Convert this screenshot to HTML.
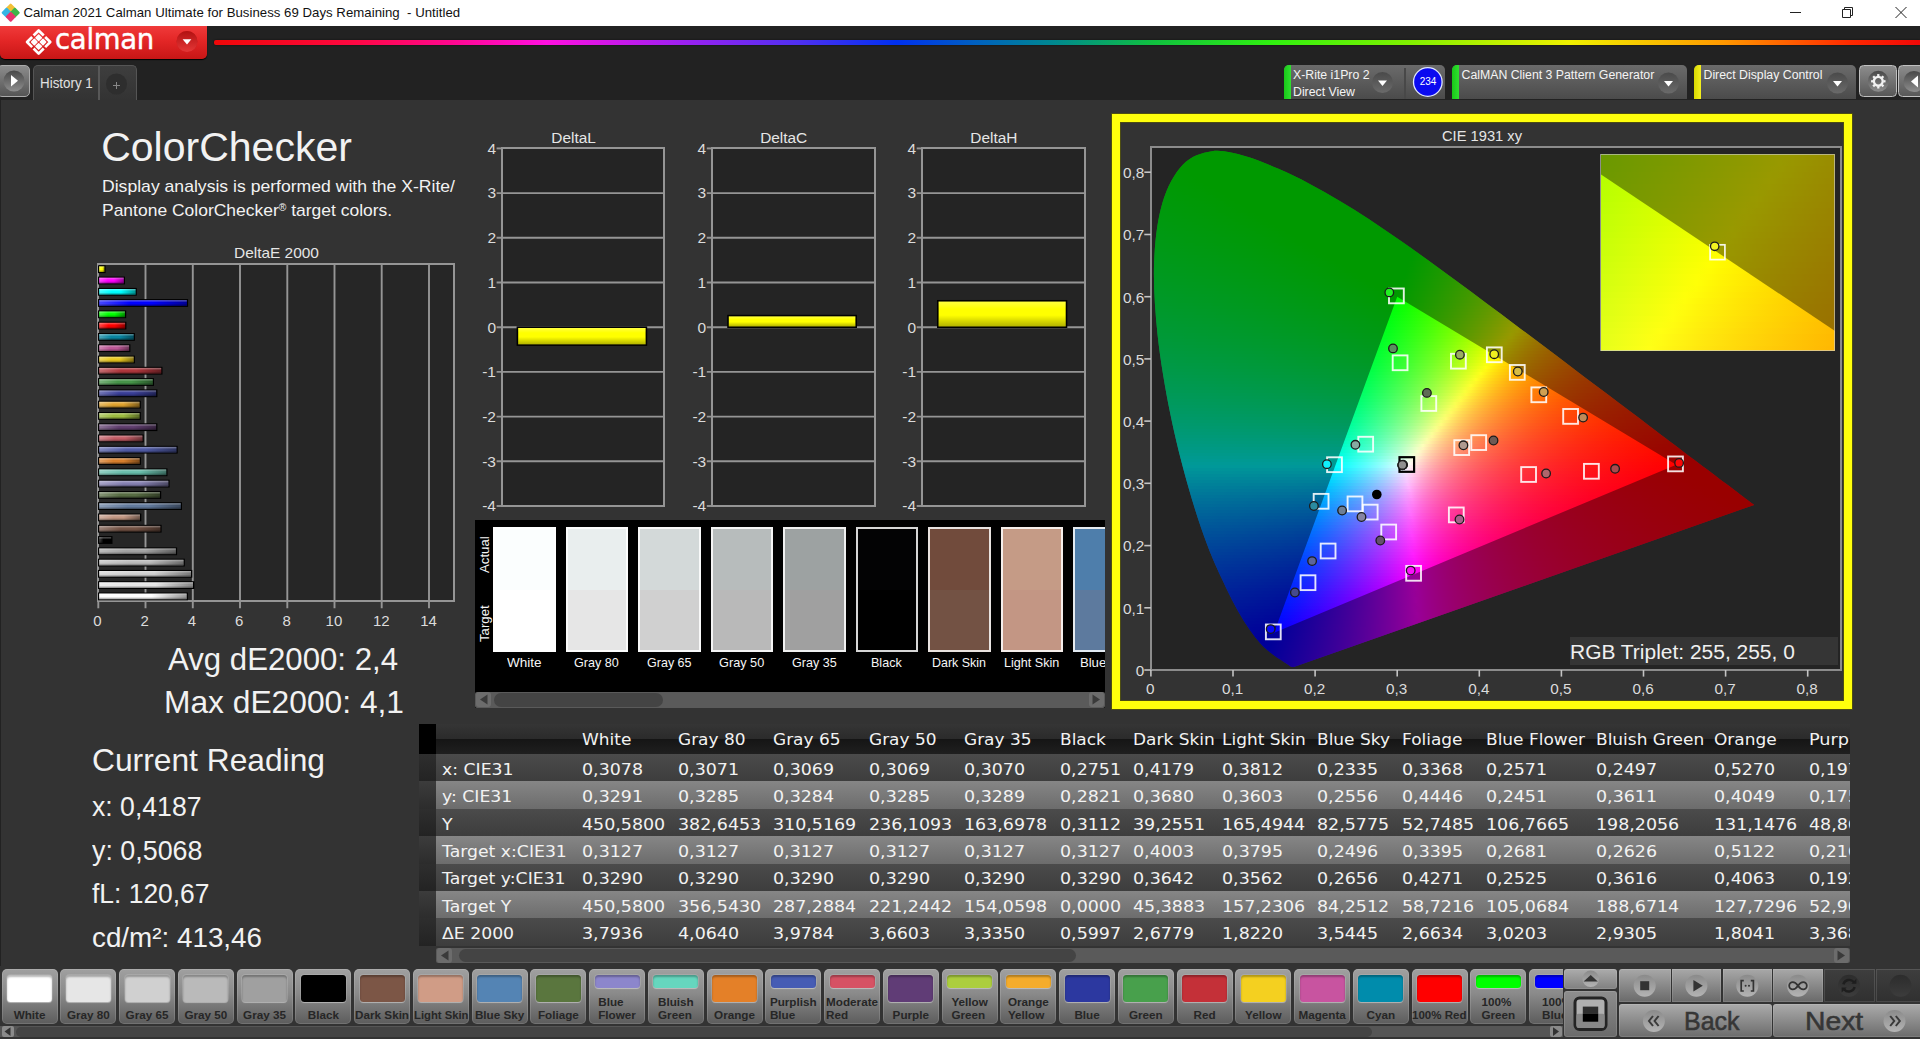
<!DOCTYPE html><html lang="en"><head><meta charset="utf-8"><title>Calman 2021 - ColorChecker</title><style>
*{box-sizing:border-box;margin:0;padding:0}
html,body{width:1920px;height:1039px;overflow:hidden;background:#222}
body{position:relative;font-family:"Liberation Sans","DejaVu Sans",sans-serif;color:#f2f2f2}
.a{position:absolute}
.t{position:absolute;white-space:nowrap;line-height:1}
.c{text-align:center}
.r{text-align:right}
svg{position:absolute;left:0;top:0;overflow:visible}
#cie i,#ins i{position:absolute;display:block;height:3px}#ins i{height:6px}/*EXTRA_CSS*/</style></head><body><div class="a" style="left:0;top:0;width:1920px;height:25.5px;background:#fff"></div><svg width="24" height="26" viewBox="0 0 24 26"><g transform="translate(10.7,12.7) scale(.9)">
<rect x="-4.2" y="-4.2" width="8.4" height="8.4" rx="1.2" transform="translate(0,-4.6) rotate(45)" fill="#f2c037"/>
<rect x="-4.2" y="-4.2" width="8.4" height="8.4" rx="1.2" transform="translate(-4.6,0) rotate(45)" fill="#35b5e5"/>
<rect x="-4.2" y="-4.2" width="8.4" height="8.4" rx="1.2" transform="translate(4.6,0) rotate(45)" fill="#3fb549"/>
<rect x="-4.2" y="-4.2" width="8.4" height="8.4" rx="1.2" transform="translate(0,4.6) rotate(45)" fill="#e8336d"/>
</g></svg><div class="t" id="ttl" style="left:23.4px;top:6px;font-size:13.2px;color:#111;letter-spacing:0.03px">Calman 2021 Calman Ultimate for Business 69 Days Remaining&nbsp; - Untitled</div><svg width="1920" height="26" viewBox="0 0 1920 26"><g stroke="#222" stroke-width="1" fill="none">
<path d="M1790 12.5h11"/>
<path d="M1842.5 9.5h8v8h-8zM1844.5 9.5v-2h8v8h-2"/>
<path d="M1895.5 7l11 11M1906.5 7l-11 11"/></g></svg><div class="a" style="left:0;top:25.5px;width:1920px;height:74.5px;background:#222"></div><div class="a" style="left:214px;top:39.6px;width:1706px;height:5.6px;border-radius:2px 0 0 2px;background:linear-gradient(90deg,#f00808 0%,#ff0840 8%,#ff0890 14%,#ff10e0 19.5%,#a020f0 27.2%,#5030f0 34.2%,#0030f0 40%,#0060c0 44.6%,#008890 49.2%,#10c040 55%,#30f010 62%,#80f000 70%,#f0f000 79.5%,#ff9800 88.5%,#ff2800 96%,#f00808 100%);box-shadow:0 0 2px rgba(0,0,0,.6)"></div><div class="a" style="left:0.3px;top:25.5px;width:206.5px;height:33.4px;border-radius:0 0 5px 5px;background:linear-gradient(#f03a3a 0%,#e32626 45%,#c81616 100%);box-shadow:0 1px 1px #000"></div><svg width="210" height="60" viewBox="0 0 210 60">
<g transform="translate(38.65,42.05) rotate(45)" fill="#fff">
 <g fill="none" stroke="#fff" stroke-width="2.7" stroke-linejoin="round" stroke-linecap="butt">
 <path d="M-8.2 -1V-8.2H-1"/><path d="M1 -8.2H8.2V-1"/><path d="M8.2 1V8.2H1"/><path d="M-1 8.2H-8.2V1"/></g>
 <rect x="-5.75" y="-5.75" width="5.35" height="5.35" rx=".8"/><rect x=".4" y="-5.75" width="5.35" height="5.35" rx=".8"/>
 <rect x="-5.75" y=".4" width="5.35" height="5.35" rx=".8"/><rect x=".4" y=".4" width="5.35" height="5.35" rx=".8"/>
</g>
<circle cx="187" cy="41.5" r="10.5" fill="#c51a1a"/><circle cx="187" cy="41.5" r="10.5" fill="url(#rg1)"/>
<path d="M182.6 39.2h8.8l-4.4 5.2z" fill="#fff"/>
<defs><linearGradient id="rg1" x1="0" y1="0" x2="0" y2="1"><stop offset="0" stop-color="#b01010" stop-opacity=".9"/><stop offset="1" stop-color="#e83a3a" stop-opacity=".9"/></linearGradient></defs>
</svg><div class="t" id="logo" style="left:55.3px;top:25.2px;font-size:28.7px;letter-spacing:-0.3px;color:#fff;-webkit-text-stroke:.45px #fff;font-family:'DejaVu Sans','Liberation Sans',sans-serif;transform-origin:0 0;transform:scaleX(.958)">calman</div><div class="a" style="left:-3px;top:65px;width:33px;height:32px;border-radius:5px;border:1.5px solid #aaa;background:linear-gradient(#8c8c8c,#555)"></div><svg width="40" height="100" viewBox="0 0 40 100"><circle cx="14" cy="81" r="10.5" fill="url(#dcg)"/><path d="M11 75v11.5l7-5.75z" fill="#fff"/></svg><div class="a" style="left:33px;top:65px;width:104px;height:35px;border-radius:5px 5px 0 0;border:1.5px solid #555;border-bottom:0;background:linear-gradient(#3e3e3e,#333)"></div><div class="a" style="left:98px;top:66px;width:2px;height:34px;background:#585858"></div><div class="t" style="left:39.8px;top:76.3px;font-size:14px;color:#e2e2e2;transform-origin:0 0;transform:scaleX(.955)">History 1</div><svg width="140" height="100" viewBox="0 0 140 100"><circle cx="116.5" cy="84" r="10.5" fill="#2e2e2e"/><path d="M113 85.5h7M116.5 82v7" stroke="#888" stroke-width="1"/></svg><div class="a" style="left:1283.5px;top:65px;width:161.5px;height:34px;border-radius:5px 5px 0 0;background:linear-gradient(#6b6b6b,#4b4b4b);overflow:hidden"><div class="a" style="left:0;top:0;width:7px;height:34px;background:linear-gradient(90deg,#18c818,#30e030)"></div></div><div class="a" style="left:1452px;top:65px;width:235px;height:34px;border-radius:5px 5px 0 0;background:linear-gradient(#6b6b6b,#4b4b4b);overflow:hidden"><div class="a" style="left:0;top:0;width:7px;height:34px;background:linear-gradient(90deg,#18c818,#30e030)"></div></div><div class="a" style="left:1694px;top:65px;width:162px;height:34px;border-radius:5px 5px 0 0;background:linear-gradient(#6b6b6b,#4b4b4b);overflow:hidden"><div class="a" style="left:0;top:0;width:7px;height:34px;background:linear-gradient(90deg,#d8d800,#f4f020)"></div></div><div class="a" style="left:1404px;top:68px;width:1.5px;height:31px;background:#484848"></div><div class="t" style="left:1293px;top:67px;font-size:12.3px;color:#f4f4f4;line-height:16.6px">X-Rite i1Pro 2<br>Direct View</div><div class="t" style="left:1461.5px;top:67px;font-size:12.3px;color:#f4f4f4;line-height:16.6px">CalMAN Client 3 Pattern Generator</div><div class="t" style="left:1703.5px;top:67px;font-size:12.3px;color:#f4f4f4;line-height:16.6px">Direct Display Control</div><svg width="1920" height="110" viewBox="0 0 1920 110"><defs><linearGradient id="ddg" x1="0" y1="0" x2="0" y2="1"><stop offset="0" stop-color="#4a4a4a"/><stop offset="1" stop-color="#6a6a6a"/></linearGradient></defs><circle cx="1382.5" cy="82.5" r="10.5" fill="url(#ddg)"/><path d="M1378.0 80.5h9l-4.5 5.4z" fill="#fff"/><circle cx="1668.5" cy="83" r="10.5" fill="url(#ddg)"/><path d="M1664.0 81h9l-4.5 5.4z" fill="#fff"/><circle cx="1837.5" cy="83" r="10.5" fill="url(#ddg)"/><path d="M1833.0 81h9l-4.5 5.4z" fill="#fff"/><circle cx="1427.8" cy="82" r="14.3" fill="#0a0af0" stroke="#dfe6ff" stroke-width="1.3"/></svg><div class="t c" style="left:1412px;width:32px;top:77px;font-size:10px;color:#fff">234</div><div class="a" style="left:1859px;top:64.8px;width:38.4px;height:32.2px;border-radius:4.5px;border:1.8px solid #c0c0c0;background:linear-gradient(#8c8c8c,#585858)"></div><div class="a" style="left:1898.4px;top:64.8px;width:30px;height:32.2px;border-radius:4.5px;border:1.8px solid #c0c0c0;background:linear-gradient(#8c8c8c,#585858)"></div><svg width="1920" height="110" viewBox="0 0 1920 110"><g transform="translate(1878.3,81.3)"><circle r="10.5" fill="url(#dcg)"/><g fill="none" stroke="#f2f2f2" transform="scale(.94)"><circle r="4.7" stroke-width="2.5"/><g stroke-width="2.4"><path d="M5.40 0.00L7.70 0.00"/><path d="M3.82 3.82L5.44 5.44"/><path d="M0.00 5.40L0.00 7.70"/><path d="M-3.82 3.82L-5.44 5.44"/><path d="M-5.40 0.00L-7.70 0.00"/><path d="M-3.82 -3.82L-5.44 -5.44"/><path d="M-0.00 -5.40L-0.00 -7.70"/><path d="M3.82 -3.82L5.44 -5.44"/></g></g></g><defs><linearGradient id="dcg" x1="0" y1="0" x2="0" y2="1"><stop offset="0" stop-color="#484848"/><stop offset="1" stop-color="#8e8e8e"/></linearGradient></defs><circle cx="1914" cy="81.5" r="10.5" fill="url(#dcg)"/><path d="M1918 75.5v12l-7-6z" fill="#fff"/></svg><div class="a" style="left:1px;top:100px;width:1919px;height:866px;background:#333"></div><div class="t" style="left:101.2px;top:127.4px;font-size:41px;">ColorChecker</div><div class="t" style="left:102.3px;top:178.4px;font-size:17px;transform-origin:0 0;transform:scaleX(1.0350);">Display analysis is performed with the X-Rite/</div><div class="t" style="left:102.3px;top:201.6px;font-size:17px;transform-origin:0 0;transform:scaleX(1.0278);">Pantone ColorChecker<span style="font-size:10px;position:relative;top:-5px">®</span> target colors.</div><div class="t" style="left:233.5px;top:246.1px;font-size:14.6px;transform-origin:0 0;transform:scaleX(1.0577);color:#e6e6e6;">DeltaE 2000</div><div class="a" style="left:97.3px;top:263.2px;width:358.0px;height:339.1px;background:#262626;border:2px solid #959595"></div><svg width="1920" height="1039" viewBox="0 0 1920 1039"><g stroke="#959595" stroke-width="1.9"><path d="M145.5 264.2V608.3"/><path d="M192.8 264.2V608.3"/><path d="M240.0 264.2V608.3"/><path d="M287.3 264.2V608.3"/><path d="M334.5 264.2V608.3"/><path d="M381.7 264.2V608.3"/><path d="M429.0 264.2V608.3"/><path d="M98.3 601.3v7"/></g><defs><linearGradient id="bs" x1="0" y1="0" x2="0" y2="1"><stop offset="0" stop-color="#fff" stop-opacity=".38"/><stop offset=".4" stop-color="#fff" stop-opacity="0"/><stop offset=".6" stop-color="#000" stop-opacity="0"/><stop offset="1" stop-color="#000" stop-opacity=".4"/></linearGradient><linearGradient id="bh" x1="0" y1="0" x2="1" y2="0"><stop offset="0" stop-color="#fff" stop-opacity=".28"/><stop offset=".35" stop-color="#fff" stop-opacity="0"/><stop offset=".6" stop-color="#000" stop-opacity="0"/><stop offset="1" stop-color="#000" stop-opacity=".42"/></linearGradient></defs><rect x="98.0" y="265.3" width="7.6" height="7.8" fill="#000"/><rect x="99.2" y="266.4" width="5.1" height="5.6" fill="#ffff00"/><rect x="99.2" y="266.4" width="5.1" height="5.6" fill="url(#bh)"/><rect x="99.2" y="266.4" width="5.1" height="5.6" fill="url(#bs)"/><rect x="98.0" y="276.6" width="27.0" height="7.8" fill="#000"/><rect x="99.2" y="277.7" width="24.5" height="5.6" fill="#ff00ff"/><rect x="99.2" y="277.7" width="24.5" height="5.6" fill="url(#bh)"/><rect x="99.2" y="277.7" width="24.5" height="5.6" fill="url(#bs)"/><rect x="98.0" y="287.9" width="38.8" height="7.8" fill="#000"/><rect x="99.2" y="289.0" width="36.3" height="5.6" fill="#00ffff"/><rect x="99.2" y="289.0" width="36.3" height="5.6" fill="url(#bh)"/><rect x="99.2" y="289.0" width="36.3" height="5.6" fill="url(#bs)"/><rect x="98.0" y="299.1" width="90.1" height="7.8" fill="#000"/><rect x="99.2" y="300.2" width="87.6" height="5.6" fill="#0000ff"/><rect x="99.2" y="300.2" width="87.6" height="5.6" fill="url(#bh)"/><rect x="99.2" y="300.2" width="87.6" height="5.6" fill="url(#bs)"/><rect x="98.0" y="310.4" width="28.2" height="7.8" fill="#000"/><rect x="99.2" y="311.5" width="25.7" height="5.6" fill="#00ff00"/><rect x="99.2" y="311.5" width="25.7" height="5.6" fill="url(#bh)"/><rect x="99.2" y="311.5" width="25.7" height="5.6" fill="url(#bs)"/><rect x="98.0" y="321.7" width="28.4" height="7.8" fill="#000"/><rect x="99.2" y="322.8" width="25.9" height="5.6" fill="#ff0000"/><rect x="99.2" y="322.8" width="25.9" height="5.6" fill="url(#bh)"/><rect x="99.2" y="322.8" width="25.9" height="5.6" fill="url(#bs)"/><rect x="98.0" y="333.0" width="36.9" height="7.8" fill="#000"/><rect x="99.2" y="334.1" width="34.4" height="5.6" fill="#0885a1"/><rect x="99.2" y="334.1" width="34.4" height="5.6" fill="url(#bh)"/><rect x="99.2" y="334.1" width="34.4" height="5.6" fill="url(#bs)"/><rect x="98.0" y="344.3" width="32.4" height="7.8" fill="#000"/><rect x="99.2" y="345.4" width="29.9" height="5.6" fill="#bb5695"/><rect x="99.2" y="345.4" width="29.9" height="5.6" fill="url(#bh)"/><rect x="99.2" y="345.4" width="29.9" height="5.6" fill="url(#bs)"/><rect x="98.0" y="355.6" width="36.9" height="7.8" fill="#000"/><rect x="99.2" y="356.7" width="34.4" height="5.6" fill="#e7c71f"/><rect x="99.2" y="356.7" width="34.4" height="5.6" fill="url(#bh)"/><rect x="99.2" y="356.7" width="34.4" height="5.6" fill="url(#bs)"/><rect x="98.0" y="366.8" width="64.5" height="7.8" fill="#000"/><rect x="99.2" y="367.9" width="62.0" height="5.6" fill="#af363c"/><rect x="99.2" y="367.9" width="62.0" height="5.6" fill="url(#bh)"/><rect x="99.2" y="367.9" width="62.0" height="5.6" fill="url(#bs)"/><rect x="98.0" y="378.1" width="56.0" height="7.8" fill="#000"/><rect x="99.2" y="379.2" width="53.5" height="5.6" fill="#469449"/><rect x="99.2" y="379.2" width="53.5" height="5.6" fill="url(#bh)"/><rect x="99.2" y="379.2" width="53.5" height="5.6" fill="url(#bs)"/><rect x="98.0" y="389.4" width="59.4" height="7.8" fill="#000"/><rect x="99.2" y="390.5" width="56.9" height="5.6" fill="#383d96"/><rect x="99.2" y="390.5" width="56.9" height="5.6" fill="url(#bh)"/><rect x="99.2" y="390.5" width="56.9" height="5.6" fill="url(#bs)"/><rect x="98.0" y="400.7" width="42.8" height="7.8" fill="#000"/><rect x="99.2" y="401.8" width="40.3" height="5.6" fill="#e0a32e"/><rect x="99.2" y="401.8" width="40.3" height="5.6" fill="url(#bh)"/><rect x="99.2" y="401.8" width="40.3" height="5.6" fill="url(#bs)"/><rect x="98.0" y="412.0" width="42.8" height="7.8" fill="#000"/><rect x="99.2" y="413.1" width="40.3" height="5.6" fill="#9dbc40"/><rect x="99.2" y="413.1" width="40.3" height="5.6" fill="url(#bh)"/><rect x="99.2" y="413.1" width="40.3" height="5.6" fill="url(#bs)"/><rect x="98.0" y="423.3" width="59.4" height="7.8" fill="#000"/><rect x="99.2" y="424.4" width="56.9" height="5.6" fill="#5e3c6c"/><rect x="99.2" y="424.4" width="56.9" height="5.6" fill="url(#bh)"/><rect x="99.2" y="424.4" width="56.9" height="5.6" fill="url(#bs)"/><rect x="98.0" y="434.5" width="45.7" height="7.8" fill="#000"/><rect x="99.2" y="435.6" width="43.2" height="5.6" fill="#c15a63"/><rect x="99.2" y="435.6" width="43.2" height="5.6" fill="url(#bh)"/><rect x="99.2" y="435.6" width="43.2" height="5.6" fill="url(#bs)"/><rect x="98.0" y="445.8" width="79.7" height="7.8" fill="#000"/><rect x="99.2" y="446.9" width="77.2" height="5.6" fill="#505ba6"/><rect x="99.2" y="446.9" width="77.2" height="5.6" fill="url(#bh)"/><rect x="99.2" y="446.9" width="77.2" height="5.6" fill="url(#bs)"/><rect x="98.0" y="457.1" width="42.9" height="7.8" fill="#000"/><rect x="99.2" y="458.2" width="40.4" height="5.6" fill="#d67e2c"/><rect x="99.2" y="458.2" width="40.4" height="5.6" fill="url(#bh)"/><rect x="99.2" y="458.2" width="40.4" height="5.6" fill="url(#bs)"/><rect x="98.0" y="468.4" width="69.5" height="7.8" fill="#000"/><rect x="99.2" y="469.5" width="67.0" height="5.6" fill="#67bdaa"/><rect x="99.2" y="469.5" width="67.0" height="5.6" fill="url(#bh)"/><rect x="99.2" y="469.5" width="67.0" height="5.6" fill="url(#bs)"/><rect x="98.0" y="479.7" width="71.6" height="7.8" fill="#000"/><rect x="99.2" y="480.8" width="69.1" height="5.6" fill="#8580b1"/><rect x="99.2" y="480.8" width="69.1" height="5.6" fill="url(#bh)"/><rect x="99.2" y="480.8" width="69.1" height="5.6" fill="url(#bs)"/><rect x="98.0" y="491.0" width="63.2" height="7.8" fill="#000"/><rect x="99.2" y="492.1" width="60.7" height="5.6" fill="#576c43"/><rect x="99.2" y="492.1" width="60.7" height="5.6" fill="url(#bh)"/><rect x="99.2" y="492.1" width="60.7" height="5.6" fill="url(#bs)"/><rect x="98.0" y="502.2" width="84.0" height="7.8" fill="#000"/><rect x="99.2" y="503.3" width="81.5" height="5.6" fill="#627a9d"/><rect x="99.2" y="503.3" width="81.5" height="5.6" fill="url(#bh)"/><rect x="99.2" y="503.3" width="81.5" height="5.6" fill="url(#bs)"/><rect x="98.0" y="513.5" width="43.3" height="7.8" fill="#000"/><rect x="99.2" y="514.6" width="40.8" height="5.6" fill="#c29682"/><rect x="99.2" y="514.6" width="40.8" height="5.6" fill="url(#bh)"/><rect x="99.2" y="514.6" width="40.8" height="5.6" fill="url(#bs)"/><rect x="98.0" y="524.8" width="63.6" height="7.8" fill="#000"/><rect x="99.2" y="525.9" width="61.1" height="5.6" fill="#735244"/><rect x="99.2" y="525.9" width="61.1" height="5.6" fill="url(#bh)"/><rect x="99.2" y="525.9" width="61.1" height="5.6" fill="url(#bs)"/><rect x="98.0" y="536.1" width="14.5" height="7.8" fill="#000"/><rect x="99.2" y="537.2" width="12.0" height="5.6" fill="#000000"/><rect x="99.2" y="537.2" width="12.0" height="5.6" fill="url(#bh)"/><rect x="99.2" y="537.2" width="12.0" height="5.6" fill="url(#bs)"/><rect x="98.0" y="547.4" width="79.1" height="7.8" fill="#000"/><rect x="99.2" y="548.5" width="76.6" height="5.6" fill="#a0a0a0"/><rect x="99.2" y="548.5" width="76.6" height="5.6" fill="url(#bh)"/><rect x="99.2" y="548.5" width="76.6" height="5.6" fill="url(#bs)"/><rect x="98.0" y="558.7" width="86.8" height="7.8" fill="#000"/><rect x="99.2" y="559.8" width="84.3" height="5.6" fill="#bababa"/><rect x="99.2" y="559.8" width="84.3" height="5.6" fill="url(#bh)"/><rect x="99.2" y="559.8" width="84.3" height="5.6" fill="url(#bs)"/><rect x="98.0" y="569.9" width="94.3" height="7.8" fill="#000"/><rect x="99.2" y="571.0" width="91.8" height="5.6" fill="#d0d0d0"/><rect x="99.2" y="571.0" width="91.8" height="5.6" fill="url(#bh)"/><rect x="99.2" y="571.0" width="91.8" height="5.6" fill="url(#bs)"/><rect x="98.0" y="581.2" width="96.3" height="7.8" fill="#000"/><rect x="99.2" y="582.3" width="93.8" height="5.6" fill="#e6e6e6"/><rect x="99.2" y="582.3" width="93.8" height="5.6" fill="url(#bh)"/><rect x="99.2" y="582.3" width="93.8" height="5.6" fill="url(#bs)"/><rect x="98.0" y="592.5" width="89.9" height="7.8" fill="#000"/><rect x="99.2" y="593.6" width="87.4" height="5.6" fill="#ffffff"/><rect x="99.2" y="593.6" width="87.4" height="5.6" fill="url(#bh)"/><rect x="99.2" y="593.6" width="87.4" height="5.6" fill="url(#bs)"/></svg><div class="t" style="left:93.2px;top:612.5px;font-size:15.0px;color:#dcdcdc;">0</div><div class="t" style="left:140.5px;top:612.5px;font-size:15.0px;color:#dcdcdc;">2</div><div class="t" style="left:187.8px;top:612.5px;font-size:15.0px;color:#dcdcdc;">4</div><div class="t" style="left:235.1px;top:612.5px;font-size:15.0px;color:#dcdcdc;">6</div><div class="t" style="left:282.4px;top:612.5px;font-size:15.0px;color:#dcdcdc;">8</div><div class="t" style="left:325.6px;top:612.5px;font-size:15.0px;color:#dcdcdc;">10</div><div class="t" style="left:372.9px;top:612.5px;font-size:15.0px;color:#dcdcdc;">12</div><div class="t" style="left:420.2px;top:612.5px;font-size:15.0px;color:#dcdcdc;">14</div><div class="t" style="left:168.0px;top:643.7px;font-size:30.5px;transform-origin:0 0;transform:scaleX(1.0223);">Avg dE2000: 2,4</div><div class="t" style="left:163.5px;top:686.7px;font-size:30.5px;transform-origin:0 0;transform:scaleX(1.0408);">Max dE2000: 4,1</div><div class="t" style="left:91.5px;top:745.2px;font-size:30.5px;transform-origin:0 0;transform:scaleX(1.0411);">Current Reading</div><div class="t" style="left:91.5px;top:792.7px;font-size:27.5px;transform-origin:0 0;transform:scaleX(0.9678);">x: 0,4187</div><div class="t" style="left:91.5px;top:836.7px;font-size:27.5px;transform-origin:0 0;transform:scaleX(0.9766);">y: 0,5068</div><div class="t" style="left:91.5px;top:879.7px;font-size:27.5px;transform-origin:0 0;transform:scaleX(0.9605);">fL: 120,67</div><div class="t" style="left:91.5px;top:923.7px;font-size:27.5px;transform-origin:0 0;transform:scaleX(1.0110);">cd/m²: 413,46</div><svg width="0" height="0"><defs><linearGradient id="ys" x1="0" y1="0" x2="0" y2="1"><stop offset="0" stop-color="#fff" stop-opacity=".25"/><stop offset=".3" stop-color="#fff" stop-opacity="0"/><stop offset=".55" stop-color="#000" stop-opacity="0"/><stop offset="1" stop-color="#000" stop-opacity=".3"/></linearGradient></defs></svg><div class="a" style="left:500.6px;top:147.4px;width:164.9px;height:359.6px;background:#242424;border:2px solid #959595"></div><svg width="1920" height="1039" viewBox="0 0 1920 1039"><g stroke="#959595" stroke-width="1.9"><path d="M496.6 148.4H501.6"/><path d="M496.6 193.1H664.5"/><path d="M496.6 237.8H664.5"/><path d="M496.6 282.5H664.5"/><path d="M496.6 327.2H664.5"/><path d="M496.6 371.9H664.5"/><path d="M496.6 416.6H664.5"/><path d="M496.6 461.3H664.5"/><path d="M496.6 506.0H501.6"/></g><rect x="517.4" y="327.2" width="129.0" height="17.9" fill="#ff0" stroke="#000" stroke-width="1.6"/><rect x="518.2" y="328.0" width="127.4" height="16.3" fill="url(#ys)"/></svg><div class="t" style="left:551.3px;top:129.8px;font-size:15.4px;color:#e6e6e6;">DeltaL</div><div class="t" style="left:487.4px;top:140.7px;font-size:15.5px;color:#dcdcdc;">4</div><div class="t" style="left:487.4px;top:185.4px;font-size:15.5px;color:#dcdcdc;">3</div><div class="t" style="left:487.4px;top:230.1px;font-size:15.5px;color:#dcdcdc;">2</div><div class="t" style="left:487.4px;top:274.8px;font-size:15.5px;color:#dcdcdc;">1</div><div class="t" style="left:487.4px;top:319.5px;font-size:15.5px;color:#dcdcdc;">0</div><div class="t" style="left:482.2px;top:364.2px;font-size:15.5px;color:#dcdcdc;">-1</div><div class="t" style="left:482.2px;top:408.9px;font-size:15.5px;color:#dcdcdc;">-2</div><div class="t" style="left:482.2px;top:453.6px;font-size:15.5px;color:#dcdcdc;">-3</div><div class="t" style="left:482.2px;top:498.3px;font-size:15.5px;color:#dcdcdc;">-4</div><div class="a" style="left:710.8px;top:147.4px;width:164.9px;height:359.6px;background:#242424;border:2px solid #959595"></div><svg width="1920" height="1039" viewBox="0 0 1920 1039"><g stroke="#959595" stroke-width="1.9"><path d="M706.8 148.4H711.8"/><path d="M706.8 193.1H874.7"/><path d="M706.8 237.8H874.7"/><path d="M706.8 282.5H874.7"/><path d="M706.8 327.2H874.7"/><path d="M706.8 371.9H874.7"/><path d="M706.8 416.6H874.7"/><path d="M706.8 461.3H874.7"/><path d="M706.8 506.0H711.8"/></g><rect x="728.0" y="315.6" width="128.2" height="11.6" fill="#ff0" stroke="#000" stroke-width="1.6"/><rect x="728.8" y="316.4" width="126.6" height="10.0" fill="url(#ys)"/></svg><div class="t" style="left:760.2px;top:129.8px;font-size:15.4px;color:#e6e6e6;">DeltaC</div><div class="t" style="left:697.6px;top:140.7px;font-size:15.5px;color:#dcdcdc;">4</div><div class="t" style="left:697.6px;top:185.4px;font-size:15.5px;color:#dcdcdc;">3</div><div class="t" style="left:697.6px;top:230.1px;font-size:15.5px;color:#dcdcdc;">2</div><div class="t" style="left:697.6px;top:274.8px;font-size:15.5px;color:#dcdcdc;">1</div><div class="t" style="left:697.6px;top:319.5px;font-size:15.5px;color:#dcdcdc;">0</div><div class="t" style="left:692.4px;top:364.2px;font-size:15.5px;color:#dcdcdc;">-1</div><div class="t" style="left:692.4px;top:408.9px;font-size:15.5px;color:#dcdcdc;">-2</div><div class="t" style="left:692.4px;top:453.6px;font-size:15.5px;color:#dcdcdc;">-3</div><div class="t" style="left:692.4px;top:498.3px;font-size:15.5px;color:#dcdcdc;">-4</div><div class="a" style="left:920.7px;top:147.4px;width:165.3px;height:359.6px;background:#242424;border:2px solid #959595"></div><svg width="1920" height="1039" viewBox="0 0 1920 1039"><g stroke="#959595" stroke-width="1.9"><path d="M916.7 148.4H921.7"/><path d="M916.7 193.1H1085.0"/><path d="M916.7 237.8H1085.0"/><path d="M916.7 282.5H1085.0"/><path d="M916.7 327.2H1085.0"/><path d="M916.7 371.9H1085.0"/><path d="M916.7 416.6H1085.0"/><path d="M916.7 461.3H1085.0"/><path d="M916.7 506.0H921.7"/></g><rect x="937.8" y="300.8" width="128.7" height="26.4" fill="#ff0" stroke="#000" stroke-width="1.6"/><rect x="938.6" y="301.6" width="127.1" height="24.8" fill="url(#ys)"/></svg><div class="t" style="left:970.3px;top:129.8px;font-size:15.4px;color:#e6e6e6;">DeltaH</div><div class="t" style="left:907.5px;top:140.7px;font-size:15.5px;color:#dcdcdc;">4</div><div class="t" style="left:907.5px;top:185.4px;font-size:15.5px;color:#dcdcdc;">3</div><div class="t" style="left:907.5px;top:230.1px;font-size:15.5px;color:#dcdcdc;">2</div><div class="t" style="left:907.5px;top:274.8px;font-size:15.5px;color:#dcdcdc;">1</div><div class="t" style="left:907.5px;top:319.5px;font-size:15.5px;color:#dcdcdc;">0</div><div class="t" style="left:902.3px;top:364.2px;font-size:15.5px;color:#dcdcdc;">-1</div><div class="t" style="left:902.3px;top:408.9px;font-size:15.5px;color:#dcdcdc;">-2</div><div class="t" style="left:902.3px;top:453.6px;font-size:15.5px;color:#dcdcdc;">-3</div><div class="t" style="left:902.3px;top:498.3px;font-size:15.5px;color:#dcdcdc;">-4</div><div class="a" style="left:475px;top:520px;width:630px;height:188px;background:#000"></div><div class="a" style="left:493.2px;top:527.3px;width:62.7px;height:124.6px;background:linear-gradient(#fbfefe 50%,#ffffff 50%);border:2px solid rgba(255,255,255,.84);"></div><div class="t" style="left:506.7px;top:656.4px;font-size:13.2px;transform-origin:0 0;transform:scaleX(1.0254);color:#f6f6f6;">White</div><div class="a" style="left:565.7px;top:527.3px;width:62.7px;height:124.6px;background:linear-gradient(#e9eeee 50%,#e6e6e6 50%);border:2px solid rgba(255,255,255,.84);"></div><div class="t" style="left:574.1px;top:656.4px;font-size:13.2px;transform-origin:0 0;transform:scaleX(0.9541);color:#f6f6f6;">Gray 80</div><div class="a" style="left:638.2px;top:527.3px;width:62.7px;height:124.6px;background:linear-gradient(#d3d9d9 50%,#d0d0d0 50%);border:2px solid rgba(255,255,255,.84);"></div><div class="t" style="left:646.7px;top:656.4px;font-size:13.2px;transform-origin:0 0;transform:scaleX(0.9498);color:#f6f6f6;">Gray 65</div><div class="a" style="left:710.7px;top:527.3px;width:62.7px;height:124.6px;background:linear-gradient(#b7bcbc 50%,#b9b9b9 50%);border:2px solid rgba(255,255,255,.84);"></div><div class="t" style="left:718.9px;top:656.4px;font-size:13.2px;transform-origin:0 0;transform:scaleX(0.9648);color:#f6f6f6;">Gray 50</div><div class="a" style="left:783.2px;top:527.3px;width:62.7px;height:124.6px;background:linear-gradient(#9da2a2 50%,#a0a0a0 50%);border:2px solid rgba(255,255,255,.84);"></div><div class="t" style="left:791.6px;top:656.4px;font-size:13.2px;transform-origin:0 0;transform:scaleX(0.9520);color:#f6f6f6;">Gray 35</div><div class="a" style="left:855.7px;top:527.3px;width:62.7px;height:124.6px;background:linear-gradient(#030304 50%,#000000 50%);border:2px solid rgba(255,255,255,.84);"></div><div class="t" style="left:871.1px;top:656.4px;font-size:13.2px;transform-origin:0 0;transform:scaleX(0.9511);color:#f6f6f6;">Black</div><div class="a" style="left:928.2px;top:527.3px;width:62.7px;height:124.6px;background:linear-gradient(#714b3c 50%,#735244 50%);border:2px solid rgba(255,255,255,.84);"></div><div class="t" style="left:932.0px;top:656.4px;font-size:13.2px;transform-origin:0 0;transform:scaleX(0.9438);color:#f6f6f6;">Dark Skin</div><div class="a" style="left:1000.7px;top:527.3px;width:62.7px;height:124.6px;background:linear-gradient(#c59b86 50%,#c39684 50%);border:2px solid rgba(255,255,255,.84);"></div><div class="t" style="left:1003.9px;top:656.4px;font-size:13.2px;transform-origin:0 0;transform:scaleX(0.9539);color:#f6f6f6;">Light Skin</div><div class="a" style="left:1073.2px;top:527.3px;width:31.8px;height:124.6px;background:linear-gradient(#4e7eab 50%,#5d7a9e 50%);border:2px solid rgba(255,255,255,.84);border-right:0;"></div><div class="a" style="left:1072.5px;top:655px;width:32.5px;height:20px;overflow:hidden"><div class="t" style="left:7.4px;top:1.4px;font-size:13.2px;color:#f6f6f6">Blue Sky</div></div><div class="t" style="left:478.3px;top:573px;font-size:13.2px;color:#f6f6f6;transform-origin:0 0;transform:rotate(-90deg)">Actual</div><div class="t" style="left:478.3px;top:642.3px;font-size:13.2px;color:#f6f6f6;transform-origin:0 0;transform:rotate(-90deg)">Target</div><div class="a" style="left:475px;top:691.5px;width:630px;height:16px;background:#5a5a5a;border-radius:2px"></div><div class="a" style="left:494px;top:692.5px;width:169px;height:14px;background:#444;border-radius:7px"></div><div class="a" style="left:476px;top:692px;width:15px;height:15px;background:#6c6c6c;border-radius:3px"></div><div class="a" style="left:1088.5px;top:692px;width:15px;height:15px;background:#6c6c6c;border-radius:3px"></div><svg width="1920" height="1039" viewBox="0 0 1920 1039"><path d="M487.5 694.5v10l-7.5-5z" fill="#3a3a3a"/><path d="M1092.5 694.5v10l7.5-5z" fill="#3a3a3a"/></svg><div class="a" style="left:1112px;top:114px;width:740.2px;height:594.6px;border:8.2px solid #ffff0c;box-shadow:inset 0 0 0 .8px #55550a,0 0 0 .8px #55550a"></div><div class="t" style="left:1442.0px;top:129.2px;font-size:14.6px;transform-origin:0 0;transform:scaleX(1.0059);color:#e6e6e6;">CIE 1931 xy</div><div class="a" style="left:1149.9px;top:146.1px;width:692.1px;height:524.9px;background:#242424;border:2px solid #8c8c8c"></div><div class="a" id="cie" style="left:1150px;top:147px;width:690px;height:522px;clip-path:path('M143.8 519.9C143.8 519.9 143.7 519.9 143.6 520.0C143.5 520.0 143.3 520.0 143.2 520.0C143.0 520.0 142.9 520.0 142.6 520.0C142.3 520.0 141.9 519.9 141.6 519.8C141.3 519.7 141.1 519.6 140.7 519.4C140.4 519.2 140.0 519.0 139.6 518.7C139.1 518.4 138.5 518.1 137.9 517.6C137.3 517.2 136.7 516.8 135.9 516.2C135.1 515.7 134.2 515.1 133.2 514.4C132.1 513.7 130.9 512.9 129.5 512.0C128.1 511.1 126.6 510.1 124.9 508.9C123.1 507.6 121.2 506.3 119.1 504.5C117.0 502.7 114.9 501.1 112.1 498.2C109.4 495.3 106.3 491.9 102.8 487.0C99.2 482.2 95.4 476.8 90.9 469.0C86.4 461.2 81.5 452.2 75.9 440.4C70.3 428.6 63.6 415.0 57.3 398.1C51.0 381.3 44.4 361.4 38.2 339.5C32.0 317.5 25.3 291.5 20.2 266.2C15.1 241.0 10.3 213.1 7.6 188.0C5.0 162.9 3.3 137.5 4.1 115.6C4.9 93.6 7.5 72.5 12.3 56.2C17.1 39.9 24.6 26.4 32.8 17.8C41.1 9.1 51.6 5.7 61.9 4.2C72.2 2.7 83.7 6.0 94.7 8.9C105.7 11.8 117.1 16.9 127.9 21.6C138.7 26.2 149.0 31.3 159.3 36.7C169.5 42.0 179.4 47.7 189.4 53.7C199.4 59.6 209.3 65.9 219.1 72.3C229.0 78.8 238.7 85.5 248.5 92.3C258.3 99.0 268.0 106.0 277.8 113.0C287.6 120.1 297.4 127.2 307.2 134.4C317.0 141.6 326.7 148.9 336.4 156.2C346.2 163.4 355.9 170.7 365.5 177.9C375.1 185.1 384.6 192.3 394.0 199.3C403.4 206.4 412.6 213.4 421.7 220.2C430.7 227.1 439.6 233.8 448.2 240.3C456.8 246.7 465.2 253.1 473.1 259.1C481.1 265.1 488.8 270.9 495.9 276.3C503.0 281.7 509.5 286.6 515.7 291.2C521.9 295.9 527.8 300.4 533.1 304.4C538.4 308.4 543.2 311.9 547.5 315.2C551.9 318.5 555.7 321.4 559.3 324.1C562.8 326.7 565.8 329.1 568.6 331.2C571.4 333.3 573.8 335.1 576.1 336.8C578.3 338.5 580.3 339.9 582.1 341.3C583.9 342.7 585.6 344.0 587.1 345.1C588.6 346.3 590.0 347.3 591.2 348.2C592.4 349.1 593.5 349.9 594.5 350.7C595.4 351.4 596.2 352.0 596.9 352.5C597.7 353.1 598.3 353.5 598.8 353.9C599.4 354.4 599.7 354.6 600.2 355.0C600.7 355.4 601.4 355.9 601.9 356.3C602.3 356.6 602.7 356.8 603.0 357.1C603.4 357.4 603.9 357.8 604.1 357.9Z')"><i style="left:46px;top:0px;width:42px;background:linear-gradient(90deg,#00ff00,#00ff00,#00ff00,#00ff00,#00ff00,#00ff00,#00ff00,#00ff00)"></i><i style="left:39px;top:3px;width:72px;background:linear-gradient(90deg,#00ff00,#00ff00,#00ff00,#00ff00,#00ff00,#00ff00,#00ff00,#00ff00,#00ff00,#00ff00,#00ff00,#00ff00,#00ff00)"></i><i style="left:33px;top:6px;width:84px;background:linear-gradient(90deg,#00ff00,#00ff00,#00ff00,#00ff00,#00ff00,#00ff00,#00ff00,#00ff00,#00ff00,#00ff00,#00ff00,#00ff00,#00ff00,#00ff00,#00ff00)"></i><i style="left:26px;top:9px;width:102px;background:linear-gradient(90deg,#00ff00,#00ff00,#00ff00,#00ff00,#00ff00,#00ff00,#00ff00,#00ff00,#00ff00,#00ff00,#00ff00,#00ff00,#00ff00,#00ff00,#00ff00,#00ff00,#00ff00,#00ff00)"></i><i style="left:20px;top:12px;width:114px;background:linear-gradient(90deg,#00ff00,#00ff00,#00ff00,#00ff00,#00ff00,#00ff00,#00ff00,#00ff00,#00ff00,#00ff00,#00ff00,#00ff00,#00ff00,#00ff00,#00ff00,#00ff00,#00ff00,#00ff00,#00ff00,#00ff00)"></i><i style="left:19px;top:15px;width:120px;background:linear-gradient(90deg,#00ff01,#00ff00,#00ff00,#00ff00,#00ff00,#00ff00,#00ff00,#00ff00,#00ff00,#00ff00,#00ff00,#00ff00,#00ff00,#00ff00,#00ff00,#00ff00,#00ff00,#00ff00,#00ff00,#00ff00,#00ff00)"></i><i style="left:17px;top:18px;width:132px;background:linear-gradient(90deg,#00ff03,#00ff02,#00ff00,#00ff00,#00ff00,#00ff00,#00ff00,#00ff00,#00ff00,#00ff00,#00ff00,#00ff00,#00ff00,#00ff00,#00ff00,#00ff00,#00ff00,#00ff00,#00ff00,#00ff00,#00ff00,#00ff00,#00ff00)"></i><i style="left:15px;top:21px;width:138px;background:linear-gradient(90deg,#00ff04,#00ff03,#00ff02,#00ff01,#00ff00,#00ff00,#00ff00,#00ff00,#00ff00,#00ff00,#00ff00,#00ff00,#00ff00,#00ff00,#00ff00,#00ff00,#00ff00,#00ff00,#00ff00,#00ff00,#00ff00,#00ff00,#00ff00,#00ff00)"></i><i style="left:14px;top:24px;width:144px;background:linear-gradient(90deg,#00ff06,#00ff04,#00ff03,#00ff02,#00ff01,#00ff00,#00ff00,#00ff00,#00ff00,#00ff00,#00ff00,#00ff00,#00ff00,#00ff00,#00ff00,#00ff00,#00ff00,#00ff00,#00ff00,#00ff00,#00ff00,#00ff00,#00ff00,#00ff00,#00ff00)"></i><i style="left:12px;top:27px;width:156px;background:linear-gradient(90deg,#00ff07,#00ff06,#00ff05,#00ff03,#00ff02,#00ff01,#00ff00,#00ff00,#00ff00,#00ff00,#00ff00,#00ff00,#00ff00,#00ff00,#00ff00,#00ff00,#00ff00,#00ff00,#00ff00,#00ff00,#00ff00,#00ff00,#00ff00,#00ff00,#00ff00,#00ff00,#00ff00)"></i><i style="left:11px;top:30px;width:162px;background:linear-gradient(90deg,#00ff08,#00ff07,#00ff06,#00ff05,#00ff03,#00ff02,#00ff01,#00ff00,#00ff00,#00ff00,#00ff00,#00ff00,#00ff00,#00ff00,#00ff00,#00ff00,#00ff00,#00ff00,#00ff00,#00ff00,#00ff00,#00ff00,#00ff00,#00ff00,#00ff00,#00ff00,#00ff00,#00ff00)"></i><i style="left:9px;top:33px;width:168px;background:linear-gradient(90deg,#00ff0a,#00ff09,#00ff07,#00ff06,#00ff05,#00ff04,#00ff02,#00ff01,#00ff00,#00ff00,#00ff00,#00ff00,#00ff00,#00ff00,#00ff00,#00ff00,#00ff00,#00ff00,#00ff00,#00ff00,#00ff00,#00ff00,#00ff00,#00ff00,#00ff00,#00ff00,#00ff00,#00ff00,#00ff00)"></i><i style="left:7px;top:36px;width:174px;background:linear-gradient(90deg,#00ff0b,#00ff0a,#00ff09,#00ff08,#00ff06,#00ff05,#00ff04,#00ff03,#00ff01,#00ff00,#00ff00,#00ff00,#00ff00,#00ff00,#00ff00,#00ff00,#00ff00,#00ff00,#00ff00,#00ff00,#00ff00,#00ff00,#00ff00,#00ff00,#00ff00,#00ff00,#00ff00,#00ff00,#00ff00,#00ff00)"></i><i style="left:6px;top:39px;width:186px;background:linear-gradient(90deg,#00ff0d,#00ff0c,#00ff0a,#00ff09,#00ff08,#00ff07,#00ff05,#00ff04,#00ff03,#00ff01,#00ff00,#00ff00,#00ff00,#00ff00,#00ff00,#00ff00,#00ff00,#00ff00,#00ff00,#00ff00,#00ff00,#00ff00,#00ff00,#00ff00,#00ff00,#00ff00,#00ff00,#00ff00,#00ff00,#00ff00,#00ff00,#00ff00)"></i><i style="left:4px;top:42px;width:192px;background:linear-gradient(90deg,#00ff0e,#00ff0d,#00ff0c,#00ff0b,#00ff09,#00ff08,#00ff07,#00ff06,#00ff04,#00ff03,#00ff02,#00ff00,#00ff00,#00ff00,#00ff00,#00ff00,#00ff00,#00ff00,#00ff00,#00ff00,#00ff00,#00ff00,#00ff00,#00ff00,#00ff00,#00ff00,#00ff00,#00ff00,#00ff00,#00ff00,#00ff00,#00ff00,#00ff00)"></i><i style="left:3px;top:45px;width:198px;background:linear-gradient(90deg,#00ff10,#00ff0e,#00ff0d,#00ff0c,#00ff0b,#00ff09,#00ff08,#00ff07,#00ff06,#00ff04,#00ff03,#00ff02,#00ff00,#00ff00,#00ff00,#00ff00,#00ff00,#00ff00,#00ff00,#00ff00,#00ff00,#00ff00,#00ff00,#00ff00,#00ff00,#00ff00,#00ff00,#00ff00,#00ff00,#00ff00,#00ff00,#00ff00,#00ff00,#00ff00)"></i><i style="left:1px;top:48px;width:204px;background:linear-gradient(90deg,#00ff11,#00ff10,#00ff0f,#00ff0e,#00ff0c,#00ff0b,#00ff0a,#00ff08,#00ff07,#00ff06,#00ff05,#00ff03,#00ff02,#00ff00,#00ff00,#00ff00,#00ff00,#00ff00,#00ff00,#00ff00,#00ff00,#00ff00,#00ff00,#00ff00,#00ff00,#00ff00,#00ff00,#00ff00,#00ff00,#00ff00,#00ff00,#00ff00,#00ff00,#00ff00,#00ff00)"></i><i style="left:0px;top:51px;width:210px;background:linear-gradient(90deg,#00ff13,#00ff11,#00ff10,#00ff0f,#00ff0e,#00ff0c,#00ff0b,#00ff0a,#00ff09,#00ff07,#00ff06,#00ff05,#00ff03,#00ff02,#00ff00,#00ff00,#00ff00,#00ff00,#00ff00,#00ff00,#00ff00,#00ff00,#00ff00,#00ff00,#00ff00,#00ff00,#00ff00,#00ff00,#00ff00,#00ff00,#00ff00,#00ff00,#00ff00,#00ff00,#00ff00,#00ff00)"></i><i style="left:-1px;top:54px;width:216px;background:linear-gradient(90deg,#00ff14,#00ff13,#00ff12,#00ff10,#00ff0f,#00ff0e,#00ff0d,#00ff0b,#00ff0a,#00ff09,#00ff07,#00ff06,#00ff05,#00ff03,#00ff02,#00ff00,#00ff00,#00ff00,#00ff00,#00ff00,#00ff00,#00ff00,#00ff00,#00ff00,#00ff00,#00ff00,#00ff00,#00ff00,#00ff00,#00ff00,#00ff00,#00ff00,#00ff00,#00ff00,#00ff00,#00ff00,#00ff00)"></i><i style="left:-1px;top:57px;width:222px;background:linear-gradient(90deg,#00ff15,#00ff14,#00ff13,#00ff12,#00ff10,#00ff0f,#00ff0e,#00ff0c,#00ff0b,#00ff0a,#00ff09,#00ff07,#00ff06,#00ff04,#00ff03,#00ff02,#00ff00,#00ff00,#00ff00,#00ff00,#00ff00,#00ff00,#00ff00,#00ff00,#00ff00,#00ff00,#00ff00,#00ff00,#00ff00,#00ff00,#00ff00,#00ff00,#00ff00,#00ff00,#00ff00,#00ff00,#00ff00,#00ff00)"></i><i style="left:-2px;top:60px;width:228px;background:linear-gradient(90deg,#00ff17,#00ff16,#00ff14,#00ff13,#00ff12,#00ff11,#00ff0f,#00ff0e,#00ff0d,#00ff0b,#00ff0a,#00ff09,#00ff07,#00ff06,#00ff04,#00ff03,#00ff02,#00ff00,#00ff00,#00ff00,#00ff00,#00ff00,#00ff00,#00ff00,#00ff00,#00ff00,#00ff00,#00ff00,#00ff00,#00ff00,#00ff00,#00ff00,#00ff00,#00ff00,#00ff00,#00ff00,#00ff00,#00ff00,#00ff00)"></i><i style="left:-2px;top:63px;width:228px;background:linear-gradient(90deg,#00ff18,#00ff17,#00ff16,#00ff14,#00ff13,#00ff12,#00ff10,#00ff0f,#00ff0e,#00ff0d,#00ff0b,#00ff0a,#00ff08,#00ff07,#00ff06,#00ff04,#00ff03,#00ff01,#00ff00,#00ff00,#00ff00,#00ff00,#00ff00,#00ff00,#00ff00,#00ff00,#00ff00,#00ff00,#00ff00,#00ff00,#00ff00,#00ff00,#00ff00,#00ff00,#00ff00,#00ff00,#00ff00,#00ff00,#00ff00)"></i><i style="left:-2px;top:66px;width:234px;background:linear-gradient(90deg,#00ff19,#00ff18,#00ff17,#00ff16,#00ff14,#00ff13,#00ff12,#00ff10,#00ff0f,#00ff0e,#00ff0c,#00ff0b,#00ff0a,#00ff08,#00ff07,#00ff06,#00ff04,#00ff03,#00ff01,#00ff00,#00ff00,#00ff00,#00ff00,#00ff00,#00ff00,#00ff00,#00ff00,#00ff00,#00ff00,#00ff00,#00ff00,#00ff00,#00ff00,#00ff00,#00ff00,#00ff00,#00ff00,#00ff00,#00ff00,#00ff00)"></i><i style="left:-3px;top:69px;width:240px;background:linear-gradient(90deg,#00ff1b,#00ff1a,#00ff18,#00ff17,#00ff16,#00ff15,#00ff13,#00ff12,#00ff11,#00ff0f,#00ff0e,#00ff0d,#00ff0b,#00ff0a,#00ff08,#00ff07,#00ff06,#00ff04,#00ff03,#00ff01,#00ff00,#00ff00,#00ff00,#00ff00,#00ff00,#00ff00,#00ff00,#00ff00,#00ff00,#00ff00,#00ff00,#00ff00,#00ff00,#00ff00,#00ff00,#00ff00,#00ff00,#00ff00,#00ff00,#00ff00,#00ff00)"></i><i style="left:-3px;top:72px;width:246px;background:linear-gradient(90deg,#00ff1c,#00ff1b,#00ff1a,#00ff18,#00ff17,#00ff16,#00ff15,#00ff13,#00ff12,#00ff11,#00ff0f,#00ff0e,#00ff0d,#00ff0b,#00ff0a,#00ff08,#00ff07,#00ff05,#00ff04,#00ff02,#00ff01,#00ff00,#00ff00,#00ff00,#00ff00,#00ff00,#00ff00,#00ff00,#00ff00,#00ff00,#00ff00,#00ff00,#00ff00,#00ff00,#00ff00,#00ff00,#00ff00,#00ff00,#00ff00,#00ff00,#00ff00,#00ff00)"></i><i style="left:-4px;top:75px;width:252px;background:linear-gradient(90deg,#00ff1e,#00ff1c,#00ff1b,#00ff1a,#00ff19,#00ff17,#00ff16,#00ff15,#00ff13,#00ff12,#00ff11,#00ff0f,#00ff0e,#00ff0d,#00ff0b,#00ff0a,#00ff08,#00ff07,#00ff05,#00ff04,#00ff02,#00ff01,#00ff00,#00ff00,#00ff00,#00ff00,#00ff00,#00ff00,#00ff00,#00ff00,#00ff00,#00ff00,#00ff00,#00ff00,#00ff00,#00ff00,#00ff00,#00ff00,#00ff00,#00ff00,#00ff00,#00ff00,#00ff00)"></i><i style="left:-4px;top:78px;width:258px;background:linear-gradient(90deg,#00ff1f,#00ff1e,#00ff1c,#00ff1b,#00ff1a,#00ff19,#00ff17,#00ff16,#00ff15,#00ff13,#00ff12,#00ff11,#00ff0f,#00ff0e,#00ff0d,#00ff0b,#00ff0a,#00ff08,#00ff07,#00ff05,#00ff04,#00ff02,#00ff01,#00ff00,#00ff00,#00ff00,#00ff00,#00ff00,#00ff00,#00ff00,#00ff00,#00ff00,#00ff00,#00ff00,#00ff00,#00ff00,#00ff00,#00ff00,#00ff00,#00ff00,#00ff00,#00ff00,#00ff00,#00ff00)"></i><i style="left:-4px;top:81px;width:258px;background:linear-gradient(90deg,#00ff20,#00ff1f,#00ff1e,#00ff1d,#00ff1b,#00ff1a,#00ff19,#00ff17,#00ff16,#00ff15,#00ff13,#00ff12,#00ff11,#00ff0f,#00ff0e,#00ff0c,#00ff0b,#00ff0a,#00ff08,#00ff07,#00ff05,#00ff04,#00ff02,#00ff00,#00ff00,#00ff00,#00ff00,#00ff00,#00ff00,#00ff00,#00ff00,#00ff00,#00ff00,#00ff00,#00ff00,#00ff00,#00ff00,#00ff00,#00ff00,#00ff00,#00ff00,#00ff00,#00ff00,#00ff00)"></i><i style="left:-5px;top:84px;width:264px;background:linear-gradient(90deg,#00ff22,#00ff21,#00ff1f,#00ff1e,#00ff1d,#00ff1c,#00ff1a,#00ff19,#00ff18,#00ff16,#00ff15,#00ff14,#00ff12,#00ff11,#00ff0f,#00ff0e,#00ff0d,#00ff0b,#00ff0a,#00ff08,#00ff07,#00ff05,#00ff04,#00ff02,#00ff00,#00ff00,#00ff00,#00ff00,#00ff00,#00ff00,#00ff00,#00ff00,#00ff00,#00ff00,#00ff00,#00ff00,#00ff00,#00ff00,#00ff00,#00ff00,#00ff00,#00ff00,#00ff00,#00ff00,#00ff00)"></i><i style="left:-5px;top:87px;width:270px;background:linear-gradient(90deg,#00ff23,#00ff22,#00ff21,#00ff20,#00ff1e,#00ff1d,#00ff1c,#00ff1a,#00ff19,#00ff18,#00ff16,#00ff15,#00ff14,#00ff12,#00ff11,#00ff0f,#00ff0e,#00ff0d,#00ff0b,#00ff0a,#00ff08,#00ff06,#00ff05,#00ff03,#00ff02,#00ff00,#00ff00,#00ff00,#00ff00,#00ff00,#00ff00,#00ff00,#00ff00,#00ff00,#00ff00,#00ff00,#00ff00,#00ff00,#00ff00,#00ff00,#00ff00,#00ff00,#00ff00,#00ff00,#00ff00,#00ff00)"></i><i style="left:-6px;top:90px;width:276px;background:linear-gradient(90deg,#00ff25,#00ff24,#00ff22,#00ff21,#00ff20,#00ff1f,#00ff1d,#00ff1c,#00ff1b,#00ff19,#00ff18,#00ff17,#00ff15,#00ff14,#00ff13,#00ff11,#00ff10,#00ff0e,#00ff0d,#00ff0b,#00ff0a,#00ff08,#00ff07,#00ff05,#00ff03,#00ff02,#00ff00,#00ff00,#00ff00,#00ff00,#00ff00,#00ff00,#00ff00,#00ff00,#00ff00,#00ff00,#00ff00,#00ff00,#00ff00,#00ff00,#00ff00,#00ff00,#00ff00,#00ff00,#00ff00,#00ff00,#02ff00)"></i><i style="left:-6px;top:93px;width:282px;background:linear-gradient(90deg,#00ff26,#00ff25,#00ff24,#00ff23,#00ff21,#00ff20,#00ff1f,#00ff1d,#00ff1c,#00ff1b,#00ff19,#00ff18,#00ff17,#00ff15,#00ff14,#00ff12,#00ff11,#00ff10,#00ff0e,#00ff0d,#00ff0b,#00ff0a,#00ff08,#00ff06,#00ff05,#00ff03,#00ff02,#00ff00,#00ff00,#00ff00,#00ff00,#00ff00,#00ff00,#00ff00,#00ff00,#00ff00,#00ff00,#00ff00,#00ff00,#00ff00,#00ff00,#00ff00,#00ff00,#00ff00,#00ff00,#00ff00,#03ff00,#0aff00)"></i><i style="left:-7px;top:96px;width:282px;background:linear-gradient(90deg,#00ff28,#00ff27,#00ff25,#00ff24,#00ff23,#00ff22,#00ff20,#00ff1f,#00ff1e,#00ff1c,#00ff1b,#00ff1a,#00ff18,#00ff17,#00ff16,#00ff14,#00ff13,#00ff11,#00ff10,#00ff0e,#00ff0d,#00ff0b,#00ff0a,#00ff08,#00ff06,#00ff05,#00ff03,#00ff02,#00ff00,#00ff00,#00ff00,#00ff00,#00ff00,#00ff00,#00ff00,#00ff00,#00ff00,#00ff00,#00ff00,#00ff00,#00ff00,#00ff00,#00ff00,#00ff00,#00ff00,#00ff00,#03ff00,#0bff00)"></i><i style="left:-7px;top:99px;width:288px;background:linear-gradient(90deg,#00ff29,#00ff28,#00ff27,#00ff26,#00ff24,#00ff23,#00ff22,#00ff21,#00ff1f,#00ff1e,#00ff1d,#00ff1b,#00ff1a,#00ff18,#00ff17,#00ff16,#00ff14,#00ff13,#00ff11,#00ff10,#00ff0e,#00ff0d,#00ff0b,#00ff0a,#00ff08,#00ff06,#00ff05,#00ff03,#00ff01,#00ff00,#00ff00,#00ff00,#00ff00,#00ff00,#00ff00,#00ff00,#00ff00,#00ff00,#00ff00,#00ff00,#00ff00,#00ff00,#00ff00,#00ff00,#00ff00,#00ff00,#05ff00,#0cff00,#13ff00)"></i><i style="left:-7px;top:102px;width:294px;background:linear-gradient(90deg,#00ff2b,#00ff2a,#00ff28,#00ff27,#00ff26,#00ff25,#00ff23,#00ff22,#00ff21,#00ff1f,#00ff1e,#00ff1d,#00ff1b,#00ff1a,#00ff19,#00ff17,#00ff16,#00ff14,#00ff13,#00ff11,#00ff10,#00ff0e,#00ff0d,#00ff0b,#00ff09,#00ff08,#00ff06,#00ff04,#00ff03,#00ff01,#00ff00,#00ff00,#00ff00,#00ff00,#00ff00,#00ff00,#00ff00,#00ff00,#00ff00,#00ff00,#00ff00,#00ff00,#00ff00,#00ff00,#00ff00,#00ff00,#06ff00,#0dff00,#15ff00,#1dff00)"></i><i style="left:-8px;top:105px;width:300px;background:linear-gradient(90deg,#00ff2d,#00ff2b,#00ff2a,#00ff29,#00ff28,#00ff26,#00ff25,#00ff24,#00ff22,#00ff21,#00ff20,#00ff1e,#00ff1d,#00ff1c,#00ff1a,#00ff19,#00ff17,#00ff16,#00ff14,#00ff13,#00ff11,#00ff10,#00ff0e,#00ff0d,#00ff0b,#00ff09,#00ff08,#00ff06,#00ff04,#00ff03,#00ff01,#00ff00,#00ff00,#00ff00,#00ff00,#00ff00,#00ff00,#00ff00,#00ff00,#00ff00,#00ff00,#00ff00,#00ff00,#00ff00,#00ff00,#00ff00,#06ff00,#0eff00,#15ff00,#1dff00,#25ff00)"></i><i style="left:-8px;top:108px;width:300px;background:linear-gradient(90deg,#00ff2e,#00ff2d,#00ff2c,#00ff2a,#00ff29,#00ff28,#00ff27,#00ff25,#00ff24,#00ff23,#00ff21,#00ff20,#00ff1f,#00ff1d,#00ff1c,#00ff1a,#00ff19,#00ff17,#00ff16,#00ff14,#00ff13,#00ff11,#00ff10,#00ff0e,#00ff0d,#00ff0b,#00ff09,#00ff08,#00ff06,#00ff04,#00ff02,#00ff01,#00ff00,#00ff00,#00ff00,#00ff00,#00ff00,#00ff00,#00ff00,#00ff00,#00ff00,#00ff00,#00ff00,#00ff00,#00ff00,#00ff00,#08ff00,#0fff00,#17ff00,#1fff00,#27ff00)"></i><i style="left:-8px;top:111px;width:306px;background:linear-gradient(90deg,#00ff30,#00ff2e,#00ff2d,#00ff2c,#00ff2b,#00ff29,#00ff28,#00ff27,#00ff26,#00ff24,#00ff23,#00ff22,#00ff20,#00ff1f,#00ff1d,#00ff1c,#00ff1a,#00ff19,#00ff18,#00ff16,#00ff14,#00ff13,#00ff11,#00ff10,#00ff0e,#00ff0d,#00ff0b,#00ff09,#00ff07,#00ff06,#00ff04,#00ff02,#00ff00,#00ff00,#00ff00,#00ff00,#00ff00,#00ff00,#00ff00,#00ff00,#00ff00,#00ff00,#00ff00,#00ff00,#00ff00,#01ff00,#09ff00,#11ff00,#19ff00,#20ff00,#29ff00,#31ff00)"></i><i style="left:-8px;top:114px;width:312px;background:linear-gradient(90deg,#00ff31,#00ff30,#00ff2f,#00ff2e,#00ff2c,#00ff2b,#00ff2a,#00ff28,#00ff27,#00ff26,#00ff24,#00ff23,#00ff22,#00ff20,#00ff1f,#00ff1d,#00ff1c,#00ff1b,#00ff19,#00ff18,#00ff16,#00ff14,#00ff13,#00ff11,#00ff10,#00ff0e,#00ff0c,#00ff0b,#00ff09,#00ff07,#00ff06,#00ff04,#00ff02,#00ff00,#00ff00,#00ff00,#00ff00,#00ff00,#00ff00,#00ff00,#00ff00,#00ff00,#00ff00,#00ff00,#00ff00,#03ff00,#0bff00,#12ff00,#1aff00,#22ff00,#2aff00,#33ff00,#3bff00)"></i><i style="left:-8px;top:117px;width:312px;background:linear-gradient(90deg,#00ff33,#00ff32,#00ff30,#00ff2f,#00ff2e,#00ff2d,#00ff2b,#00ff2a,#00ff29,#00ff27,#00ff26,#00ff25,#00ff23,#00ff22,#00ff21,#00ff1f,#00ff1e,#00ff1c,#00ff1b,#00ff19,#00ff18,#00ff16,#00ff15,#00ff13,#00ff11,#00ff10,#00ff0e,#00ff0c,#00ff0b,#00ff09,#00ff07,#00ff05,#00ff04,#00ff02,#00ff00,#00ff00,#00ff00,#00ff00,#00ff00,#00ff00,#00ff00,#00ff00,#00ff00,#00ff00,#00ff00,#04ff00,#0cff00,#14ff00,#1cff00,#24ff00,#2cff00,#35ff00,#3dff00)"></i><i style="left:-8px;top:120px;width:318px;background:linear-gradient(90deg,#00ff34,#00ff33,#00ff32,#00ff31,#00ff30,#00ff2e,#00ff2d,#00ff2c,#00ff2a,#00ff29,#00ff28,#00ff26,#00ff25,#00ff24,#00ff22,#00ff21,#00ff1f,#00ff1e,#00ff1c,#00ff1b,#00ff19,#00ff18,#00ff16,#00ff15,#00ff13,#00ff11,#00ff10,#00ff0e,#00ff0c,#00ff0a,#00ff09,#00ff07,#00ff05,#00ff03,#00ff01,#00ff00,#00ff00,#00ff00,#00ff00,#00ff00,#00ff00,#00ff00,#00ff00,#00ff00,#00ff00,#06ff00,#0eff00,#16ff00,#1eff00,#26ff00,#2eff00,#37ff00,#3fff00,#48ff00)"></i><i style="left:-8px;top:123px;width:324px;background:linear-gradient(90deg,#00ff36,#00ff35,#00ff34,#00ff32,#00ff31,#00ff30,#00ff2f,#00ff2d,#00ff2c,#00ff2b,#00ff29,#00ff28,#00ff27,#00ff25,#00ff24,#00ff22,#00ff21,#00ff1f,#00ff1e,#00ff1c,#00ff1b,#00ff19,#00ff18,#00ff16,#00ff15,#00ff13,#00ff11,#00ff10,#00ff0e,#00ff0c,#00ff0a,#00ff09,#00ff07,#00ff05,#00ff03,#00ff01,#00ff00,#00ff00,#00ff00,#00ff00,#00ff00,#00ff00,#00ff00,#00ff00,#00ff00,#07ff00,#0fff00,#17ff00,#1fff00,#28ff00,#30ff00,#39ff00,#42ff00,#4aff00,#54ff00)"></i><i style="left:-8px;top:126px;width:324px;background:linear-gradient(90deg,#00ff38,#00ff37,#00ff35,#00ff34,#00ff33,#00ff32,#00ff30,#00ff2f,#00ff2e,#00ff2c,#00ff2b,#00ff2a,#00ff28,#00ff27,#00ff25,#00ff24,#00ff23,#00ff21,#00ff20,#00ff1e,#00ff1d,#00ff1b,#00ff19,#00ff18,#00ff16,#00ff15,#00ff13,#00ff11,#00ff0f,#00ff0e,#00ff0c,#00ff0a,#00ff08,#00ff06,#00ff05,#00ff03,#00ff01,#00ff00,#00ff00,#00ff00,#00ff00,#00ff00,#00ff00,#00ff00,#01ff00,#09ff00,#11ff00,#19ff00,#21ff00,#2aff00,#32ff00,#3bff00,#44ff00,#4dff00,#56ff00)"></i><i style="left:-8px;top:129px;width:330px;background:linear-gradient(90deg,#00ff39,#00ff38,#00ff37,#00ff36,#00ff35,#00ff33,#00ff32,#00ff31,#00ff2f,#00ff2e,#00ff2d,#00ff2b,#00ff2a,#00ff29,#00ff27,#00ff26,#00ff24,#00ff23,#00ff21,#00ff20,#00ff1e,#00ff1d,#00ff1b,#00ff1a,#00ff18,#00ff16,#00ff15,#00ff13,#00ff11,#00ff0f,#00ff0e,#00ff0c,#00ff0a,#00ff08,#00ff06,#00ff04,#00ff02,#00ff00,#00ff00,#00ff00,#00ff00,#00ff00,#00ff00,#00ff00,#02ff00,#0aff00,#12ff00,#1bff00,#23ff00,#2cff00,#34ff00,#3dff00,#46ff00,#4fff00,#58ff00,#62ff00)"></i><i style="left:-8px;top:132px;width:336px;background:linear-gradient(90deg,#00ff3b,#00ff3a,#00ff39,#00ff37,#00ff36,#00ff35,#00ff34,#00ff32,#00ff31,#00ff30,#00ff2e,#00ff2d,#00ff2c,#00ff2a,#00ff29,#00ff27,#00ff26,#00ff25,#00ff23,#00ff22,#00ff20,#00ff1e,#00ff1d,#00ff1b,#00ff1a,#00ff18,#00ff16,#00ff15,#00ff13,#00ff11,#00ff0f,#00ff0e,#00ff0c,#00ff0a,#00ff08,#00ff06,#00ff04,#00ff02,#00ff00,#00ff00,#00ff00,#00ff00,#00ff00,#00ff00,#04ff00,#0cff00,#14ff00,#1cff00,#25ff00,#2eff00,#36ff00,#3fff00,#48ff00,#52ff00,#5bff00,#65ff00,#6eff00)"></i><i style="left:-8px;top:135px;width:342px;background:linear-gradient(90deg,#00ff3d,#00ff3c,#00ff3a,#00ff39,#00ff38,#00ff37,#00ff35,#00ff34,#00ff33,#00ff32,#00ff30,#00ff2f,#00ff2d,#00ff2c,#00ff2b,#00ff29,#00ff28,#00ff26,#00ff25,#00ff23,#00ff22,#00ff20,#00ff1f,#00ff1d,#00ff1b,#00ff1a,#00ff18,#00ff16,#00ff15,#00ff13,#00ff11,#00ff0f,#00ff0d,#00ff0c,#00ff0a,#00ff08,#00ff06,#00ff04,#00ff02,#00ff00,#00ff00,#00ff00,#00ff00,#00ff00,#05ff00,#0dff00,#16ff00,#1eff00,#27ff00,#30ff00,#38ff00,#41ff00,#4bff00,#54ff00,#5eff00,#67ff00,#71ff00,#7bff00)"></i><i style="left:-7px;top:138px;width:342px;background:linear-gradient(90deg,#00ff3e,#00ff3d,#00ff3c,#00ff3b,#00ff3a,#00ff38,#00ff37,#00ff36,#00ff34,#00ff33,#00ff32,#00ff30,#00ff2f,#00ff2e,#00ff2c,#00ff2b,#00ff29,#00ff28,#00ff26,#00ff25,#00ff23,#00ff22,#00ff20,#00ff1f,#00ff1d,#00ff1b,#00ff1a,#00ff18,#00ff16,#00ff14,#00ff13,#00ff11,#00ff0f,#00ff0d,#00ff0b,#00ff09,#00ff07,#00ff05,#00ff03,#00ff01,#00ff00,#00ff00,#00ff00,#00ff00,#08ff00,#10ff00,#19ff00,#21ff00,#2aff00,#33ff00,#3cff00,#45ff00,#4fff00,#58ff00,#62ff00,#6cff00,#76ff00,#80ff00)"></i><i style="left:-7px;top:141px;width:348px;background:linear-gradient(90deg,#00ff40,#00ff3f,#00ff3e,#00ff3d,#00ff3b,#00ff3a,#00ff39,#00ff38,#00ff36,#00ff35,#00ff34,#00ff32,#00ff31,#00ff2f,#00ff2e,#00ff2d,#00ff2b,#00ff2a,#00ff28,#00ff27,#00ff25,#00ff24,#00ff22,#00ff20,#00ff1f,#00ff1d,#00ff1b,#00ff1a,#00ff18,#00ff16,#00ff14,#00ff13,#00ff11,#00ff0f,#00ff0d,#00ff0b,#00ff09,#00ff07,#00ff05,#00ff03,#00ff01,#00ff00,#00ff00,#02ff00,#0aff00,#12ff00,#1bff00,#23ff00,#2cff00,#35ff00,#3eff00,#48ff00,#51ff00,#5bff00,#65ff00,#6fff00,#79ff00,#84ff00,#8eff00)"></i><i style="left:-7px;top:144px;width:348px;background:linear-gradient(90deg,#00ff42,#00ff41,#00ff40,#00ff3e,#00ff3d,#00ff3c,#00ff3b,#00ff39,#00ff38,#00ff37,#00ff35,#00ff34,#00ff33,#00ff31,#00ff30,#00ff2e,#00ff2d,#00ff2b,#00ff2a,#00ff28,#00ff27,#00ff25,#00ff24,#00ff22,#00ff21,#00ff1f,#00ff1d,#00ff1b,#00ff1a,#00ff18,#00ff16,#00ff14,#00ff13,#00ff11,#00ff0f,#00ff0d,#00ff0b,#00ff09,#00ff07,#00ff05,#00ff03,#00ff00,#00ff00,#03ff00,#0bff00,#14ff00,#1dff00,#25ff00,#2eff00,#37ff00,#41ff00,#4aff00,#54ff00,#5eff00,#68ff00,#72ff00,#7cff00,#87ff00,#92ff00)"></i><i style="left:-7px;top:147px;width:354px;background:linear-gradient(90deg,#00ff44,#00ff43,#00ff42,#00ff40,#00ff3f,#00ff3e,#00ff3d,#00ff3b,#00ff3a,#00ff39,#00ff37,#00ff36,#00ff35,#00ff33,#00ff32,#00ff30,#00ff2f,#00ff2d,#00ff2c,#00ff2a,#00ff29,#00ff27,#00ff26,#00ff24,#00ff22,#00ff21,#00ff1f,#00ff1d,#00ff1c,#00ff1a,#00ff18,#00ff16,#00ff14,#00ff13,#00ff11,#00ff0f,#00ff0d,#00ff0b,#00ff09,#00ff07,#00ff04,#00ff02,#00ff00,#05ff00,#0dff00,#16ff00,#1eff00,#27ff00,#30ff00,#3aff00,#43ff00,#4dff00,#56ff00,#60ff00,#6aff00,#75ff00,#7fff00,#8aff00,#95ff00,#a0ff00)"></i><i style="left:-7px;top:150px;width:360px;background:linear-gradient(90deg,#00ff46,#00ff45,#00ff43,#00ff42,#00ff41,#00ff40,#00ff3e,#00ff3d,#00ff3c,#00ff3b,#00ff39,#00ff38,#00ff36,#00ff35,#00ff34,#00ff32,#00ff31,#00ff2f,#00ff2e,#00ff2c,#00ff2b,#00ff29,#00ff28,#00ff26,#00ff24,#00ff23,#00ff21,#00ff1f,#00ff1e,#00ff1c,#00ff1a,#00ff18,#00ff16,#00ff14,#00ff12,#00ff11,#00ff0f,#00ff0d,#00ff0b,#00ff08,#00ff06,#00ff04,#00ff02,#06ff00,#0fff00,#17ff00,#20ff00,#29ff00,#33ff00,#3cff00,#45ff00,#4fff00,#59ff00,#63ff00,#6dff00,#78ff00,#83ff00,#8eff00,#99ff00,#a4ff00,#b0ff00)"></i><i style="left:-7px;top:153px;width:360px;background:linear-gradient(90deg,#00ff48,#00ff47,#00ff45,#00ff44,#00ff43,#00ff42,#00ff40,#00ff3f,#00ff3e,#00ff3c,#00ff3b,#00ff3a,#00ff38,#00ff37,#00ff36,#00ff34,#00ff33,#00ff31,#00ff30,#00ff2e,#00ff2d,#00ff2b,#00ff2a,#00ff28,#00ff26,#00ff25,#00ff23,#00ff21,#00ff1f,#00ff1e,#00ff1c,#00ff1a,#00ff18,#00ff16,#00ff14,#00ff12,#00ff10,#00ff0e,#00ff0c,#00ff0a,#00ff08,#00ff06,#00ff04,#08ff02,#11ff00,#19ff00,#22ff00,#2bff00,#35ff00,#3eff00,#48ff00,#52ff00,#5cff00,#66ff00,#70ff00,#7bff00,#86ff00,#91ff00,#9cff00,#a8ff00,#b4ff00)"></i><i style="left:-7px;top:156px;width:366px;background:linear-gradient(90deg,#00ff4a,#00ff48,#00ff47,#00ff46,#00ff45,#00ff44,#00ff42,#00ff41,#00ff40,#00ff3e,#00ff3d,#00ff3c,#00ff3a,#00ff39,#00ff38,#00ff36,#00ff35,#00ff33,#00ff32,#00ff30,#00ff2f,#00ff2d,#00ff2c,#00ff2a,#00ff28,#00ff27,#00ff25,#00ff23,#00ff21,#00ff20,#00ff1e,#00ff1c,#00ff1a,#00ff18,#00ff16,#00ff14,#00ff12,#00ff10,#00ff0e,#00ff0c,#00ff0a,#00ff08,#01ff06,#0aff04,#12ff01,#1bff00,#24ff00,#2eff00,#37ff00,#41ff00,#4aff00,#54ff00,#5fff00,#69ff00,#74ff00,#7eff00,#89ff00,#95ff00,#a0ff00,#acff00,#b8ff00,#c4ff00)"></i><i style="left:-6px;top:159px;width:372px;background:linear-gradient(90deg,#00ff4b,#00ff4a,#00ff49,#00ff48,#00ff47,#00ff45,#00ff44,#00ff43,#00ff42,#00ff40,#00ff3f,#00ff3e,#00ff3c,#00ff3b,#00ff39,#00ff38,#00ff36,#00ff35,#00ff33,#00ff32,#00ff30,#00ff2f,#00ff2d,#00ff2c,#00ff2a,#00ff28,#00ff27,#00ff25,#00ff23,#00ff21,#00ff20,#00ff1e,#00ff1c,#00ff1a,#00ff18,#00ff16,#00ff14,#00ff12,#00ff10,#00ff0e,#00ff0c,#00ff0a,#04ff07,#0dff05,#16ff03,#1fff00,#28ff00,#31ff00,#3bff00,#45ff00,#4fff00,#59ff00,#63ff00,#6eff00,#79ff00,#84ff00,#8fff00,#9aff00,#a6ff00,#b2ff00,#beff00,#cbff00,#d8ff00)"></i><i style="left:-6px;top:162px;width:372px;background:linear-gradient(90deg,#00ff4d,#00ff4c,#00ff4b,#00ff4a,#00ff49,#00ff47,#00ff46,#00ff45,#00ff44,#00ff42,#00ff41,#00ff40,#00ff3e,#00ff3d,#00ff3b,#00ff3a,#00ff39,#00ff37,#00ff36,#00ff34,#00ff32,#00ff31,#00ff2f,#00ff2e,#00ff2c,#00ff2a,#00ff29,#00ff27,#00ff25,#00ff23,#00ff22,#00ff20,#00ff1e,#00ff1c,#00ff1a,#00ff18,#00ff16,#00ff14,#00ff12,#00ff10,#00ff0e,#00ff0c,#06ff09,#0eff07,#17ff05,#21ff02,#2aff00,#34ff00,#3dff00,#47ff00,#51ff00,#5cff00,#66ff00,#71ff00,#7cff00,#87ff00,#93ff00,#9eff00,#aaff00,#b6ff00,#c3ff00,#d0ff00,#ddff00)"></i><i style="left:-6px;top:165px;width:378px;background:linear-gradient(90deg,#00ff4f,#00ff4e,#00ff4d,#00ff4c,#00ff4b,#00ff49,#00ff48,#00ff47,#00ff46,#00ff44,#00ff43,#00ff42,#00ff40,#00ff3f,#00ff3d,#00ff3c,#00ff3b,#00ff39,#00ff38,#00ff36,#00ff35,#00ff33,#00ff31,#00ff30,#00ff2e,#00ff2d,#00ff2b,#00ff29,#00ff27,#00ff26,#00ff24,#00ff22,#00ff20,#00ff1e,#00ff1c,#00ff1a,#00ff18,#00ff16,#00ff14,#00ff12,#00ff10,#00ff0e,#07ff0b,#10ff09,#19ff07,#23ff05,#2cff02,#36ff00,#40ff00,#4aff00,#54ff00,#5fff00,#69ff00,#74ff00,#7fff00,#8bff00,#96ff00,#a2ff00,#aeff00,#bbff00,#c7ff00,#d4ff00,#e2ff00,#efff00)"></i><i style="left:-6px;top:168px;width:384px;background:linear-gradient(90deg,#00ff51,#00ff50,#00ff4f,#00ff4e,#00ff4d,#00ff4b,#00ff4a,#00ff49,#00ff48,#00ff46,#00ff45,#00ff44,#00ff42,#00ff41,#00ff40,#00ff3e,#00ff3d,#00ff3b,#00ff3a,#00ff38,#00ff37,#00ff35,#00ff34,#00ff32,#00ff30,#00ff2f,#00ff2d,#00ff2b,#00ff29,#00ff28,#00ff26,#00ff24,#00ff22,#00ff20,#00ff1e,#00ff1c,#00ff1a,#00ff18,#00ff16,#00ff14,#00ff12,#00ff10,#09ff0e,#12ff0b,#1bff09,#25ff07,#2eff04,#38ff02,#42ff00,#4cff00,#57ff00,#61ff00,#6cff00,#77ff00,#83ff00,#8eff00,#9aff00,#a6ff00,#b3ff00,#bfff00,#ccff00,#d9ff00,#e7ff00,#f5ff00,#fffb00)"></i><i style="left:-6px;top:171px;width:384px;background:linear-gradient(90deg,#00ff54,#00ff52,#00ff51,#00ff50,#00ff4f,#00ff4e,#00ff4c,#00ff4b,#00ff4a,#00ff49,#00ff47,#00ff46,#00ff45,#00ff43,#00ff42,#00ff40,#00ff3f,#00ff3d,#00ff3c,#00ff3a,#00ff39,#00ff37,#00ff36,#00ff34,#00ff33,#00ff31,#00ff2f,#00ff2d,#00ff2c,#00ff2a,#00ff28,#00ff26,#00ff24,#00ff22,#00ff21,#00ff1f,#00ff1d,#00ff1b,#00ff18,#00ff16,#00ff14,#02ff12,#0bff10,#14ff0d,#1dff0b,#27ff09,#31ff06,#3bff04,#45ff01,#4fff00,#5aff00,#65ff00,#70ff00,#7bff00,#86ff00,#92ff00,#9eff00,#aaff00,#b7ff00,#c4ff00,#d1ff00,#deff00,#ecff00,#faff00,#fff600)"></i><i style="left:-6px;top:174px;width:390px;background:linear-gradient(90deg,#00ff56,#00ff55,#00ff53,#00ff52,#00ff51,#00ff50,#00ff4f,#00ff4d,#00ff4c,#00ff4b,#00ff49,#00ff48,#00ff47,#00ff45,#00ff44,#00ff43,#00ff41,#00ff40,#00ff3e,#00ff3d,#00ff3b,#00ff3a,#00ff38,#00ff36,#00ff35,#00ff33,#00ff31,#00ff30,#00ff2e,#00ff2c,#00ff2a,#00ff29,#00ff27,#00ff25,#00ff23,#00ff21,#00ff1f,#00ff1d,#00ff1b,#00ff19,#00ff16,#03ff14,#0dff12,#16ff10,#1fff0d,#29ff0b,#33ff09,#3dff06,#47ff04,#52ff01,#5dff00,#68ff00,#73ff00,#7eff00,#8aff00,#96ff00,#a2ff00,#afff00,#bbff00,#c8ff00,#d6ff00,#e4ff00,#f2ff00,#fffe00,#fff000,#ffe400)"></i><i style="left:-6px;top:177px;width:396px;background:linear-gradient(90deg,#00ff58,#00ff57,#00ff56,#00ff54,#00ff53,#00ff52,#00ff51,#00ff4f,#00ff4e,#00ff4d,#00ff4c,#00ff4a,#00ff49,#00ff48,#00ff46,#00ff45,#00ff43,#00ff42,#00ff40,#00ff3f,#00ff3d,#00ff3c,#00ff3a,#00ff39,#00ff37,#00ff35,#00ff34,#00ff32,#00ff30,#00ff2e,#00ff2d,#00ff2b,#00ff29,#00ff27,#00ff25,#00ff23,#00ff21,#00ff1f,#00ff1d,#00ff1b,#00ff19,#05ff16,#0eff14,#18ff12,#21ff10,#2bff0d,#35ff0b,#40ff08,#4aff06,#55ff03,#60ff00,#6bff00,#76ff00,#82ff00,#8eff00,#9aff00,#a6ff00,#b3ff00,#c0ff00,#cdff00,#dbff00,#e9ff00,#f7ff00,#fff800,#ffeb00,#ffdf00,#ffd300)"></i><i style="left:-5px;top:180px;width:396px;background:linear-gradient(90deg,#00ff5a,#00ff59,#00ff58,#00ff56,#00ff55,#00ff54,#00ff53,#00ff52,#00ff50,#00ff4f,#00ff4e,#00ff4c,#00ff4b,#00ff4a,#00ff48,#00ff47,#00ff45,#00ff44,#00ff42,#00ff41,#00ff3f,#00ff3e,#00ff3c,#00ff3b,#00ff39,#00ff37,#00ff36,#00ff34,#00ff32,#00ff30,#00ff2f,#00ff2d,#00ff2b,#00ff29,#00ff27,#00ff25,#00ff23,#00ff21,#00ff1f,#00ff1d,#00ff1b,#08ff18,#12ff16,#1bff14,#25ff11,#2fff0f,#3aff0d,#44ff0a,#4fff08,#5aff05,#65ff02,#70ff00,#7cff00,#87ff00,#94ff00,#a0ff00,#adff00,#baff00,#c7ff00,#d5ff00,#e3ff00,#f1ff00,#ffff00,#fff000,#ffe400,#ffd800,#ffcd00)"></i><i style="left:-5px;top:183px;width:402px;background:linear-gradient(90deg,#00ff5c,#00ff5b,#00ff5a,#00ff59,#00ff57,#00ff56,#00ff55,#00ff54,#00ff53,#00ff51,#00ff50,#00ff4f,#00ff4d,#00ff4c,#00ff4b,#00ff49,#00ff48,#00ff46,#00ff45,#00ff43,#00ff42,#00ff40,#00ff3f,#00ff3d,#00ff3b,#00ff3a,#00ff38,#00ff36,#00ff35,#00ff33,#00ff31,#00ff2f,#00ff2d,#00ff2b,#00ff29,#00ff27,#00ff25,#00ff23,#00ff21,#00ff1f,#01ff1d,#0aff1b,#14ff19,#1eff16,#28ff14,#32ff11,#3cff0f,#47ff0c,#51ff0a,#5dff07,#68ff05,#73ff02,#7fff00,#8bff00,#98ff00,#a4ff00,#b1ff00,#beff00,#ccff00,#daff00,#e8ff00,#f7ff00,#fff900,#ffeb00,#ffde00,#ffd300,#ffc800,#ffbe00)"></i><i style="left:-5px;top:186px;width:402px;background:linear-gradient(90deg,#00ff5e,#00ff5d,#00ff5c,#00ff5b,#00ff5a,#00ff59,#00ff57,#00ff56,#00ff55,#00ff54,#00ff52,#00ff51,#00ff50,#00ff4e,#00ff4d,#00ff4b,#00ff4a,#00ff49,#00ff47,#00ff46,#00ff44,#00ff43,#00ff41,#00ff3f,#00ff3e,#00ff3c,#00ff3a,#00ff39,#00ff37,#00ff35,#00ff33,#00ff32,#00ff30,#00ff2e,#00ff2c,#00ff2a,#00ff28,#00ff26,#00ff24,#00ff22,#03ff1f,#0cff1d,#16ff1b,#20ff19,#2aff16,#34ff14,#3fff11,#49ff0f,#54ff0c,#60ff0a,#6bff07,#77ff04,#83ff01,#8fff00,#9cff00,#a9ff00,#b6ff00,#c3ff00,#d1ff00,#dfff00,#eeff00,#fcff00,#fff300,#ffe600,#ffd900,#ffce00,#ffc300,#ffba00)"></i><i style="left:-5px;top:189px;width:408px;background:linear-gradient(90deg,#00ff61,#00ff60,#00ff5e,#00ff5d,#00ff5c,#00ff5b,#00ff5a,#00ff58,#00ff57,#00ff56,#00ff55,#00ff53,#00ff52,#00ff51,#00ff4f,#00ff4e,#00ff4c,#00ff4b,#00ff4a,#00ff48,#00ff47,#00ff45,#00ff43,#00ff42,#00ff40,#00ff3f,#00ff3d,#00ff3b,#00ff3a,#00ff38,#00ff36,#00ff34,#00ff32,#00ff30,#00ff2e,#00ff2c,#00ff2a,#00ff28,#00ff26,#00ff24,#04ff22,#0eff20,#18ff1d,#22ff1b,#2cff19,#37ff16,#41ff14,#4cff11,#57ff0f,#63ff0c,#6eff09,#7aff07,#87ff04,#93ff01,#a0ff00,#adff00,#baff00,#c8ff00,#d6ff00,#e5ff00,#f3ff00,#fffc00,#ffed00,#ffe000,#ffd400,#ffc900,#ffbf00,#ffb600,#ffad00)"></i><i style="left:-5px;top:192px;width:414px;background:linear-gradient(90deg,#00ff63,#00ff62,#00ff61,#00ff60,#00ff5f,#00ff5d,#00ff5c,#00ff5b,#00ff5a,#00ff58,#00ff57,#00ff56,#00ff54,#00ff53,#00ff52,#00ff50,#00ff4f,#00ff4e,#00ff4c,#00ff4b,#00ff49,#00ff48,#00ff46,#00ff44,#00ff43,#00ff41,#00ff3f,#00ff3e,#00ff3c,#00ff3a,#00ff38,#00ff37,#00ff35,#00ff33,#00ff31,#00ff2f,#00ff2d,#00ff2b,#00ff29,#00ff27,#06ff24,#10ff22,#1aff20,#24ff1e,#2fff1b,#39ff19,#44ff16,#4fff14,#5aff11,#66ff0f,#72ff0c,#7eff09,#8aff06,#97ff03,#a4ff01,#b2ff00,#bfff00,#cdff00,#dbff00,#eaff00,#f9ff00,#fff600,#ffe800,#ffdb00,#ffcf00,#ffc500,#ffbb00,#ffb100,#ffa900,#ffa100)"></i><i style="left:-4px;top:195px;width:414px;background:linear-gradient(90deg,#00ff65,#00ff64,#00ff63,#00ff62,#00ff61,#00ff60,#00ff5e,#00ff5d,#00ff5c,#00ff5b,#00ff59,#00ff58,#00ff57,#00ff55,#00ff54,#00ff53,#00ff51,#00ff50,#00ff4e,#00ff4d,#00ff4b,#00ff4a,#00ff48,#00ff47,#00ff45,#00ff43,#00ff42,#00ff40,#00ff3e,#00ff3d,#00ff3b,#00ff39,#00ff37,#00ff35,#00ff33,#00ff31,#00ff2f,#00ff2d,#00ff2b,#00ff29,#0aff27,#14ff24,#1eff22,#28ff20,#33ff1e,#3eff1b,#49ff19,#54ff16,#60ff13,#6bff11,#78ff0e,#84ff0b,#91ff08,#9eff06,#abff03,#b9ff00,#c6ff00,#d5ff00,#e3ff00,#f3ff00,#fffc00,#ffed00,#ffe000,#ffd400,#ffc900,#ffbe00,#ffb500,#ffac00,#ffa300,#ff9c00)"></i><i style="left:-4px;top:198px;width:420px;background:linear-gradient(90deg,#00ff68,#00ff67,#00ff66,#00ff64,#00ff63,#00ff62,#00ff61,#00ff60,#00ff5e,#00ff5d,#00ff5c,#00ff5b,#00ff59,#00ff58,#00ff57,#00ff55,#00ff54,#00ff52,#00ff51,#00ff4f,#00ff4e,#00ff4c,#00ff4b,#00ff49,#00ff48,#00ff46,#00ff44,#00ff43,#00ff41,#00ff3f,#00ff3d,#00ff3c,#00ff3a,#00ff38,#00ff36,#00ff34,#00ff32,#00ff30,#00ff2e,#02ff2c,#0cff29,#16ff27,#20ff25,#2bff23,#35ff20,#40ff1e,#4cff1b,#57ff19,#63ff16,#6fff13,#7bff11,#88ff0e,#95ff0b,#a2ff08,#b0ff05,#bdff02,#ccff00,#daff00,#e9ff00,#f9ff00,#fff600,#ffe800,#ffdb00,#ffcf00,#ffc400,#ffba00,#ffb000,#ffa800,#ffa000,#ff9800,#ff9100)"></i><i style="left:-3px;top:201px;width:420px;background:linear-gradient(90deg,#00ff6a,#00ff69,#00ff68,#00ff67,#00ff66,#00ff64,#00ff63,#00ff62,#00ff61,#00ff60,#00ff5e,#00ff5d,#00ff5c,#00ff5a,#00ff59,#00ff58,#00ff56,#00ff55,#00ff53,#00ff52,#00ff50,#00ff4f,#00ff4d,#00ff4c,#00ff4a,#00ff48,#00ff47,#00ff45,#00ff43,#00ff42,#00ff40,#00ff3e,#00ff3c,#00ff3a,#00ff38,#00ff36,#00ff34,#00ff32,#00ff30,#05ff2e,#0fff2c,#1aff2a,#24ff27,#2fff25,#3aff23,#45ff20,#51ff1e,#5cff1b,#68ff18,#75ff16,#81ff13,#8eff10,#9bff0d,#a9ff0a,#b7ff07,#c5ff04,#d3ff01,#e2ff00,#f2ff00,#fffd00,#ffee00,#ffe000,#ffd400,#ffc800,#ffbe00,#ffb400,#ffab00,#ffa200,#ff9b00,#ff9300,#ff8c00)"></i><i style="left:-3px;top:204px;width:426px;background:linear-gradient(90deg,#00ff6d,#00ff6b,#00ff6a,#00ff69,#00ff68,#00ff67,#00ff66,#00ff65,#00ff63,#00ff62,#00ff61,#00ff60,#00ff5e,#00ff5d,#00ff5c,#00ff5a,#00ff59,#00ff57,#00ff56,#00ff55,#00ff53,#00ff52,#00ff50,#00ff4e,#00ff4d,#00ff4b,#00ff4a,#00ff48,#00ff46,#00ff44,#00ff43,#00ff41,#00ff3f,#00ff3d,#00ff3b,#00ff39,#00ff37,#00ff35,#00ff33,#07ff31,#11ff2f,#1cff2c,#26ff2a,#31ff28,#3dff25,#48ff23,#54ff20,#60ff1e,#6cff1b,#78ff19,#85ff16,#92ff13,#a0ff10,#adff0d,#bcff0a,#caff07,#d9ff04,#e8ff01,#f8ff00,#fff600,#ffe800,#ffdb00,#ffce00,#ffc300,#ffb900,#ffb000,#ffa700,#ff9e00,#ff9700,#ff9000,#ff8900,#ff8300)"></i><i style="left:-2px;top:207px;width:432px;background:linear-gradient(90deg,#00ff6f,#00ff6e,#00ff6d,#00ff6c,#00ff6b,#00ff69,#00ff68,#00ff67,#00ff66,#00ff65,#00ff63,#00ff62,#00ff61,#00ff5f,#00ff5e,#00ff5d,#00ff5b,#00ff5a,#00ff59,#00ff57,#00ff56,#00ff54,#00ff53,#00ff51,#00ff4f,#00ff4e,#00ff4c,#00ff4a,#00ff49,#00ff47,#00ff45,#00ff43,#00ff41,#00ff40,#00ff3e,#00ff3c,#00ff3a,#00ff38,#01ff35,#0bff33,#15ff31,#20ff2f,#2bff2d,#36ff2a,#41ff28,#4dff25,#59ff23,#65ff20,#71ff1e,#7eff1b,#8bff18,#99ff15,#a7ff12,#b5ff10,#c3ff0c,#d2ff09,#e1ff06,#f1ff03,#fffd00,#ffee00,#ffe000,#ffd300,#ffc800,#ffbd00,#ffb300,#ffaa00,#ffa100,#ff9900,#ff9200,#ff8b00,#ff8500,#ff7e00,#ff7900)"></i><i style="left:-2px;top:210px;width:432px;background:linear-gradient(90deg,#00ff72,#00ff71,#00ff6f,#00ff6e,#00ff6d,#00ff6c,#00ff6b,#00ff6a,#00ff69,#00ff67,#00ff66,#00ff65,#00ff64,#00ff62,#00ff61,#00ff60,#00ff5e,#00ff5d,#00ff5b,#00ff5a,#00ff58,#00ff57,#00ff55,#00ff54,#00ff52,#00ff51,#00ff4f,#00ff4d,#00ff4c,#00ff4a,#00ff48,#00ff46,#00ff44,#00ff43,#00ff41,#00ff3f,#00ff3d,#00ff3b,#02ff38,#0dff36,#17ff34,#22ff32,#2dff30,#39ff2d,#44ff2b,#50ff28,#5cff26,#68ff23,#75ff21,#82ff1e,#90ff1b,#9dff18,#abff15,#baff12,#c8ff0f,#d8ff0c,#e7ff09,#f7ff06,#fff702,#ffe800,#ffda00,#ffce00,#ffc300,#ffb800,#ffaf00,#ffa600,#ff9d00,#ff9600,#ff8e00,#ff8800,#ff8100,#ff7b00,#ff7600)"></i><i style="left:-1px;top:213px;width:438px;background:linear-gradient(90deg,#00ff74,#00ff73,#00ff72,#00ff71,#00ff70,#00ff6f,#00ff6d,#00ff6c,#00ff6b,#00ff6a,#00ff69,#00ff67,#00ff66,#00ff65,#00ff63,#00ff62,#00ff61,#00ff5f,#00ff5e,#00ff5d,#00ff5b,#00ff5a,#00ff58,#00ff57,#00ff55,#00ff53,#00ff52,#00ff50,#00ff4e,#00ff4d,#00ff4b,#00ff49,#00ff47,#00ff45,#00ff43,#00ff41,#00ff3f,#00ff3d,#06ff3b,#11ff39,#1bff37,#26ff35,#32ff32,#3dff30,#49ff2d,#55ff2b,#62ff29,#6eff26,#7bff23,#89ff21,#96ff1e,#a4ff1b,#b3ff18,#c1ff15,#d0ff12,#e0ff0f,#f0ff0b,#fffe08,#ffee04,#ffe001,#ffd300,#ffc700,#ffbc00,#ffb200,#ffa900,#ffa000,#ff9800,#ff9100,#ff8a00,#ff8300,#ff7d00,#ff7700,#ff7200,#ff6d00)"></i><i style="left:-1px;top:216px;width:438px;background:linear-gradient(90deg,#00ff77,#00ff76,#00ff75,#00ff74,#00ff73,#00ff71,#00ff70,#00ff6f,#00ff6e,#00ff6d,#00ff6b,#00ff6a,#00ff69,#00ff68,#00ff66,#00ff65,#00ff64,#00ff62,#00ff61,#00ff5f,#00ff5e,#00ff5d,#00ff5b,#00ff59,#00ff58,#00ff56,#00ff55,#00ff53,#00ff51,#00ff50,#00ff4e,#00ff4c,#00ff4a,#00ff48,#00ff46,#00ff44,#00ff42,#00ff40,#08ff3e,#13ff3c,#1eff3a,#29ff38,#34ff35,#40ff33,#4cff31,#59ff2e,#65ff2c,#72ff29,#7fff26,#8dff24,#9bff21,#a9ff1e,#b8ff1b,#c7ff18,#d6ff15,#e6ff12,#f6ff0f,#fff70b,#ffe807,#ffda04,#ffcd00,#ffc200,#ffb700,#ffae00,#ffa400,#ff9c00,#ff9400,#ff8d00,#ff8600,#ff8000,#ff7a00,#ff7400,#ff6f00,#ff6a00)"></i><i style="left:0px;top:219px;width:444px;background:linear-gradient(90deg,#00ff79,#00ff78,#00ff77,#00ff76,#00ff75,#00ff74,#00ff73,#00ff72,#00ff71,#00ff6f,#00ff6e,#00ff6d,#00ff6c,#00ff6a,#00ff69,#00ff68,#00ff66,#00ff65,#00ff64,#00ff62,#00ff61,#00ff5f,#00ff5e,#00ff5c,#00ff5b,#00ff59,#00ff58,#00ff56,#00ff54,#00ff52,#00ff51,#00ff4f,#00ff4d,#00ff4b,#00ff49,#00ff47,#00ff45,#01ff43,#0cff41,#17ff3f,#22ff3d,#2eff3b,#39ff38,#45ff36,#51ff33,#5eff31,#6bff2e,#78ff2c,#86ff29,#94ff27,#a2ff24,#b0ff21,#bfff1e,#cfff1b,#dfff18,#efff15,#fffe11,#ffee0d,#ffe009,#ffd206,#ffc602,#ffbb00,#ffb100,#ffa800,#ff9f00,#ff9700,#ff8f00,#ff8800,#ff8200,#ff7b00,#ff7600,#ff7000,#ff6b00,#ff6600,#ff6200)"></i><i style="left:0px;top:222px;width:444px;background:linear-gradient(90deg,#00ff7c,#00ff7b,#00ff7a,#00ff79,#00ff78,#00ff77,#00ff76,#00ff75,#00ff74,#00ff72,#00ff71,#00ff70,#00ff6f,#00ff6d,#00ff6c,#00ff6b,#00ff69,#00ff68,#00ff67,#00ff65,#00ff64,#00ff62,#00ff61,#00ff5f,#00ff5e,#00ff5c,#00ff5b,#00ff59,#00ff57,#00ff56,#00ff54,#00ff52,#00ff50,#00ff4e,#00ff4c,#00ff4b,#00ff49,#03ff46,#0eff44,#19ff42,#25ff40,#30ff3e,#3cff3c,#48ff39,#55ff37,#62ff34,#6fff32,#7cff2f,#8aff2d,#98ff2a,#a7ff27,#b6ff24,#c5ff21,#d5ff1e,#e5ff1b,#f6ff18,#fff714,#ffe810,#ffda0c,#ffcd08,#ffc105,#ffb602,#ffac00,#ffa300,#ff9b00,#ff9300,#ff8c00,#ff8500,#ff7e00,#ff7800,#ff7200,#ff6d00,#ff6800,#ff6300,#ff5f00)"></i><i style="left:1px;top:225px;width:450px;background:linear-gradient(90deg,#00ff7f,#00ff7e,#00ff7d,#00ff7c,#00ff7b,#00ff7a,#00ff79,#00ff77,#00ff76,#00ff75,#00ff74,#00ff73,#00ff72,#00ff70,#00ff6f,#00ff6e,#00ff6c,#00ff6b,#00ff6a,#00ff68,#00ff67,#00ff65,#00ff64,#00ff62,#00ff61,#00ff5f,#00ff5e,#00ff5c,#00ff5a,#00ff59,#00ff57,#00ff55,#00ff53,#00ff51,#00ff50,#00ff4e,#00ff4c,#07ff4a,#12ff47,#1eff45,#29ff43,#35ff41,#41ff3f,#4eff3c,#5aff3a,#67ff37,#75ff35,#83ff32,#91ff30,#9fff2d,#aeff2a,#beff27,#cdff24,#ddff21,#eeff1e,#ffff1b,#ffee16,#ffdf12,#ffd20e,#ffc60a,#ffba07,#ffb004,#ffa601,#ff9e00,#ff9500,#ff8e00,#ff8700,#ff8000,#ff7a00,#ff7400,#ff6f00,#ff6900,#ff6400,#ff6000,#ff5b00,#ff5700)"></i><i style="left:1px;top:228px;width:456px;background:linear-gradient(90deg,#00ff82,#00ff81,#00ff80,#00ff7f,#00ff7e,#00ff7d,#00ff7c,#00ff7b,#00ff79,#00ff78,#00ff77,#00ff76,#00ff75,#00ff73,#00ff72,#00ff71,#00ff70,#00ff6e,#00ff6d,#00ff6b,#00ff6a,#00ff69,#00ff67,#00ff66,#00ff64,#00ff63,#00ff61,#00ff5f,#00ff5e,#00ff5c,#00ff5a,#00ff58,#00ff57,#00ff55,#00ff53,#00ff51,#00ff4f,#09ff4d,#15ff4b,#20ff49,#2cff47,#38ff44,#44ff42,#51ff40,#5eff3d,#6bff3b,#79ff38,#87ff36,#95ff33,#a4ff30,#b3ff2e,#c3ff2b,#d3ff28,#e4ff25,#f5ff22,#fff81e,#ffe819,#ffd914,#ffcc10,#ffc00c,#ffb509,#ffab06,#ffa203,#ff9900,#ff9100,#ff8a00,#ff8300,#ff7d00,#ff7700,#ff7100,#ff6b00,#ff6600,#ff6200,#ff5d00,#ff5900,#ff5500,#ff5100)"></i><i style="left:2px;top:231px;width:456px;background:linear-gradient(90deg,#00ff85,#00ff84,#00ff83,#00ff82,#00ff81,#00ff80,#00ff7f,#00ff7d,#00ff7c,#00ff7b,#00ff7a,#00ff79,#00ff78,#00ff76,#00ff75,#00ff74,#00ff73,#00ff71,#00ff70,#00ff6f,#00ff6d,#00ff6c,#00ff6a,#00ff69,#00ff67,#00ff66,#00ff64,#00ff63,#00ff61,#00ff5f,#00ff5d,#00ff5c,#00ff5a,#00ff58,#00ff56,#00ff54,#02ff52,#0dff50,#19ff4e,#25ff4c,#31ff4a,#3dff48,#4aff45,#57ff43,#64ff41,#72ff3e,#80ff3c,#8eff39,#9dff36,#acff34,#bcff31,#ccff2e,#dcff2b,#edff28,#ffff25,#ffee1f,#ffdf1a,#ffd116,#ffc512,#ffb90e,#ffaf0b,#ffa508,#ff9c05,#ff9402,#ff8c00,#ff8500,#ff7e00,#ff7800,#ff7200,#ff6d00,#ff6800,#ff6300,#ff5e00,#ff5a00,#ff5600,#ff5200,#ff4e00)"></i><i style="left:2px;top:234px;width:462px;background:linear-gradient(90deg,#00ff88,#00ff87,#00ff86,#00ff85,#00ff84,#00ff83,#00ff82,#00ff81,#00ff80,#00ff7e,#00ff7d,#00ff7c,#00ff7b,#00ff7a,#00ff78,#00ff77,#00ff76,#00ff75,#00ff73,#00ff72,#00ff71,#00ff6f,#00ff6e,#00ff6c,#00ff6b,#00ff69,#00ff68,#00ff66,#00ff64,#00ff63,#00ff61,#00ff5f,#00ff5d,#00ff5c,#00ff5a,#00ff58,#04ff56,#10ff54,#1bff52,#27ff50,#33ff4e,#40ff4b,#4dff49,#5aff47,#68ff44,#76ff42,#84ff3f,#93ff3d,#a2ff3a,#b1ff37,#c1ff35,#d2ff32,#e3ff2f,#f4ff2c,#fff828,#ffe822,#ffd91d,#ffcc18,#ffc014,#ffb410,#ffaa0d,#ffa10a,#ff9807,#ff9004,#ff8902,#ff8200,#ff7b00,#ff7500,#ff6f00,#ff6a00,#ff6500,#ff6000,#ff5b00,#ff5700,#ff5300,#ff4f00,#ff4b00,#ff4800)"></i><i style="left:3px;top:237px;width:462px;background:linear-gradient(90deg,#00ff8b,#00ff8a,#00ff89,#00ff88,#00ff87,#00ff86,#00ff85,#00ff84,#00ff83,#00ff82,#00ff80,#00ff7f,#00ff7e,#00ff7d,#00ff7c,#00ff7a,#00ff79,#00ff78,#00ff77,#00ff75,#00ff74,#00ff72,#00ff71,#00ff70,#00ff6e,#00ff6d,#00ff6b,#00ff69,#00ff68,#00ff66,#00ff64,#00ff63,#00ff61,#00ff5f,#00ff5d,#00ff5b,#08ff59,#14ff57,#20ff55,#2cff53,#39ff51,#45ff4f,#53ff4d,#60ff4a,#6eff48,#7cff45,#8bff43,#9aff40,#a9ff3e,#b9ff3b,#caff38,#dbff35,#ecff32,#feff2f,#ffef29,#ffdf24,#ffd11f,#ffc41a,#ffb916,#ffae12,#ffa40f,#ff9b0b,#ff9308,#ff8b06,#ff8403,#ff7d01,#ff7700,#ff7100,#ff6b00,#ff6600,#ff6100,#ff5c00,#ff5800,#ff5400,#ff5000,#ff4c00,#ff4900,#ff4500)"></i><i style="left:3px;top:240px;width:468px;background:linear-gradient(90deg,#00ff8e,#00ff8d,#00ff8c,#00ff8b,#00ff8a,#00ff89,#00ff88,#00ff87,#00ff86,#00ff85,#00ff84,#00ff83,#00ff81,#00ff80,#00ff7f,#00ff7e,#00ff7d,#00ff7b,#00ff7a,#00ff79,#00ff77,#00ff76,#00ff75,#00ff73,#00ff72,#00ff70,#00ff6f,#00ff6d,#00ff6b,#00ff6a,#00ff68,#00ff66,#00ff65,#00ff63,#00ff61,#00ff5f,#0bff5d,#16ff5b,#22ff59,#2fff57,#3cff55,#49ff53,#56ff51,#64ff4e,#72ff4c,#81ff49,#90ff47,#9fff44,#afff42,#bfff3f,#d0ff3c,#e1ff39,#f3ff36,#fff932,#ffe82c,#ffd926,#ffcb21,#ffbf1c,#ffb318,#ffa914,#ff9f11,#ff970e,#ff8f0a,#ff8708,#ff8005,#ff7903,#ff7300,#ff6d00,#ff6800,#ff6300,#ff5e00,#ff5a00,#ff5500,#ff5100,#ff4d00,#ff4a00,#ff4600,#ff4300,#ff4000)"></i><i style="left:3px;top:243px;width:474px;background:linear-gradient(90deg,#00ff91,#00ff90,#00ff8f,#00ff8e,#00ff8d,#00ff8c,#00ff8b,#00ff8a,#00ff89,#00ff88,#00ff87,#00ff86,#00ff85,#00ff84,#00ff83,#00ff81,#00ff80,#00ff7f,#00ff7e,#00ff7c,#00ff7b,#00ff7a,#00ff78,#00ff77,#00ff75,#00ff74,#00ff72,#00ff71,#00ff6f,#00ff6e,#00ff6c,#00ff6a,#00ff69,#00ff67,#00ff65,#01ff63,#0dff61,#19ff5f,#25ff5d,#32ff5b,#3fff59,#4cff57,#5aff55,#68ff52,#76ff50,#85ff4e,#95ff4b,#a4ff49,#b4ff46,#c5ff43,#d6ff40,#e8ff3e,#faff3b,#fff235,#ffe12e,#ffd329,#ffc623,#ffb91f,#ffae1b,#ffa417,#ff9b13,#ff9210,#ff8b0d,#ff830a,#ff7c07,#ff7604,#ff7002,#ff6a00,#ff6500,#ff6000,#ff5b00,#ff5700,#ff5300,#ff4f00,#ff4b00,#ff4700,#ff4400,#ff4100,#ff3d00,#ff3b00)"></i><i style="left:4px;top:246px;width:474px;background:linear-gradient(90deg,#00ff94,#00ff94,#00ff93,#00ff92,#00ff91,#00ff90,#00ff8f,#00ff8e,#00ff8d,#00ff8c,#00ff8b,#00ff89,#00ff88,#00ff87,#00ff86,#00ff85,#00ff84,#00ff82,#00ff81,#00ff80,#00ff7f,#00ff7d,#00ff7c,#00ff7a,#00ff79,#00ff78,#00ff76,#00ff75,#00ff73,#00ff71,#00ff70,#00ff6e,#00ff6c,#00ff6b,#00ff69,#05ff67,#11ff65,#1eff63,#2aff61,#37ff5f,#44ff5d,#52ff5b,#60ff59,#6eff56,#7dff54,#8dff52,#9cff4f,#acff4d,#bdff4a,#ceff47,#e0ff44,#f2ff42,#fff93d,#ffe836,#ffd930,#ffcb2a,#ffbe25,#ffb220,#ffa81c,#ff9e18,#ff9514,#ff8d11,#ff850e,#ff7e0b,#ff7808,#ff7106,#ff6c04,#ff6601,#ff6100,#ff5c00,#ff5800,#ff5300,#ff4f00,#ff4b00,#ff4800,#ff4400,#ff4100,#ff3e00,#ff3b00,#ff3800)"></i><i style="left:4px;top:249px;width:480px;background:linear-gradient(90deg,#00ff98,#00ff97,#00ff96,#00ff95,#00ff94,#00ff93,#00ff92,#00ff91,#00ff90,#00ff8f,#00ff8e,#00ff8d,#00ff8c,#00ff8b,#00ff8a,#00ff89,#00ff87,#00ff86,#00ff85,#00ff84,#00ff82,#00ff81,#00ff80,#00ff7e,#00ff7d,#00ff7c,#00ff7a,#00ff79,#00ff77,#00ff75,#00ff74,#00ff72,#00ff70,#00ff6f,#00ff6d,#07ff6b,#14ff69,#20ff67,#2dff65,#3aff63,#48ff61,#56ff5f,#64ff5d,#73ff5b,#82ff58,#92ff56,#a2ff54,#b2ff51,#c3ff4e,#d5ff4c,#e7ff49,#f9ff46,#fff240,#ffe139,#ffd232,#ffc52d,#ffb827,#ffad23,#ffa31e,#ff9a1a,#ff9117,#ff8913,#ff8110,#ff7b0d,#ff740a,#ff6e08,#ff6805,#ff6303,#ff5e01,#ff5900,#ff5500,#ff5100,#ff4d00,#ff4900,#ff4500,#ff4200,#ff3f00,#ff3c00,#ff3900,#ff3600,#ff3300)"></i><i style="left:5px;top:252px;width:480px;background:linear-gradient(90deg,#00ff9b,#00ff9a,#00ff99,#00ff99,#00ff98,#00ff97,#00ff96,#00ff95,#00ff94,#00ff93,#00ff92,#00ff91,#00ff90,#00ff8e,#00ff8d,#00ff8c,#00ff8b,#00ff8a,#00ff89,#00ff87,#00ff86,#00ff85,#00ff84,#00ff82,#00ff81,#00ff7f,#00ff7e,#00ff7c,#00ff7b,#00ff79,#00ff78,#00ff76,#00ff74,#00ff73,#00ff71,#0cff6f,#18ff6d,#25ff6b,#32ff6a,#40ff68,#4eff65,#5cff63,#6bff61,#7aff5f,#89ff5d,#99ff5a,#aaff58,#bbff55,#ccff53,#deff50,#f1ff4d,#fffa49,#ffe841,#ffd83a,#ffca34,#ffbd2e,#ffb129,#ffa724,#ff9d20,#ff941c,#ff8b18,#ff8415,#ff7c11,#ff760e,#ff700c,#ff6a09,#ff6407,#ff5f04,#ff5a02,#ff5600,#ff5100,#ff4d00,#ff4a00,#ff4600,#ff4200,#ff3f00,#ff3c00,#ff3900,#ff3600,#ff3300,#ff3100)"></i><i style="left:5px;top:255px;width:486px;background:linear-gradient(90deg,#00ff9f,#00ff9e,#00ff9d,#00ff9c,#00ff9b,#00ff9a,#00ff99,#00ff98,#00ff98,#00ff97,#00ff96,#00ff94,#00ff93,#00ff92,#00ff91,#00ff90,#00ff8f,#00ff8e,#00ff8d,#00ff8b,#00ff8a,#00ff89,#00ff88,#00ff86,#00ff85,#00ff84,#00ff82,#00ff81,#00ff7f,#00ff7e,#00ff7c,#00ff7b,#00ff79,#00ff77,#02ff75,#0eff74,#1bff72,#28ff70,#36ff6e,#43ff6c,#51ff6a,#60ff68,#6fff66,#7eff64,#8eff61,#9fff5f,#b0ff5d,#c1ff5a,#d3ff58,#e5ff55,#f9ff52,#fff24b,#ffe144,#ffd23c,#ffc436,#ffb730,#ffac2b,#ffa226,#ff9822,#ff8f1e,#ff871a,#ff8017,#ff7913,#ff7210,#ff6c0d,#ff660b,#ff6108,#ff5c06,#ff5704,#ff5302,#ff4f00,#ff4b00,#ff4700,#ff4300,#ff4000,#ff3d00,#ff3a00,#ff3700,#ff3400,#ff3100,#ff2f00,#ff2c00)"></i><i style="left:6px;top:258px;width:486px;background:linear-gradient(90deg,#00ffa2,#00ffa1,#00ffa1,#00ffa0,#00ff9f,#00ff9e,#00ff9d,#00ff9c,#00ff9b,#00ff9a,#00ff99,#00ff98,#00ff97,#00ff96,#00ff95,#00ff94,#00ff93,#00ff92,#00ff91,#00ff8f,#00ff8e,#00ff8d,#00ff8c,#00ff8a,#00ff89,#00ff88,#00ff86,#00ff85,#00ff83,#00ff82,#00ff80,#00ff7f,#00ff7d,#00ff7b,#06ff7a,#13ff78,#20ff76,#2dff74,#3bff73,#49ff71,#58ff6f,#67ff6d,#76ff6a,#86ff68,#96ff66,#a7ff64,#b9ff61,#caff5f,#ddff5c,#f0ff5a,#fffa55,#ffe84d,#ffd845,#ffc93e,#ffbc37,#ffb032,#ffa52c,#ff9b28,#ff9223,#ff8a1f,#ff821b,#ff7b18,#ff7415,#ff6e12,#ff680f,#ff620c,#ff5d0a,#ff5807,#ff5405,#ff5003,#ff4b01,#ff4800,#ff4400,#ff4000,#ff3d00,#ff3a00,#ff3700,#ff3400,#ff3100,#ff2f00,#ff2c00,#ff2a00)"></i><i style="left:6px;top:261px;width:492px;background:linear-gradient(90deg,#00ffa6,#00ffa5,#00ffa4,#00ffa4,#00ffa3,#00ffa2,#00ffa1,#00ffa0,#00ff9f,#00ff9e,#00ff9d,#00ff9c,#00ff9b,#00ff9a,#00ff99,#00ff98,#00ff97,#00ff96,#00ff95,#00ff94,#00ff92,#00ff91,#00ff90,#00ff8f,#00ff8d,#00ff8c,#00ff8b,#00ff89,#00ff88,#00ff86,#00ff85,#00ff83,#00ff82,#00ff80,#09ff7f,#16ff7d,#23ff7b,#31ff79,#3fff77,#4dff76,#5cff74,#6bff72,#7bff6f,#8bff6d,#9cff6b,#adff69,#bfff66,#d1ff64,#e4ff61,#f8ff5f,#fff358,#ffe14f,#ffd147,#ffc340,#ffb63a,#ffab34,#ffa02e,#ff972a,#ff8e25,#ff8521,#ff7e1d,#ff771a,#ff7016,#ff6a13,#ff6511,#ff5f0e,#ff5a0b,#ff5509,#ff5107,#ff4d05,#ff4903,#ff4501,#ff4100,#ff3e00,#ff3b00,#ff3800,#ff3500,#ff3200,#ff2f00,#ff2d00,#ff2a00,#ff2800,#ff2600)"></i><i style="left:7px;top:264px;width:498px;background:linear-gradient(90deg,#00ffaa,#00ffa9,#00ffa8,#00ffa7,#00ffa6,#00ffa6,#00ffa5,#00ffa4,#00ffa3,#00ffa2,#00ffa1,#00ffa0,#00ff9f,#00ff9e,#00ff9d,#00ff9c,#00ff9b,#00ff9a,#00ff99,#00ff98,#00ff97,#00ff95,#00ff94,#00ff93,#00ff92,#00ff90,#00ff8f,#00ff8e,#00ff8c,#00ff8b,#00ff89,#00ff88,#00ff86,#01ff85,#0dff83,#1bff82,#28ff80,#36ff7e,#45ff7c,#53ff7a,#63ff78,#72ff76,#82ff74,#93ff72,#a4ff70,#b6ff6e,#c8ff6b,#dbff69,#efff67,#fffb62,#ffe859,#ffd750,#ffc948,#ffbb41,#ffaf3b,#ffa435,#ff9a30,#ff902b,#ff8826,#ff8022,#ff791f,#ff721b,#ff6c18,#ff6615,#ff6012,#ff5b0f,#ff560d,#ff520a,#ff4d08,#ff4906,#ff4604,#ff4202,#ff3e00,#ff3b00,#ff3800,#ff3500,#ff3200,#ff3000,#ff2d00,#ff2b00,#ff2800,#ff2600,#ff2400,#ff2200)"></i><i style="left:7px;top:267px;width:498px;background:linear-gradient(90deg,#00ffae,#00ffad,#00ffac,#00ffab,#00ffaa,#00ffaa,#00ffa9,#00ffa8,#00ffa7,#00ffa6,#00ffa5,#00ffa4,#00ffa3,#00ffa3,#00ffa2,#00ffa1,#00ffa0,#00ff9e,#00ff9d,#00ff9c,#00ff9b,#00ff9a,#00ff99,#00ff98,#00ff96,#00ff95,#00ff94,#00ff93,#00ff91,#00ff90,#00ff8e,#00ff8d,#00ff8b,#03ff8a,#10ff88,#1dff87,#2bff85,#3aff83,#48ff81,#57ff80,#67ff7e,#77ff7c,#88ff7a,#99ff78,#aaff76,#bcff73,#cfff71,#e3ff6f,#f7ff6c,#fff365,#ffe15b,#ffd152,#ffc24a,#ffb543,#ffaa3d,#ff9f37,#ff9532,#ff8c2d,#ff8428,#ff7c24,#ff7520,#ff6e1d,#ff681a,#ff6316,#ff5d14,#ff5811,#ff530e,#ff4f0c,#ff4b0a,#ff4707,#ff4305,#ff3f03,#ff3c02,#ff3900,#ff3600,#ff3300,#ff3000,#ff2e00,#ff2b00,#ff2900,#ff2600,#ff2400,#ff2200,#ff2000)"></i><i style="left:8px;top:270px;width:504px;background:linear-gradient(90deg,#00ffb1,#00ffb1,#00ffb0,#00ffaf,#00ffae,#00ffae,#00ffad,#00ffac,#00ffab,#00ffaa,#00ffa9,#00ffa9,#00ffa8,#00ffa7,#00ffa6,#00ffa5,#00ffa4,#00ffa3,#00ffa2,#00ffa1,#00ffa0,#00ff9f,#00ff9d,#00ff9c,#00ff9b,#00ff9a,#00ff99,#00ff97,#00ff96,#00ff95,#00ff93,#00ff92,#00ff90,#08ff8f,#15ff8d,#23ff8c,#31ff8a,#40ff88,#4fff87,#5eff85,#6eff83,#7fff81,#90ff7f,#a1ff7d,#b4ff7b,#c6ff79,#daff77,#eeff74,#fffc70,#ffe865,#ffd75c,#ffc853,#ffba4b,#ffae44,#ffa23e,#ff9838,#ff8f33,#ff862e,#ff7e2a,#ff7726,#ff7022,#ff6a1e,#ff641b,#ff5e18,#ff5915,#ff5412,#ff500f,#ff4b0d,#ff470b,#ff4409,#ff4007,#ff3c05,#ff3903,#ff3601,#ff3300,#ff3000,#ff2e00,#ff2b00,#ff2900,#ff2600,#ff2400,#ff2200,#ff2000,#ff1e00,#ff1c00)"></i><i style="left:9px;top:273px;width:504px;background:linear-gradient(90deg,#00ffb5,#00ffb5,#00ffb4,#00ffb3,#00ffb3,#00ffb2,#00ffb1,#00ffb0,#00ffaf,#00ffaf,#00ffae,#00ffad,#00ffac,#00ffab,#00ffaa,#00ffa9,#00ffa8,#00ffa7,#00ffa6,#00ffa5,#00ffa4,#00ffa3,#00ffa2,#00ffa1,#00ffa0,#00ff9f,#00ff9d,#00ff9c,#00ff9b,#00ff9a,#00ff98,#00ff97,#00ff95,#0cff94,#1aff92,#28ff91,#37ff8f,#46ff8e,#55ff8c,#65ff8a,#76ff88,#87ff87,#98ff85,#aaff83,#bdff81,#d1ff7e,#e5ff7c,#f9ff7a,#fff071,#ffde66,#ffce5c,#ffbf54,#ffb24c,#ffa645,#ff9c3f,#ff9239,#ff8934,#ff812f,#ff792b,#ff7227,#ff6b23,#ff651f,#ff601c,#ff5a19,#ff5516,#ff5113,#ff4c11,#ff480e,#ff440c,#ff400a,#ff3d08,#ff3a06,#ff3604,#ff3302,#ff3000,#ff2e00,#ff2b00,#ff2900,#ff2600,#ff2400,#ff2200,#ff2000,#ff1e00,#ff1c00,#ff1a00)"></i><i style="left:9px;top:276px;width:510px;background:linear-gradient(90deg,#00ffba,#00ffb9,#00ffb8,#00ffb8,#00ffb7,#00ffb6,#00ffb5,#00ffb5,#00ffb4,#00ffb3,#00ffb2,#00ffb1,#00ffb1,#00ffb0,#00ffaf,#00ffae,#00ffad,#00ffac,#00ffab,#00ffaa,#00ffa9,#00ffa8,#00ffa7,#00ffa6,#00ffa5,#00ffa4,#00ffa3,#00ffa1,#00ffa0,#00ff9f,#00ff9e,#00ff9c,#01ff9b,#0fff9a,#1dff98,#2cff97,#3aff95,#4aff93,#5aff92,#6aff90,#7bff8e,#8cff8d,#9eff8b,#b1ff89,#c4ff87,#d8ff85,#edff83,#fffc7f,#ffe873,#ffd768,#ffc75f,#ffb956,#ffac4e,#ffa148,#ff9641,#ff8d3b,#ff8436,#ff7c31,#ff752d,#ff6e29,#ff6825,#ff6221,#ff5c1e,#ff571b,#ff5218,#ff4e15,#ff4912,#ff4510,#ff410d,#ff3e0b,#ff3a09,#ff3707,#ff3405,#ff3103,#ff2e02,#ff2c00,#ff2900,#ff2700,#ff2400,#ff2200,#ff2000,#ff1e00,#ff1c00,#ff1a00,#ff1800,#ff1600)"></i><i style="left:10px;top:279px;width:510px;background:linear-gradient(90deg,#00ffbe,#00ffbd,#00ffbc,#00ffbc,#00ffbb,#00ffba,#00ffba,#00ffb9,#00ffb8,#00ffb8,#00ffb7,#00ffb6,#00ffb5,#00ffb4,#00ffb4,#00ffb3,#00ffb2,#00ffb1,#00ffb0,#00ffaf,#00ffae,#00ffad,#00ffac,#00ffab,#00ffaa,#00ffa9,#00ffa8,#00ffa7,#00ffa6,#00ffa4,#00ffa3,#00ffa2,#06ffa0,#14ff9f,#23ff9e,#31ff9c,#41ff9b,#51ff99,#61ff98,#72ff96,#83ff94,#95ff93,#a7ff91,#bbff8f,#cfff8d,#e3ff8b,#f8ff89,#fff07f,#ffde73,#ffcd69,#ffbe5f,#ffb157,#ffa54f,#ff9a48,#ff9042,#ff873c,#ff7f37,#ff7732,#ff702e,#ff692a,#ff6326,#ff5d22,#ff581f,#ff531c,#ff4e19,#ff4a16,#ff4613,#ff4211,#ff3e0f,#ff3b0c,#ff370a,#ff3408,#ff3106,#ff2e05,#ff2c03,#ff2901,#ff2700,#ff2400,#ff2200,#ff2000,#ff1e00,#ff1c00,#ff1a00,#ff1800,#ff1600,#ff1500)"></i><i style="left:11px;top:282px;width:516px;background:linear-gradient(90deg,#00ffc2,#00ffc1,#00ffc1,#00ffc0,#00ffc0,#00ffbf,#00ffbe,#00ffbe,#00ffbd,#00ffbc,#00ffbb,#00ffbb,#00ffba,#00ffb9,#00ffb8,#00ffb8,#00ffb7,#00ffb6,#00ffb5,#00ffb4,#00ffb3,#00ffb2,#00ffb1,#00ffb0,#00ffaf,#00ffae,#00ffad,#00ffac,#00ffab,#00ffaa,#00ffa9,#00ffa7,#0bffa6,#1affa5,#28ffa4,#38ffa2,#47ffa1,#58ff9f,#68ff9e,#7aff9c,#8cff9b,#9eff99,#b1ff97,#c5ff95,#daff94,#efff92,#fff98c,#ffe57f,#ffd374,#ffc469,#ffb660,#ffa958,#ff9d50,#ff9349,#ff8a43,#ff813d,#ff7938,#ff7233,#ff6b2f,#ff642b,#ff5f27,#ff5923,#ff5420,#ff4f1d,#ff4b1a,#ff4617,#ff4214,#ff3f12,#ff3b10,#ff380d,#ff340b,#ff3109,#ff2f07,#ff2c06,#ff2904,#ff2702,#ff2401,#ff2200,#ff2000,#ff1e00,#ff1c00,#ff1a00,#ff1800,#ff1600,#ff1400,#ff1300,#ff1100)"></i><i style="left:12px;top:285px;width:516px;background:linear-gradient(90deg,#00ffc6,#00ffc6,#00ffc5,#00ffc5,#00ffc4,#00ffc3,#00ffc3,#00ffc2,#00ffc2,#00ffc1,#00ffc0,#00ffc0,#00ffbf,#00ffbe,#00ffbd,#00ffbd,#00ffbc,#00ffbb,#00ffba,#00ffb9,#00ffb9,#00ffb8,#00ffb7,#00ffb6,#00ffb5,#00ffb4,#00ffb3,#00ffb2,#00ffb1,#00ffb0,#00ffaf,#02ffad,#11ffac,#1fffab,#2effaa,#3effa8,#4effa7,#5fffa6,#70ffa4,#82ffa3,#95ffa1,#a8ff9f,#bbff9e,#d0ff9c,#e5ff9a,#fbff98,#ffed8c,#ffda7f,#ffca74,#ffbb6a,#ffad61,#ffa158,#ff9651,#ff8d4a,#ff8344,#ff7b3e,#ff7439,#ff6d34,#ff6630,#ff602c,#ff5a28,#ff5524,#ff5021,#ff4b1e,#ff471b,#ff4318,#ff3f16,#ff3b13,#ff3811,#ff350e,#ff320c,#ff2f0a,#ff2c08,#ff2907,#ff2705,#ff2403,#ff2202,#ff2000,#ff1e00,#ff1b00,#ff1900,#ff1800,#ff1600,#ff1400,#ff1200,#ff1100,#ff0f00)"></i><i style="left:12px;top:288px;width:522px;background:linear-gradient(90deg,#00ffcb,#00ffcb,#00ffca,#00ffc9,#00ffc9,#00ffc8,#00ffc8,#00ffc7,#00ffc7,#00ffc6,#00ffc5,#00ffc5,#00ffc4,#00ffc3,#00ffc3,#00ffc2,#00ffc1,#00ffc0,#00ffc0,#00ffbf,#00ffbe,#00ffbd,#00ffbc,#00ffbc,#00ffbb,#00ffba,#00ffb9,#00ffb8,#00ffb7,#00ffb6,#00ffb5,#05ffb4,#13ffb3,#23ffb1,#32ffb0,#42ffaf,#53ffae,#64ffac,#75ffab,#88ffaa,#9bffa8,#aeffa7,#c3ffa5,#d8ffa3,#eeffa2,#fffa9d,#ffe58e,#ffd381,#ffc376,#ffb46c,#ffa763,#ff9c5a,#ff9153,#ff884c,#ff7f46,#ff7740,#ff6f3b,#ff6936,#ff6232,#ff5c2e,#ff572a,#ff5226,#ff4d23,#ff4820,#ff441d,#ff401a,#ff3c17,#ff3915,#ff3612,#ff3210,#ff2f0e,#ff2c0c,#ff2a0a,#ff2708,#ff2506,#ff2205,#ff2003,#ff1e01,#ff1c00,#ff1a00,#ff1800,#ff1600,#ff1400,#ff1200,#ff1100,#ff0f00,#ff0e00,#ff0c00)"></i><i style="left:13px;top:291px;width:528px;background:linear-gradient(90deg,#00ffd0,#00ffcf,#00ffcf,#00ffce,#00ffce,#00ffcd,#00ffcd,#00ffcc,#00ffcc,#00ffcb,#00ffca,#00ffca,#00ffc9,#00ffc9,#00ffc8,#00ffc7,#00ffc7,#00ffc6,#00ffc5,#00ffc5,#00ffc4,#00ffc3,#00ffc2,#00ffc1,#00ffc1,#00ffc0,#00ffbf,#00ffbe,#00ffbd,#00ffbc,#00ffbb,#0affba,#19ffb9,#29ffb8,#39ffb7,#49ffb6,#5affb4,#6cffb3,#7effb2,#91ffb1,#a4ffaf,#b9ffae,#ceffac,#e4ffab,#faffa9,#ffed9c,#ffda8e,#ffc981,#ffba76,#ffac6c,#ffa063,#ff955b,#ff8b54,#ff814d,#ff7947,#ff7141,#ff6a3c,#ff6437,#ff5e33,#ff582f,#ff532b,#ff4e27,#ff4924,#ff4521,#ff411e,#ff3d1b,#ff3918,#ff3616,#ff3313,#ff2f11,#ff2c0f,#ff2a0d,#ff270b,#ff2509,#ff2207,#ff2005,#ff1e04,#ff1b02,#ff1901,#ff1800,#ff1600,#ff1400,#ff1200,#ff1100,#ff0f00,#ff0d00,#ff0c00,#ff0a00,#ff0900)"></i><i style="left:14px;top:294px;width:528px;background:linear-gradient(90deg,#00ffd4,#00ffd4,#00ffd4,#00ffd3,#00ffd3,#00ffd2,#00ffd2,#00ffd1,#00ffd1,#00ffd0,#00ffd0,#00ffcf,#00ffcf,#00ffce,#00ffcd,#00ffcd,#00ffcc,#00ffcc,#00ffcb,#00ffca,#00ffca,#00ffc9,#00ffc8,#00ffc7,#00ffc7,#00ffc6,#00ffc5,#00ffc4,#00ffc3,#00ffc3,#01ffc2,#10ffc1,#1fffc0,#2fffbf,#3fffbe,#50ffbd,#62ffbc,#74ffba,#87ffb9,#9affb8,#afffb7,#c4ffb5,#d9ffb4,#f0ffb3,#fff7ab,#ffe29c,#ffcf8e,#ffbf81,#ffb176,#ffa46c,#ff9864,#ff8e5c,#ff8454,#ff7b4e,#ff7348,#ff6c42,#ff653d,#ff5f38,#ff5934,#ff5430,#ff4f2c,#ff4a28,#ff4525,#ff4122,#ff3d1f,#ff3a1c,#ff3619,#ff3317,#ff3014,#ff2d12,#ff2a10,#ff270e,#ff240c,#ff220a,#ff2008,#ff1d06,#ff1b05,#ff1903,#ff1702,#ff1500,#ff1400,#ff1200,#ff1000,#ff0f00,#ff0d00,#ff0c00,#ff0a00,#ff0900,#ff0700)"></i><i style="left:15px;top:297px;width:534px;background:linear-gradient(90deg,#00ffd9,#00ffd9,#00ffd9,#00ffd8,#00ffd8,#00ffd7,#00ffd7,#00ffd7,#00ffd6,#00ffd6,#00ffd5,#00ffd5,#00ffd4,#00ffd4,#00ffd3,#00ffd3,#00ffd2,#00ffd1,#00ffd1,#00ffd0,#00ffd0,#00ffcf,#00ffce,#00ffce,#00ffcd,#00ffcc,#00ffcc,#00ffcb,#00ffca,#00ffc9,#06ffc9,#15ffc8,#25ffc7,#35ffc6,#46ffc5,#58ffc4,#6affc3,#7dffc2,#90ffc1,#a4ffc0,#b9ffbf,#cfffbd,#e6ffbc,#fdffbb,#ffeaaa,#ffd69b,#ffc58d,#ffb681,#ffa877,#ff9c6d,#ff9164,#ff875c,#ff7e55,#ff764f,#ff6e49,#ff6743,#ff603e,#ff5a39,#ff5535,#ff4f31,#ff4b2d,#ff4629,#ff4226,#ff3e23,#ff3a20,#ff361d,#ff331a,#ff3018,#ff2d15,#ff2a13,#ff2711,#ff240f,#ff220d,#ff200b,#ff1d09,#ff1b07,#ff1906,#ff1704,#ff1503,#ff1301,#ff1200,#ff1000,#ff0e00,#ff0d00,#ff0b00,#ff0a00,#ff0800,#ff0700,#ff0600,#ff0500)"></i><i style="left:15px;top:300px;width:534px;background:linear-gradient(90deg,#00ffdf,#00ffde,#00ffde,#00ffdd,#00ffdd,#00ffdd,#00ffdc,#00ffdc,#00ffdc,#00ffdb,#00ffdb,#00ffda,#00ffda,#00ffda,#00ffd9,#00ffd9,#00ffd8,#00ffd8,#00ffd7,#00ffd7,#00ffd6,#00ffd6,#00ffd5,#00ffd4,#00ffd4,#00ffd3,#00ffd3,#00ffd2,#00ffd1,#00ffd1,#09ffd0,#18ffcf,#29ffce,#39ffce,#4bffcd,#5dffcc,#6fffcb,#83ffca,#97ffc9,#abffc8,#c1ffc7,#d7ffc6,#efffc5,#fff7be,#ffe2ac,#ffcf9d,#ffbe8f,#ffaf83,#ffa278,#ff966f,#ff8c66,#ff825e,#ff7957,#ff7150,#ff6a4a,#ff6345,#ff5d40,#ff573b,#ff5136,#ff4c32,#ff472e,#ff432b,#ff3f27,#ff3b24,#ff3721,#ff341e,#ff301c,#ff2d19,#ff2a17,#ff2814,#ff2512,#ff2210,#ff200e,#ff1e0c,#ff1b0a,#ff1909,#ff1707,#ff1505,#ff1304,#ff1202,#ff1001,#ff0e00,#ff0d00,#ff0b00,#ff0a00,#ff0800,#ff0700,#ff0600,#ff0400,#ff0300)"></i><i style="left:16px;top:303px;width:540px;background:linear-gradient(90deg,#00ffe4,#00ffe3,#00ffe3,#00ffe3,#00ffe3,#00ffe2,#00ffe2,#00ffe2,#00ffe1,#00ffe1,#00ffe1,#00ffe0,#00ffe0,#00ffe0,#00ffdf,#00ffdf,#00ffde,#00ffde,#00ffde,#00ffdd,#00ffdd,#00ffdc,#00ffdc,#00ffdb,#00ffdb,#00ffda,#00ffda,#00ffd9,#00ffd9,#00ffd8,#0effd7,#1fffd7,#2fffd6,#41ffd5,#52ffd5,#65ffd4,#78ffd3,#8cffd2,#a1ffd2,#b6ffd1,#cdffd0,#e4ffcf,#fcffce,#ffeabc,#ffd6ab,#ffc49c,#ffb58f,#ffa783,#ff9a79,#ff8f6f,#ff8567,#ff7c5f,#ff7358,#ff6c51,#ff644b,#ff5e46,#ff5840,#ff523c,#ff4d37,#ff4833,#ff442f,#ff3f2c,#ff3b28,#ff3825,#ff3422,#ff311f,#ff2d1d,#ff2a1a,#ff2818,#ff2515,#ff2213,#ff2011,#ff1d0f,#ff1b0d,#ff190b,#ff170a,#ff1508,#ff1306,#ff1105,#ff1003,#ff0e02,#ff0c01,#ff0b00,#ff0900,#ff0800,#ff0700,#ff0500,#ff0400,#ff0300,#ff0200,#ff0000)"></i><i style="left:17px;top:306px;width:540px;background:linear-gradient(90deg,#00ffe9,#00ffe9,#00ffe9,#00ffe8,#00ffe8,#00ffe8,#00ffe8,#00ffe7,#00ffe7,#00ffe7,#00ffe7,#00ffe6,#00ffe6,#00ffe6,#00ffe5,#00ffe5,#00ffe5,#00ffe4,#00ffe4,#00ffe4,#00ffe3,#00ffe3,#00ffe3,#00ffe2,#00ffe2,#00ffe1,#00ffe1,#00ffe1,#00ffe0,#04ffe0,#14ffdf,#25ffdf,#36ffde,#48ffde,#5bffdd,#6effdc,#82ffdc,#96ffdb,#acffdb,#c2ffda,#d9ffd9,#f1ffd8,#fff4ce,#ffdebb,#ffcbaa,#ffba9c,#ffab8f,#ff9e83,#ff9279,#ff886f,#ff7e67,#ff755f,#ff6d58,#ff6652,#ff5f4c,#ff5946,#ff5341,#ff4e3d,#ff4938,#ff4434,#ff4030,#ff3c2d,#ff3829,#ff3426,#ff3123,#ff2e20,#ff2a1d,#ff281b,#ff2518,#ff2216,#ff2014,#ff1d12,#ff1b10,#ff190e,#ff170c,#ff150a,#ff1309,#ff1107,#ff0f06,#ff0e04,#ff0c03,#ff0b01,#ff0900,#ff0800,#ff0600,#ff0500,#ff0400,#ff0200,#ff0100,#ff0000,#ff0000)"></i><i style="left:17px;top:309px;width:546px;background:linear-gradient(90deg,#00ffef,#00ffef,#00ffee,#00ffee,#00ffee,#00ffee,#00ffee,#00ffed,#00ffed,#00ffed,#00ffed,#00ffed,#00ffec,#00ffec,#00ffec,#00ffec,#00ffec,#00ffeb,#00ffeb,#00ffeb,#00ffeb,#00ffea,#00ffea,#00ffea,#00ffe9,#00ffe9,#00ffe9,#00ffe8,#00ffe8,#07ffe8,#18ffe7,#29ffe7,#3affe7,#4dffe6,#60ffe6,#73ffe5,#88ffe5,#9dffe4,#b3ffe4,#caffe3,#e2ffe3,#fbffe2,#ffead0,#ffd5bd,#ffc3ac,#ffb39d,#ffa590,#ff9885,#ff8d7b,#ff8371,#ff7969,#ff7161,#ff695a,#ff6254,#ff5b4e,#ff5548,#ff5043,#ff4b3e,#ff463a,#ff4136,#ff3d32,#ff392e,#ff352b,#ff3227,#ff2e24,#ff2b22,#ff281f,#ff251c,#ff231a,#ff2017,#ff1e15,#ff1b13,#ff1911,#ff170f,#ff150d,#ff130c,#ff110a,#ff0f08,#ff0e07,#ff0c05,#ff0a04,#ff0902,#ff0701,#ff0600,#ff0500,#ff0300,#ff0200,#ff0100,#ff0000,#ff0000,#ff0000,#ff0000)"></i><i style="left:18px;top:312px;width:546px;background:linear-gradient(90deg,#00fff4,#00fff4,#00fff4,#00fff4,#00fff4,#00fff4,#00fff4,#00fff4,#00fff4,#00fff3,#00fff3,#00fff3,#00fff3,#00fff3,#00fff3,#00fff3,#00fff3,#00fff2,#00fff2,#00fff2,#00fff2,#00fff2,#00fff2,#00fff1,#00fff1,#00fff1,#00fff1,#00fff1,#00fff0,#0dfff0,#1efff0,#30fff0,#42fff0,#55ffef,#69ffef,#7dffef,#92ffee,#a8ffee,#bfffee,#d7ffee,#f0ffed,#fff4e3,#ffdece,#ffcabb,#ffb9ab,#ffaa9d,#ff9c90,#ff9085,#ff867b,#ff7c71,#ff7369,#ff6b62,#ff645b,#ff5d54,#ff574e,#ff5149,#ff4b44,#ff463f,#ff423b,#ff3d36,#ff3933,#ff352f,#ff322c,#ff2e28,#ff2b25,#ff2822,#ff2520,#ff221d,#ff201b,#ff1d18,#ff1b16,#ff1914,#ff1712,#ff1510,#ff130e,#ff110d,#ff0f0b,#ff0d09,#ff0c08,#ff0a06,#ff0905,#ff0703,#ff0602,#ff0401,#ff0300,#ff0200,#ff0000,#ff0000,#ff0000,#ff0000,#ff0000,#ff0000)"></i><i style="left:19px;top:315px;width:552px;background:linear-gradient(90deg,#00fffa,#00fffa,#00fffa,#00fffa,#00fffa,#00fffa,#00fffa,#00fffa,#00fffa,#00fffa,#00fffa,#00fffa,#00fffa,#00fffa,#00fffa,#00fffa,#00fffa,#00fffa,#00fffa,#00fffa,#00fffa,#00fffa,#00fff9,#00fff9,#00fff9,#00fff9,#00fff9,#00fff9,#03fff9,#13fff9,#25fff9,#37fff9,#4afff9,#5dfff9,#72fff9,#87fff9,#9dfff9,#b4fff8,#ccfff8,#e5fff8,#fffff8,#ffe7e0,#ffd2cc,#ffbfba,#ffafaa,#ffa19c,#ff9490,#ff8985,#ff7f7b,#ff7572,#ff6d6a,#ff6562,#ff5e5b,#ff5855,#ff524f,#ff4c4a,#ff4744,#ff4240,#ff3e3b,#ff3a37,#ff3633,#ff3230,#ff2e2c,#ff2b29,#ff2826,#ff2523,#ff2221,#ff201e,#ff1d1c,#ff1b19,#ff1917,#ff1615,#ff1413,#ff1211,#ff100f,#ff0f0d,#ff0d0c,#ff0b0a,#ff0a08,#ff0807,#ff0706,#ff0504,#ff0403,#ff0302,#ff0100,#ff0000,#ff0000,#ff0000,#ff0000,#ff0000,#ff0000,#ff0000,#ff0000)"></i><i style="left:20px;top:318px;width:552px;background:linear-gradient(90deg,#00feff,#00feff,#00feff,#00fdff,#00fdff,#00fdff,#00fdff,#00fdff,#00fdff,#00fdff,#00fdff,#00fdff,#00fdff,#00fdff,#00fdff,#00fdff,#00fdff,#00fdff,#00fdff,#00fdff,#00fcff,#00fcff,#00fcff,#00fcff,#00fcff,#00fcff,#00fcff,#00fcff,#08fcff,#1afcff,#2bfcff,#3efcff,#51fbff,#65fbff,#7afbff,#8ffbff,#a6fbff,#bdfbff,#d5fbff,#effaff,#fff1f5,#ffdade,#ffc6ca,#ffb5b9,#ffa6a9,#ff989c,#ff8c90,#ff8285,#ff787b,#ff6f72,#ff676a,#ff6062,#ff595c,#ff5355,#ff4d50,#ff484a,#ff4345,#ff3e41,#ff3a3c,#ff3638,#ff3234,#ff2f31,#ff2b2d,#ff282a,#ff2527,#ff2224,#ff2022,#ff1d1f,#ff1b1c,#ff181a,#ff1618,#ff1416,#ff1214,#ff1012,#ff0e10,#ff0d0e,#ff0b0d,#ff090b,#ff0809,#ff0608,#ff0506,#ff0305,#ff0204,#ff0102,#ff0001,#ff0000,#ff0000,#ff0000,#ff0000,#ff0000,#ff0000,#ff0000,#ff0000)"></i><i style="left:20px;top:321px;width:558px;background:linear-gradient(90deg,#00f8ff,#00f7ff,#00f7ff,#00f7ff,#00f7ff,#00f7ff,#00f7ff,#00f7ff,#00f7ff,#00f6ff,#00f6ff,#00f6ff,#00f6ff,#00f6ff,#00f6ff,#00f6ff,#00f5ff,#00f5ff,#00f5ff,#00f5ff,#00f5ff,#00f4ff,#00f4ff,#00f4ff,#00f4ff,#00f4ff,#00f3ff,#00f3ff,#0bf3ff,#1cf3ff,#2ef2ff,#40f2ff,#53f2ff,#67f1ff,#7bf1ff,#90f1ff,#a6f1ff,#bdf0ff,#d5f0ff,#eeefff,#ffe7f6,#ffd1df,#ffbecb,#ffadba,#ff9fab,#ff929d,#ff8791,#ff7c86,#ff737d,#ff6a74,#ff636c,#ff5c64,#ff555d,#ff4f57,#ff4a51,#ff444c,#ff4047,#ff3b42,#ff373e,#ff333a,#ff2f36,#ff2c32,#ff292f,#ff262b,#ff2328,#ff2026,#ff1d23,#ff1b20,#ff191e,#ff161b,#ff1419,#ff1217,#ff1015,#ff0e13,#ff0d11,#ff0b0f,#ff090e,#ff080c,#ff060a,#ff0509,#ff0307,#ff0206,#ff0105,#ff0003,#ff0002,#ff0001,#ff0000,#ff0000,#ff0000,#ff0000,#ff0000,#ff0000,#ff0000,#ff0000)"></i><i style="left:21px;top:324px;width:564px;background:linear-gradient(90deg,#00f2ff,#00f1ff,#00f1ff,#00f1ff,#00f1ff,#00f1ff,#00f0ff,#00f0ff,#00f0ff,#00f0ff,#00f0ff,#00efff,#00efff,#00efff,#00efff,#00eeff,#00eeff,#00eeff,#00edff,#00edff,#00edff,#00edff,#00ecff,#00ecff,#00ecff,#00ebff,#00ebff,#01eaff,#11eaff,#22eaff,#33e9ff,#45e9ff,#58e8ff,#6ce8ff,#80e7ff,#95e7ff,#abe6ff,#c2e6ff,#d9e5ff,#f2e5ff,#ffd9f3,#ffc5dd,#ffb3ca,#ffa4b9,#ff96aa,#ff8a9d,#ff7f91,#ff7586,#ff6c7d,#ff6474,#ff5d6c,#ff5665,#ff505e,#ff4a58,#ff4552,#ff404c,#ff3c47,#ff3743,#ff333e,#ff303a,#ff2c37,#ff2933,#ff2630,#ff232c,#ff2029,#ff1d26,#ff1b24,#ff1821,#ff161f,#ff141c,#ff121a,#ff1018,#ff0e16,#ff0c14,#ff0a12,#ff0910,#ff070e,#ff060d,#ff040b,#ff030a,#ff0108,#ff0007,#ff0005,#ff0004,#ff0003,#ff0002,#ff0000,#ff0000,#ff0000,#ff0000,#ff0000,#ff0000,#ff0000,#ff0000,#ff0000)"></i><i style="left:22px;top:327px;width:564px;background:linear-gradient(90deg,#00ecff,#00ebff,#00ebff,#00ebff,#00ebff,#00eaff,#00eaff,#00eaff,#00eaff,#00e9ff,#00e9ff,#00e9ff,#00e8ff,#00e8ff,#00e8ff,#00e7ff,#00e7ff,#00e6ff,#00e6ff,#00e6ff,#00e5ff,#00e5ff,#00e4ff,#00e4ff,#00e4ff,#00e3ff,#00e3ff,#06e2ff,#16e1ff,#27e1ff,#39e0ff,#4be0ff,#5ddfff,#71dfff,#85deff,#99ddff,#afddff,#c6dcff,#dddbff,#f5daff,#ffcdf0,#ffbadb,#ffa9c8,#ff9bb8,#ff8ea9,#ff829c,#ff7891,#ff6f86,#ff667d,#ff5f74,#ff586c,#ff5165,#ff4b5e,#ff4658,#ff4152,#ff3c4d,#ff3848,#ff3444,#ff303f,#ff2c3b,#ff2937,#ff2634,#ff2330,#ff202d,#ff1d2a,#ff1a27,#ff1825,#ff1622,#ff141f,#ff111d,#ff0f1b,#ff0e19,#ff0c17,#ff0a15,#ff0813,#ff0711,#ff050f,#ff040e,#ff020c,#ff010b,#ff0009,#ff0008,#ff0006,#ff0005,#ff0004,#ff0002,#ff0001,#ff0000,#ff0000,#ff0000,#ff0000,#ff0000,#ff0000,#ff0000,#ff0000)"></i><i style="left:23px;top:330px;width:570px;background:linear-gradient(90deg,#00e6ff,#00e6ff,#00e5ff,#00e5ff,#00e5ff,#00e4ff,#00e4ff,#00e4ff,#00e3ff,#00e3ff,#00e2ff,#00e2ff,#00e2ff,#00e1ff,#00e1ff,#00e0ff,#00e0ff,#00dfff,#00dfff,#00deff,#00deff,#00ddff,#00ddff,#00dcff,#00dcff,#00dbff,#00daff,#0cdaff,#1cd9ff,#2cd8ff,#3ed8ff,#50d7ff,#62d6ff,#75d5ff,#89d5ff,#9ed4ff,#b3d3ff,#cad2ff,#e1d1ff,#f9d0ff,#ffc1ed,#ffafd8,#ff9fc6,#ff92b6,#ff86a8,#ff7b9c,#ff7190,#ff6886,#ff607d,#ff5974,#ff526d,#ff4c65,#ff475f,#ff4159,#ff3d53,#ff384e,#ff3449,#ff3044,#ff2c40,#ff293c,#ff2638,#ff2235,#ff2031,#ff1d2e,#ff1a2b,#ff1828,#ff1525,#ff1323,#ff1120,#ff0f1e,#ff0d1c,#ff0b1a,#ff0a17,#ff0816,#ff0614,#ff0512,#ff0310,#ff020e,#ff010d,#ff000b,#ff000a,#ff0008,#ff0007,#ff0006,#ff0004,#ff0003,#ff0002,#ff0001,#ff0000,#ff0000,#ff0000,#ff0000,#ff0000,#ff0000,#ff0000,#ff0000)"></i><i style="left:23px;top:333px;width:570px;background:linear-gradient(90deg,#00e0ff,#00e0ff,#00e0ff,#00dfff,#00dfff,#00deff,#00deff,#00ddff,#00ddff,#00ddff,#00dcff,#00dcff,#00dbff,#00dbff,#00daff,#00daff,#00d9ff,#00d8ff,#00d8ff,#00d7ff,#00d7ff,#00d6ff,#00d5ff,#00d5ff,#00d4ff,#00d3ff,#00d3ff,#0ed2ff,#1ed1ff,#2fd0ff,#40cfff,#51cfff,#64ceff,#77cdff,#8accff,#9fcbff,#b4caff,#cac9ff,#e1c7ff,#f8c6ff,#ffb8ee,#ffa7da,#ff98c8,#ff8bb8,#ff80aa,#ff759d,#ff6c92,#ff6388,#ff5c7e,#ff5576,#ff4e6e,#ff4867,#ff4360,#ff3e5a,#ff3955,#ff354f,#ff314a,#ff2d46,#ff2941,#ff263d,#ff2339,#ff2036,#ff1d32,#ff1a2f,#ff182c,#ff1629,#ff1327,#ff1124,#ff0f21,#ff0d1f,#ff0b1d,#ff0a1b,#ff0819,#ff0617,#ff0515,#ff0313,#ff0211,#ff000f,#ff000e,#ff000c,#ff000b,#ff0009,#ff0008,#ff0007,#ff0005,#ff0004,#ff0003,#ff0002,#ff0001,#ff0000,#ff0000,#ff0000,#ff0000,#ff0000,#ff0000,#ff0000)"></i><i style="left:24px;top:336px;width:576px;background:linear-gradient(90deg,#00dbff,#00daff,#00daff,#00d9ff,#00d9ff,#00d8ff,#00d8ff,#00d7ff,#00d7ff,#00d6ff,#00d6ff,#00d5ff,#00d5ff,#00d4ff,#00d4ff,#00d3ff,#00d2ff,#00d2ff,#00d1ff,#00d0ff,#00d0ff,#00cfff,#00ceff,#00cdff,#00ccff,#00ccff,#04cbff,#13caff,#23c9ff,#34c8ff,#45c7ff,#56c6ff,#68c5ff,#7bc4ff,#8fc3ff,#a3c2ff,#b8c1ff,#cebfff,#e4beff,#fcbdff,#ffadeb,#ff9dd8,#ff8fc6,#ff83b7,#ff78a9,#ff6e9d,#ff6592,#ff5d88,#ff567e,#ff4f76,#ff496e,#ff4467,#ff3e61,#ff3a5b,#ff3555,#ff3150,#ff2d4b,#ff2946,#ff2642,#ff233e,#ff203a,#ff1d37,#ff1a33,#ff1830,#ff152d,#ff132a,#ff1127,#ff0f25,#ff0d22,#ff0b20,#ff091e,#ff071b,#ff0619,#ff0417,#ff0316,#ff0114,#ff0012,#ff0010,#ff000f,#ff000d,#ff000c,#ff000a,#ff0009,#ff0007,#ff0006,#ff0005,#ff0004,#ff0002,#ff0001,#ff0000,#ff0000,#ff0000,#ff0000,#ff0000,#ff0000,#ff0000,#ff0000)"></i><i style="left:25px;top:339px;width:576px;background:linear-gradient(90deg,#00d5ff,#00d5ff,#00d4ff,#00d4ff,#00d3ff,#00d3ff,#00d2ff,#00d1ff,#00d1ff,#00d0ff,#00d0ff,#00cfff,#00ceff,#00ceff,#00cdff,#00ccff,#00ccff,#00cbff,#00caff,#00c9ff,#00c9ff,#00c8ff,#00c7ff,#00c6ff,#00c5ff,#00c4ff,#09c3ff,#19c2ff,#28c1ff,#39c0ff,#4abfff,#5bbeff,#6dbdff,#80bcff,#93baff,#a7b9ff,#bcb8ff,#d1b6ff,#e8b5ff,#ffb3ff,#ffa2e9,#ff94d6,#ff87c5,#ff7bb6,#ff71a8,#ff679c,#ff5f91,#ff5887,#ff517e,#ff4a76,#ff446f,#ff3f68,#ff3a61,#ff365b,#ff3156,#ff2d50,#ff2a4c,#ff2647,#ff2343,#ff203f,#ff1d3b,#ff1a37,#ff1734,#ff1531,#ff132e,#ff102b,#ff0e28,#ff0c26,#ff0a23,#ff0921,#ff071e,#ff051c,#ff041a,#ff0218,#ff0116,#ff0014,#ff0013,#ff0011,#ff000f,#ff000e,#ff000c,#ff000b,#ff000a,#ff0008,#ff0007,#ff0006,#ff0004,#ff0003,#ff0002,#ff0001,#ff0000,#ff0000,#ff0000,#ff0000,#ff0000,#ff0000,#ff0000)"></i><i style="left:26px;top:342px;width:582px;background:linear-gradient(90deg,#00d0ff,#00cfff,#00cfff,#00ceff,#00cdff,#00cdff,#00ccff,#00ccff,#00cbff,#00caff,#00caff,#00c9ff,#00c8ff,#00c7ff,#00c7ff,#00c6ff,#00c5ff,#00c4ff,#00c3ff,#00c3ff,#00c2ff,#00c1ff,#00c0ff,#00bfff,#00beff,#00bdff,#0ebcff,#1ebbff,#2dbaff,#3db8ff,#4eb7ff,#60b6ff,#71b5ff,#84b3ff,#97b2ff,#abb0ff,#c0afff,#d5adff,#ebacff,#ffa8fc,#ff98e7,#ff8ad4,#ff7ec3,#ff73b5,#ff6aa8,#ff619c,#ff5991,#ff5287,#ff4b7e,#ff4576,#ff406f,#ff3b68,#ff3662,#ff325c,#ff2d56,#ff2a51,#ff264c,#ff2348,#ff2043,#ff1d3f,#ff1a3c,#ff1738,#ff1535,#ff1232,#ff102f,#ff0e2c,#ff0c29,#ff0a26,#ff0824,#ff0621,#ff051f,#ff031d,#ff021b,#ff0019,#ff0017,#ff0015,#ff0013,#ff0012,#ff0010,#ff000f,#ff000d,#ff000c,#ff000a,#ff0009,#ff0008,#ff0006,#ff0005,#ff0004,#ff0003,#ff0002,#ff0001,#ff0000,#ff0000,#ff0000,#ff0000,#ff0000,#ff0000,#ff0000)"></i><i style="left:27px;top:345px;width:582px;background:linear-gradient(90deg,#00caff,#00caff,#00c9ff,#00c9ff,#00c8ff,#00c7ff,#00c7ff,#00c6ff,#00c5ff,#00c4ff,#00c4ff,#00c3ff,#00c2ff,#00c1ff,#00c0ff,#00c0ff,#00bfff,#00beff,#00bdff,#00bcff,#00bbff,#00baff,#00b9ff,#00b8ff,#00b7ff,#05b6ff,#13b4ff,#22b3ff,#32b2ff,#42b1ff,#53afff,#64aeff,#76adff,#88abff,#9baaff,#afa8ff,#c3a7ff,#d8a5ff,#eea3ff,#ff9df9,#ff8fe4,#ff82d2,#ff76c2,#ff6cb4,#ff63a7,#ff5b9b,#ff5391,#ff4c87,#ff467f,#ff4077,#ff3b6f,#ff3668,#ff3262,#ff2e5c,#ff2a57,#ff2652,#ff234d,#ff1f48,#ff1c44,#ff1a40,#ff173c,#ff1439,#ff1235,#ff1032,#ff0e2f,#ff0c2c,#ff0a2a,#ff0827,#ff0625,#ff0422,#ff0320,#ff011e,#ff001c,#ff001a,#ff0018,#ff0016,#ff0014,#ff0013,#ff0011,#ff000f,#ff000e,#ff000c,#ff000b,#ff000a,#ff0008,#ff0007,#ff0006,#ff0005,#ff0003,#ff0002,#ff0001,#ff0000,#ff0000,#ff0000,#ff0000,#ff0000,#ff0000,#ff0000)"></i><i style="left:27px;top:348px;width:588px;background:linear-gradient(90deg,#00c5ff,#00c5ff,#00c4ff,#00c3ff,#00c2ff,#00c2ff,#00c1ff,#00c0ff,#00bfff,#00bfff,#00beff,#00bdff,#00bcff,#00bbff,#00baff,#00b9ff,#00b9ff,#00b8ff,#00b7ff,#00b6ff,#00b5ff,#00b3ff,#00b2ff,#00b1ff,#00b0ff,#07afff,#16aeff,#25acff,#34abff,#44aaff,#55a8ff,#65a7ff,#77a5ff,#89a4ff,#9ca2ff,#afa0ff,#c49fff,#d89dff,#ee9bff,#ff96fa,#ff88e5,#ff7bd3,#ff70c3,#ff67b5,#ff5ea8,#ff569d,#ff4f92,#ff4889,#ff4280,#ff3d78,#ff3771,#ff336a,#ff2e63,#ff2a5e,#ff2758,#ff2353,#ff204e,#ff1d4a,#ff1a45,#ff1741,#ff143e,#ff123a,#ff1037,#ff0d34,#ff0b30,#ff092e,#ff082b,#ff0628,#ff0426,#ff0223,#ff0121,#ff001f,#ff001d,#ff001b,#ff0019,#ff0017,#ff0015,#ff0014,#ff0012,#ff0010,#ff000f,#ff000d,#ff000c,#ff000b,#ff0009,#ff0008,#ff0007,#ff0006,#ff0004,#ff0003,#ff0002,#ff0001,#ff0000,#ff0000,#ff0000,#ff0000,#ff0000,#ff0000,#ff0000)"></i><i style="left:28px;top:351px;width:588px;background:linear-gradient(90deg,#00c0ff,#00bfff,#00bfff,#00beff,#00bdff,#00bcff,#00bbff,#00bbff,#00baff,#00b9ff,#00b8ff,#00b7ff,#00b6ff,#00b5ff,#00b4ff,#00b3ff,#00b2ff,#00b1ff,#00b0ff,#00afff,#00aeff,#00adff,#00acff,#00aaff,#00a9ff,#0ca8ff,#1aa7ff,#29a5ff,#39a4ff,#49a2ff,#59a1ff,#6a9fff,#7b9eff,#8d9cff,#a09aff,#b398ff,#c797ff,#dc95ff,#f193ff,#ff8cf7,#ff7fe3,#ff73d1,#ff69c2,#ff60b4,#ff57a8,#ff509c,#ff4992,#ff4389,#ff3d80,#ff3878,#ff3371,#ff2f6a,#ff2a64,#ff275e,#ff2359,#ff2053,#ff1c4f,#ff1a4a,#ff1746,#ff1442,#ff123e,#ff0f3b,#ff0d37,#ff0b34,#ff0931,#ff072e,#ff052c,#ff0329,#ff0226,#ff0024,#ff0022,#ff0020,#ff001e,#ff001c,#ff001a,#ff0018,#ff0016,#ff0014,#ff0013,#ff0011,#ff0010,#ff000e,#ff000d,#ff000b,#ff000a,#ff0009,#ff0007,#ff0006,#ff0005,#ff0004,#ff0003,#ff0002,#ff0001,#ff0000,#ff0000,#ff0000,#ff0000,#ff0000,#ff0000)"></i><i style="left:29px;top:354px;width:588px;background:linear-gradient(90deg,#00bbff,#00baff,#00b9ff,#00b9ff,#00b8ff,#00b7ff,#00b6ff,#00b5ff,#00b4ff,#00b3ff,#00b2ff,#00b1ff,#00b0ff,#00afff,#00aeff,#00adff,#00acff,#00abff,#00aaff,#00a9ff,#00a8ff,#00a6ff,#00a5ff,#00a4ff,#03a3ff,#11a1ff,#1fa0ff,#2e9eff,#3d9dff,#4d9bff,#5d9aff,#6e98ff,#7f96ff,#9194ff,#a493ff,#b791ff,#cb8fff,#df8dff,#f48bff,#ff83f4,#ff76e1,#ff6bd0,#ff62c1,#ff59b3,#ff51a7,#ff4a9c,#ff4492,#ff3e88,#ff3880,#ff3378,#ff2f71,#ff2b6a,#ff2764,#ff235e,#ff2059,#ff1c54,#ff194f,#ff164b,#ff1447,#ff1143,#ff0f3f,#ff0d3b,#ff0a38,#ff0835,#ff0732,#ff052f,#ff032c,#ff012a,#ff0027,#ff0025,#ff0023,#ff0020,#ff001e,#ff001c,#ff001a,#ff0018,#ff0017,#ff0015,#ff0013,#ff0012,#ff0010,#ff000f,#ff000d,#ff000c,#ff000b,#ff0009,#ff0008,#ff0007,#ff0006,#ff0005,#ff0003,#ff0002,#ff0001,#ff0000,#ff0000,#ff0000,#ff0000,#ff0000,#ff0000)"></i><i style="left:30px;top:357px;width:588px;background:linear-gradient(90deg,#00b6ff,#00b5ff,#00b4ff,#00b3ff,#00b2ff,#00b2ff,#00b1ff,#00b0ff,#00afff,#00aeff,#00adff,#00acff,#00abff,#00aaff,#00a9ff,#00a7ff,#00a6ff,#00a5ff,#00a4ff,#00a3ff,#00a1ff,#00a0ff,#009fff,#009dff,#089cff,#159aff,#2499ff,#3397ff,#4296ff,#5194ff,#6192ff,#7291ff,#838fff,#958dff,#a78bff,#ba89ff,#ce87ff,#e285ff,#f783ff,#ff7af2,#ff6edf,#ff64ce,#ff5bbf,#ff53b2,#ff4ba6,#ff459b,#ff3e91,#ff3988,#ff3480,#ff2f78,#ff2b71,#ff276b,#ff2365,#ff1f5f,#ff1c59,#ff1954,#ff1650,#ff134b,#ff1147,#ff0e43,#ff0c40,#ff0a3c,#ff0839,#ff0636,#ff0433,#ff0230,#ff012d,#ff002a,#ff0028,#ff0026,#ff0023,#ff0021,#ff001f,#ff001d,#ff001b,#ff0019,#ff0017,#ff0016,#ff0014,#ff0012,#ff0011,#ff000f,#ff000e,#ff000d,#ff000b,#ff000a,#ff0009,#ff0008,#ff0006,#ff0005,#ff0004,#ff0003,#ff0002,#ff0001,#ff0000,#ff0000,#ff0000,#ff0000,#ff0000)"></i><i style="left:31px;top:360px;width:588px;background:linear-gradient(90deg,#00b1ff,#00b0ff,#00afff,#00aeff,#00adff,#00acff,#00abff,#00aaff,#00a9ff,#00a8ff,#00a7ff,#00a6ff,#00a5ff,#00a4ff,#00a3ff,#00a2ff,#00a0ff,#009fff,#009eff,#009dff,#009bff,#009aff,#0098ff,#0097ff,#0c96ff,#1a94ff,#2892ff,#3791ff,#468fff,#568dff,#668cff,#768aff,#8788ff,#9986ff,#ab84ff,#be82ff,#d17fff,#e57dff,#fa7bff,#ff71ef,#ff66dd,#ff5dcd,#ff54be,#ff4cb1,#ff45a6,#ff3f9b,#ff3991,#ff3488,#ff2f80,#ff2b78,#ff2771,#ff236b,#ff1f65,#ff1c5f,#ff195a,#ff1655,#ff1350,#ff104c,#ff0e48,#ff0c44,#ff0940,#ff073d,#ff0539,#ff0436,#ff0233,#ff0030,#ff002e,#ff002b,#ff0029,#ff0026,#ff0024,#ff0022,#ff0020,#ff001e,#ff001c,#ff001a,#ff0018,#ff0016,#ff0015,#ff0013,#ff0012,#ff0010,#ff000f,#ff000d,#ff000c,#ff000b,#ff0009,#ff0008,#ff0007,#ff0006,#ff0005,#ff0004,#ff0003,#ff0002,#ff0001,#ff0000,#ff0000,#ff0000,#ff0000)"></i><i style="left:32px;top:363px;width:582px;background:linear-gradient(90deg,#00acff,#00abff,#00aaff,#00a9ff,#00a8ff,#00a7ff,#00a6ff,#00a5ff,#00a4ff,#00a3ff,#00a2ff,#00a1ff,#00a0ff,#009eff,#009dff,#009cff,#009bff,#0099ff,#0098ff,#0097ff,#0095ff,#0094ff,#0092ff,#0391ff,#118fff,#1f8eff,#2d8cff,#3b8aff,#4a88ff,#5a87ff,#6a85ff,#7a83ff,#8b81ff,#9d7fff,#af7dff,#c17aff,#d578ff,#e976ff,#fd73ff,#ff69ed,#ff5fdb,#ff56cb,#ff4ebd,#ff46b1,#ff40a5,#ff3a9b,#ff3491,#ff2f88,#ff2b80,#ff2779,#ff2372,#ff1f6b,#ff1c65,#ff1860,#ff155a,#ff1355,#ff1051,#ff0e4c,#ff0b48,#ff0944,#ff0741,#ff053d,#ff033a,#ff0137,#ff0034,#ff0031,#ff002e,#ff002c,#ff0029,#ff0027,#ff0025,#ff0022,#ff0020,#ff001e,#ff001c,#ff001b,#ff0019,#ff0017,#ff0015,#ff0014,#ff0012,#ff0011,#ff000f,#ff000e,#ff000d,#ff000b,#ff000a,#ff0009,#ff0008,#ff0007,#ff0005,#ff0004,#ff0003,#ff0002,#ff0001,#ff0000,#ff0000,#ff0000)"></i><i style="left:33px;top:366px;width:570px;background:linear-gradient(90deg,#00a7ff,#00a6ff,#00a5ff,#00a4ff,#00a3ff,#00a2ff,#00a1ff,#00a0ff,#009fff,#009eff,#009dff,#009bff,#009aff,#0099ff,#0098ff,#0096ff,#0095ff,#0094ff,#0092ff,#0091ff,#008fff,#008eff,#008cff,#088bff,#1589ff,#2387ff,#3186ff,#4084ff,#4e82ff,#5e80ff,#6e7eff,#7e7cff,#8f7aff,#a078ff,#b276ff,#c573ff,#d871ff,#ec6fff,#ff6cfe,#ff61eb,#ff57d9,#ff4fca,#ff48bc,#ff41b0,#ff3ba4,#ff359a,#ff3091,#ff2b88,#ff2780,#ff2379,#ff1f72,#ff1b6b,#ff1866,#ff1560,#ff125b,#ff1056,#ff0d51,#ff0b4d,#ff0849,#ff0645,#ff0441,#ff023e,#ff013b,#ff0038,#ff0035,#ff0032,#ff002f,#ff002c,#ff002a,#ff0028,#ff0025,#ff0023,#ff0021,#ff001f,#ff001d,#ff001b,#ff001a,#ff0018,#ff0016,#ff0015,#ff0013,#ff0012,#ff0010,#ff000f,#ff000d,#ff000c,#ff000b,#ff000a,#ff0008,#ff0007,#ff0006,#ff0005,#ff0004,#ff0003,#ff0002,#ff0001)"></i><i style="left:34px;top:369px;width:564px;background:linear-gradient(90deg,#00a2ff,#00a1ff,#00a0ff,#009fff,#009eff,#009dff,#009cff,#009bff,#009aff,#0099ff,#0097ff,#0096ff,#0095ff,#0094ff,#0092ff,#0091ff,#008fff,#008eff,#008dff,#008bff,#008aff,#0088ff,#0086ff,#0c85ff,#1a83ff,#2781ff,#357fff,#447dff,#537cff,#627aff,#7278ff,#8275ff,#9373ff,#a471ff,#b66fff,#c86cff,#db6aff,#ef67ff,#ff63fb,#ff59e8,#ff51d8,#ff49c9,#ff42bb,#ff3baf,#ff35a4,#ff309a,#ff2b90,#ff2788,#ff2280,#ff1f79,#ff1b72,#ff186c,#ff1566,#ff1260,#ff0f5b,#ff0d56,#ff0a52,#ff084e,#ff0649,#ff0446,#ff0242,#ff003f,#ff003b,#ff0038,#ff0035,#ff0032,#ff0030,#ff002d,#ff002b,#ff0028,#ff0026,#ff0024,#ff0022,#ff0020,#ff001e,#ff001c,#ff001a,#ff0018,#ff0017,#ff0015,#ff0014,#ff0012,#ff0011,#ff000f,#ff000e,#ff000d,#ff000b,#ff000a,#ff0009,#ff0008,#ff0007,#ff0006,#ff0005,#ff0004,#ff0003)"></i><i style="left:35px;top:372px;width:552px;background:linear-gradient(90deg,#009eff,#009dff,#009bff,#009aff,#0099ff,#0098ff,#0097ff,#0096ff,#0095ff,#0093ff,#0092ff,#0091ff,#0090ff,#008eff,#008dff,#008bff,#008aff,#0088ff,#0087ff,#0085ff,#0084ff,#0082ff,#0480ff,#117fff,#1e7dff,#2b7bff,#3979ff,#4877ff,#5775ff,#6673ff,#7571ff,#866fff,#966dff,#a76aff,#b968ff,#cb66ff,#de63ff,#f160ff,#ff5bf9,#ff52e6,#ff4ad6,#ff42c7,#ff3cba,#ff36ae,#ff30a3,#ff2b99,#ff2790,#ff2288,#ff1e80,#ff1b79,#ff1772,#ff146c,#ff1166,#ff0f61,#ff0c5c,#ff0a57,#ff0752,#ff054e,#ff034a,#ff0146,#ff0043,#ff003f,#ff003c,#ff0039,#ff0036,#ff0033,#ff0030,#ff002e,#ff002b,#ff0029,#ff0027,#ff0025,#ff0022,#ff0020,#ff001e,#ff001d,#ff001b,#ff0019,#ff0017,#ff0016,#ff0014,#ff0013,#ff0011,#ff0010,#ff000f,#ff000d,#ff000c,#ff000b,#ff000a,#ff0008,#ff0007,#ff0006,#ff0005)"></i><i style="left:36px;top:375px;width:546px;background:linear-gradient(90deg,#0099ff,#0098ff,#0097ff,#0096ff,#0094ff,#0093ff,#0092ff,#0091ff,#0090ff,#008eff,#008dff,#008cff,#008aff,#0089ff,#0088ff,#0086ff,#0085ff,#0083ff,#0081ff,#0080ff,#007eff,#007cff,#087bff,#1579ff,#2277ff,#3075ff,#3e73ff,#4c71ff,#5b6fff,#6a6dff,#796bff,#8969ff,#9a66ff,#ab64ff,#bc62ff,#ce5fff,#e15cff,#f45aff,#ff54f6,#ff4be4,#ff43d4,#ff3dc6,#ff36b9,#ff31ad,#ff2ba3,#ff2799,#ff2290,#ff1e88,#ff1b80,#ff1779,#ff1472,#ff116c,#ff0e67,#ff0b61,#ff095c,#ff0757,#ff0453,#ff024f,#ff004b,#ff0047,#ff0043,#ff0040,#ff003d,#ff0039,#ff0036,#ff0034,#ff0031,#ff002e,#ff002c,#ff002a,#ff0027,#ff0025,#ff0023,#ff0021,#ff001f,#ff001d,#ff001c,#ff001a,#ff0018,#ff0017,#ff0015,#ff0013,#ff0012,#ff0011,#ff000f,#ff000e,#ff000d,#ff000b,#ff000a,#ff0009,#ff0008,#ff0007)"></i><i style="left:37px;top:378px;width:534px;background:linear-gradient(90deg,#0094ff,#0093ff,#0092ff,#0091ff,#0090ff,#008fff,#008dff,#008cff,#008bff,#0089ff,#0088ff,#0087ff,#0085ff,#0084ff,#0082ff,#0081ff,#007fff,#007eff,#007cff,#007aff,#0079ff,#0077ff,#0c75ff,#1973ff,#2671ff,#346fff,#426dff,#506bff,#5e69ff,#6d67ff,#7d65ff,#8d62ff,#9d60ff,#ae5eff,#bf5bff,#d158ff,#e456ff,#f753ff,#ff4df4,#ff44e2,#ff3dd3,#ff37c5,#ff31b8,#ff2cad,#ff27a2,#ff2299,#ff1e90,#ff1a88,#ff1780,#ff1379,#ff1073,#ff0e6d,#ff0b67,#ff0861,#ff065c,#ff0458,#ff0253,#ff004f,#ff004b,#ff0047,#ff0044,#ff0040,#ff003d,#ff003a,#ff0037,#ff0034,#ff0032,#ff002f,#ff002d,#ff002a,#ff0028,#ff0026,#ff0024,#ff0022,#ff0020,#ff001e,#ff001c,#ff001a,#ff0019,#ff0017,#ff0016,#ff0014,#ff0013,#ff0011,#ff0010,#ff000f,#ff000d,#ff000c,#ff000b,#ff000a)"></i><i style="left:38px;top:381px;width:522px;background:linear-gradient(90deg,#0090ff,#008fff,#008dff,#008cff,#008bff,#008aff,#0089ff,#0087ff,#0086ff,#0085ff,#0083ff,#0082ff,#0080ff,#007fff,#007dff,#007cff,#007aff,#0078ff,#0077ff,#0075ff,#0073ff,#0471ff,#1170ff,#1d6eff,#2a6cff,#386aff,#4668ff,#5465ff,#6263ff,#7161ff,#805fff,#905cff,#a15aff,#b157ff,#c355ff,#d452ff,#e74fff,#fa4cff,#ff46f1,#ff3ee1,#ff37d1,#ff31c4,#ff2cb7,#ff27ac,#ff22a2,#ff1e98,#ff1a90,#ff1688,#ff1380,#ff1079,#ff0d73,#ff0a6d,#ff0867,#ff0562,#ff035d,#ff0158,#ff0054,#ff0050,#ff004c,#ff0048,#ff0044,#ff0041,#ff003e,#ff003b,#ff0038,#ff0035,#ff0032,#ff0030,#ff002d,#ff002b,#ff0029,#ff0026,#ff0024,#ff0022,#ff0020,#ff001f,#ff001d,#ff001b,#ff0019,#ff0018,#ff0016,#ff0015,#ff0013,#ff0012,#ff0011,#ff000f,#ff000e,#ff000d)"></i><i style="left:39px;top:384px;width:516px;background:linear-gradient(90deg,#008bff,#008aff,#0089ff,#0088ff,#0086ff,#0085ff,#0084ff,#0082ff,#0081ff,#0080ff,#007eff,#007dff,#007bff,#007aff,#0078ff,#0077ff,#0075ff,#0073ff,#0071ff,#0070ff,#006eff,#086cff,#156aff,#2168ff,#2e66ff,#3c64ff,#4962ff,#5760ff,#665dff,#755bff,#8459ff,#9456ff,#a454ff,#b551ff,#c64fff,#d74cff,#ea49ff,#fc46ff,#ff3fef,#ff38df,#ff32d0,#ff2cc3,#ff27b7,#ff22ab,#ff1ea1,#ff1a98,#ff168f,#ff1288,#ff0f80,#ff0c79,#ff0a73,#ff076d,#ff0567,#ff0262,#ff005d,#ff0059,#ff0054,#ff0050,#ff004c,#ff0048,#ff0045,#ff0041,#ff003e,#ff003b,#ff0038,#ff0035,#ff0033,#ff0030,#ff002e,#ff002b,#ff0029,#ff0027,#ff0025,#ff0023,#ff0021,#ff001f,#ff001d,#ff001c,#ff001a,#ff0018,#ff0017,#ff0015,#ff0014,#ff0013,#ff0011,#ff0010,#ff000f)"></i><i style="left:40px;top:387px;width:504px;background:linear-gradient(90deg,#0087ff,#0086ff,#0084ff,#0083ff,#0082ff,#0081ff,#007fff,#007eff,#007cff,#007bff,#0079ff,#0078ff,#0076ff,#0075ff,#0073ff,#0072ff,#0070ff,#006eff,#006cff,#006aff,#0169ff,#0d67ff,#1965ff,#2563ff,#3261ff,#405fff,#4d5cff,#5b5aff,#6a58ff,#7855ff,#8753ff,#9751ff,#a74eff,#b84bff,#c949ff,#da46ff,#ec43ff,#ff40ff,#ff38ed,#ff32dd,#ff2ccf,#ff27c2,#ff22b6,#ff1dab,#ff19a1,#ff1598,#ff128f,#ff0f87,#ff0c80,#ff0979,#ff0673,#ff046d,#ff0268,#ff0062,#ff005e,#ff0059,#ff0055,#ff0050,#ff004d,#ff0049,#ff0045,#ff0042,#ff003f,#ff003c,#ff0039,#ff0036,#ff0033,#ff0031,#ff002e,#ff002c,#ff002a,#ff0028,#ff0026,#ff0024,#ff0022,#ff0020,#ff001e,#ff001c,#ff001b,#ff0019,#ff0018,#ff0016,#ff0015,#ff0013,#ff0012)"></i><i style="left:41px;top:390px;width:498px;background:linear-gradient(90deg,#0083ff,#0081ff,#0080ff,#007fff,#007dff,#007cff,#007bff,#0079ff,#0078ff,#0076ff,#0075ff,#0073ff,#0072ff,#0070ff,#006eff,#006dff,#006bff,#0069ff,#0067ff,#0065ff,#0563ff,#1161ff,#1d5fff,#295dff,#365bff,#4359ff,#5157ff,#5f55ff,#6d52ff,#7c50ff,#8b4dff,#9a4bff,#aa48ff,#bb45ff,#cc43ff,#dd40ff,#ef3dff,#ff39fc,#ff32eb,#ff2cdb,#ff27cd,#ff22c1,#ff1db5,#ff19aa,#ff15a0,#ff1197,#ff0e8f,#ff0b87,#ff0880,#ff067a,#ff0373,#ff016d,#ff0068,#ff0063,#ff005e,#ff0059,#ff0055,#ff0051,#ff004d,#ff0049,#ff0046,#ff0043,#ff003f,#ff003c,#ff0039,#ff0037,#ff0034,#ff0031,#ff002f,#ff002d,#ff002a,#ff0028,#ff0026,#ff0024,#ff0022,#ff0020,#ff001f,#ff001d,#ff001b,#ff001a,#ff0018,#ff0017,#ff0015,#ff0014)"></i><i style="left:42px;top:393px;width:486px;background:linear-gradient(90deg,#007eff,#007dff,#007cff,#007aff,#0079ff,#0078ff,#0076ff,#0075ff,#0073ff,#0072ff,#0070ff,#006eff,#006dff,#006bff,#0069ff,#0068ff,#0066ff,#0064ff,#0062ff,#0060ff,#095eff,#155cff,#215aff,#2d58ff,#3a56ff,#4754ff,#5551ff,#624fff,#714dff,#7f4aff,#8e48ff,#9e45ff,#ad42ff,#be40ff,#cf3dff,#e03aff,#f237ff,#ff33fa,#ff2ce9,#ff27da,#ff21cc,#ff1dbf,#ff18b4,#ff15aa,#ff11a0,#ff0e97,#ff0a8f,#ff0887,#ff0580,#ff027a,#ff0073,#ff006e,#ff0068,#ff0063,#ff005e,#ff005a,#ff0055,#ff0051,#ff004e,#ff004a,#ff0046,#ff0043,#ff0040,#ff003d,#ff003a,#ff0037,#ff0035,#ff0032,#ff0030,#ff002d,#ff002b,#ff0029,#ff0027,#ff0025,#ff0023,#ff0021,#ff001f,#ff001e,#ff001c,#ff001a,#ff0019,#ff0017)"></i><i style="left:43px;top:396px;width:474px;background:linear-gradient(90deg,#007aff,#0079ff,#0077ff,#0076ff,#0075ff,#0073ff,#0072ff,#0070ff,#006fff,#006dff,#006bff,#006aff,#0068ff,#0066ff,#0065ff,#0063ff,#0061ff,#005fff,#005dff,#015bff,#0d59ff,#1957ff,#2555ff,#3153ff,#3e51ff,#4b4fff,#584cff,#664aff,#7447ff,#8345ff,#9242ff,#a140ff,#b13dff,#c13aff,#d137ff,#e334ff,#f431ff,#ff2df8,#ff27e7,#ff21d8,#ff1ccb,#ff18bf,#ff14b3,#ff10a9,#ff0da0,#ff0a97,#ff078f,#ff0487,#ff0280,#ff007a,#ff0074,#ff006e,#ff0069,#ff0063,#ff005f,#ff005a,#ff0056,#ff0052,#ff004e,#ff004a,#ff0047,#ff0044,#ff0040,#ff003d,#ff003b,#ff0038,#ff0035,#ff0033,#ff0030,#ff002e,#ff002c,#ff002a,#ff0027,#ff0025,#ff0024,#ff0022,#ff0020,#ff001e,#ff001d,#ff001b)"></i><i style="left:44px;top:399px;width:468px;background:linear-gradient(90deg,#0076ff,#0075ff,#0073ff,#0072ff,#0070ff,#006fff,#006dff,#006cff,#006aff,#0069ff,#0067ff,#0065ff,#0064ff,#0062ff,#0060ff,#005eff,#005cff,#005aff,#0058ff,#0556ff,#1154ff,#1c52ff,#2850ff,#354eff,#414cff,#4e49ff,#5c47ff,#6945ff,#7842ff,#8640ff,#953dff,#a43aff,#b437ff,#c434ff,#d432ff,#e52eff,#f72bff,#ff27f5,#ff21e5,#ff1cd7,#ff18ca,#ff13be,#ff10b3,#ff0ca8,#ff099f,#ff0697,#ff038f,#ff0187,#ff0080,#ff007a,#ff0074,#ff006e,#ff0069,#ff0064,#ff005f,#ff005b,#ff0056,#ff0052,#ff004e,#ff004b,#ff0047,#ff0044,#ff0041,#ff003e,#ff003b,#ff0038,#ff0036,#ff0033,#ff0031,#ff002e,#ff002c,#ff002a,#ff0028,#ff0026,#ff0024,#ff0022,#ff0020,#ff001f,#ff001d)"></i><i style="left:45px;top:402px;width:456px;background:linear-gradient(90deg,#0072ff,#0070ff,#006fff,#006eff,#006cff,#006bff,#0069ff,#0067ff,#0066ff,#0064ff,#0062ff,#0061ff,#005fff,#005dff,#005bff,#005aff,#0058ff,#0056ff,#0054ff,#0952ff,#1450ff,#204dff,#2c4bff,#3849ff,#4547ff,#5244ff,#5f42ff,#6d3fff,#7b3dff,#893aff,#9838ff,#a735ff,#b732ff,#c72fff,#d72cff,#e829ff,#f926ff,#ff21f3,#ff1ce4,#ff17d5,#ff13c8,#ff0fbd,#ff0cb2,#ff08a8,#ff059f,#ff0396,#ff008e,#ff0087,#ff0080,#ff007a,#ff0074,#ff006e,#ff0069,#ff0064,#ff005f,#ff005b,#ff0057,#ff0053,#ff004f,#ff004b,#ff0048,#ff0045,#ff0041,#ff003e,#ff003c,#ff0039,#ff0036,#ff0034,#ff0031,#ff002f,#ff002d,#ff002b,#ff0029,#ff0027,#ff0025,#ff0023,#ff0021)"></i><i style="left:47px;top:405px;width:444px;background:linear-gradient(90deg,#006dff,#006cff,#006bff,#0069ff,#0068ff,#0066ff,#0064ff,#0063ff,#0061ff,#0060ff,#005eff,#005cff,#005aff,#0058ff,#0057ff,#0055ff,#0053ff,#0051ff,#044fff,#0f4dff,#1a4aff,#2648ff,#3246ff,#3e44ff,#4b41ff,#583fff,#653cff,#733aff,#8037ff,#8f35ff,#9d32ff,#ad2fff,#bc2cff,#cc29ff,#dc26ff,#ed23ff,#ff20ff,#ff1bef,#ff16df,#ff12d2,#ff0ec5,#ff0aba,#ff07af,#ff04a6,#ff019d,#ff0095,#ff008d,#ff0086,#ff007f,#ff0079,#ff0073,#ff006e,#ff0068,#ff0064,#ff005f,#ff005b,#ff0056,#ff0052,#ff004f,#ff004b,#ff0048,#ff0045,#ff0041,#ff003f,#ff003c,#ff0039,#ff0036,#ff0034,#ff0032,#ff002f,#ff002d,#ff002b,#ff0029,#ff0027,#ff0025)"></i><i style="left:48px;top:408px;width:438px;background:linear-gradient(90deg,#0069ff,#0068ff,#0066ff,#0065ff,#0063ff,#0062ff,#0060ff,#005fff,#005dff,#005bff,#0059ff,#0058ff,#0056ff,#0054ff,#0052ff,#0050ff,#004eff,#004cff,#074aff,#1248ff,#1e46ff,#2a44ff,#3541ff,#423fff,#4e3dff,#5b3aff,#6838ff,#7635ff,#8432ff,#9230ff,#a12dff,#b02aff,#bf27ff,#cf24ff,#df21ff,#f01eff,#ff1afd,#ff15ed,#ff11de,#ff0dd0,#ff09c4,#ff06b9,#ff03af,#ff00a5,#ff009d,#ff0094,#ff008d,#ff0086,#ff007f,#ff0079,#ff0073,#ff006e,#ff0069,#ff0064,#ff005f,#ff005b,#ff0057,#ff0053,#ff004f,#ff004c,#ff0048,#ff0045,#ff0042,#ff003f,#ff003c,#ff003a,#ff0037,#ff0034,#ff0032,#ff0030,#ff002e,#ff002b,#ff0029,#ff0027)"></i><i style="left:49px;top:411px;width:426px;background:linear-gradient(90deg,#0065ff,#0064ff,#0062ff,#0061ff,#005fff,#005eff,#005cff,#005aff,#0059ff,#0057ff,#0055ff,#0053ff,#0052ff,#0050ff,#004eff,#004cff,#004aff,#0048ff,#0b45ff,#1643ff,#2241ff,#2d3fff,#393dff,#453aff,#5238ff,#5f35ff,#6c33ff,#7930ff,#872dff,#952bff,#a428ff,#b225ff,#c222ff,#d11fff,#e21cff,#f218ff,#ff15fb,#ff10eb,#ff0cdc,#ff09cf,#ff05c3,#ff02b8,#ff00ae,#ff00a5,#ff009c,#ff0094,#ff008d,#ff0086,#ff007f,#ff0079,#ff0073,#ff006e,#ff0069,#ff0064,#ff0060,#ff005b,#ff0057,#ff0053,#ff0050,#ff004c,#ff0049,#ff0046,#ff0042,#ff0040,#ff003d,#ff003a,#ff0037,#ff0035,#ff0033,#ff0030,#ff002e,#ff002c)"></i><i style="left:50px;top:414px;width:420px;background:linear-gradient(90deg,#0062ff,#0060ff,#005eff,#005dff,#005bff,#005aff,#0058ff,#0056ff,#0055ff,#0053ff,#0051ff,#004fff,#004dff,#004bff,#0049ff,#0047ff,#0045ff,#0443ff,#0f41ff,#1a3fff,#253dff,#313aff,#3d38ff,#4935ff,#5533ff,#6230ff,#6f2eff,#7c2bff,#8a29ff,#9826ff,#a623ff,#b520ff,#c41dff,#d41aff,#e417ff,#f513ff,#ff0ff8,#ff0be9,#ff08db,#ff04ce,#ff01c2,#ff00b7,#ff00ae,#ff00a4,#ff009c,#ff0094,#ff008d,#ff0086,#ff007f,#ff0079,#ff0074,#ff006e,#ff0069,#ff0064,#ff0060,#ff005c,#ff0058,#ff0054,#ff0050,#ff004d,#ff0049,#ff0046,#ff0043,#ff0040,#ff003d,#ff003b,#ff0038,#ff0036,#ff0033,#ff0031,#ff002f)"></i><i style="left:52px;top:417px;width:408px;background:linear-gradient(90deg,#005dff,#005cff,#005aff,#0059ff,#0057ff,#0055ff,#0054ff,#0052ff,#0050ff,#004eff,#004cff,#004bff,#0049ff,#0047ff,#0045ff,#0043ff,#0041ff,#093eff,#143cff,#1f3aff,#2b38ff,#3635ff,#4233ff,#4e30ff,#5b2eff,#672bff,#7429ff,#8226ff,#8f23ff,#9d20ff,#ac1dff,#bb1aff,#ca17ff,#d914ff,#e911ff,#fa0eff,#ff0af4,#ff06e5,#ff03d7,#ff00cb,#ff00bf,#ff00b5,#ff00ab,#ff00a3,#ff009a,#ff0093,#ff008b,#ff0085,#ff007e,#ff0078,#ff0073,#ff006e,#ff0069,#ff0064,#ff005f,#ff005b,#ff0057,#ff0053,#ff0050,#ff004c,#ff0049,#ff0046,#ff0043,#ff0040,#ff003d,#ff003b,#ff0038,#ff0036,#ff0033)"></i><i style="left:53px;top:420px;width:396px;background:linear-gradient(90deg,#005aff,#0058ff,#0056ff,#0055ff,#0053ff,#0051ff,#0050ff,#004eff,#004cff,#004aff,#0048ff,#0046ff,#0044ff,#0042ff,#0040ff,#003eff,#023cff,#0d3aff,#1838ff,#2336ff,#2e33ff,#3a31ff,#452eff,#512cff,#5e29ff,#6a27ff,#7724ff,#8521ff,#921fff,#a01cff,#af19ff,#bd16ff,#cc13ff,#dc0fff,#ec0cff,#fc09ff,#ff05f2,#ff01e3,#ff00d6,#ff00ca,#ff00bf,#ff00b4,#ff00ab,#ff00a2,#ff009a,#ff0092,#ff008b,#ff0085,#ff007e,#ff0078,#ff0073,#ff006e,#ff0069,#ff0064,#ff0060,#ff005c,#ff0058,#ff0054,#ff0050,#ff004d,#ff004a,#ff0046,#ff0043,#ff0041,#ff003e,#ff003b,#ff0039)"></i><i style="left:54px;top:423px;width:390px;background:linear-gradient(90deg,#0056ff,#0054ff,#0053ff,#0051ff,#004fff,#004dff,#004cff,#004aff,#0048ff,#0046ff,#0044ff,#0042ff,#0040ff,#003eff,#003cff,#003aff,#0638ff,#1136ff,#1b34ff,#2631ff,#312fff,#3d2cff,#492aff,#5527ff,#6125ff,#6e22ff,#7a20ff,#881dff,#951aff,#a317ff,#b114ff,#c011ff,#cf0eff,#de0bff,#ee07ff,#fe04ff,#ff00f0,#ff00e2,#ff00d5,#ff00c9,#ff00be,#ff00b4,#ff00aa,#ff00a2,#ff009a,#ff0092,#ff008b,#ff0085,#ff007e,#ff0079,#ff0073,#ff006e,#ff0069,#ff0064,#ff0060,#ff005c,#ff0058,#ff0054,#ff0051,#ff004d,#ff004a,#ff0047,#ff0044,#ff0041,#ff003e,#ff003c)"></i><i style="left:56px;top:426px;width:378px;background:linear-gradient(90deg,#0052ff,#0050ff,#004eff,#004dff,#004bff,#0049ff,#0047ff,#0046ff,#0044ff,#0042ff,#0040ff,#003eff,#003cff,#003aff,#0038ff,#0136ff,#0b33ff,#1631ff,#212fff,#2c2dff,#372aff,#4228ff,#4e25ff,#5a23ff,#6620ff,#731dff,#801bff,#8d18ff,#9a15ff,#a812ff,#b60fff,#c50cff,#d409ff,#e305ff,#f302ff,#ff00fb,#ff00ec,#ff00de,#ff00d1,#ff00c6,#ff00bb,#ff00b1,#ff00a8,#ff00a0,#ff0098,#ff0091,#ff008a,#ff0083,#ff007d,#ff0078,#ff0072,#ff006d,#ff0069,#ff0064,#ff0060,#ff005c,#ff0058,#ff0054,#ff0050,#ff004d,#ff004a,#ff0047,#ff0044,#ff0041)"></i><i style="left:57px;top:429px;width:366px;background:linear-gradient(90deg,#004eff,#004cff,#004bff,#0049ff,#0047ff,#0045ff,#0044ff,#0042ff,#0040ff,#003eff,#003cff,#003aff,#0038ff,#0036ff,#0034ff,#0532ff,#0f2fff,#192dff,#242bff,#2f28ff,#3a26ff,#4523ff,#5121ff,#5d1eff,#691cff,#7619ff,#8316ff,#9013ff,#9d10ff,#ab0dff,#b90aff,#c807ff,#d704ff,#e601ff,#f500ff,#ff00f9,#ff00ea,#ff00dc,#ff00d0,#ff00c5,#ff00ba,#ff00b1,#ff00a8,#ff00a0,#ff0098,#ff0091,#ff008a,#ff0083,#ff007d,#ff0078,#ff0073,#ff006e,#ff0069,#ff0064,#ff0060,#ff005c,#ff0058,#ff0054,#ff0051,#ff004e,#ff004a,#ff0047)"></i><i style="left:58px;top:432px;width:360px;background:linear-gradient(90deg,#004aff,#0049ff,#0047ff,#0045ff,#0043ff,#0042ff,#0040ff,#003eff,#003cff,#003aff,#0038ff,#0036ff,#0034ff,#0032ff,#0030ff,#082eff,#122bff,#1d29ff,#2727ff,#3224ff,#3d22ff,#491fff,#541dff,#601aff,#6c17ff,#7915ff,#8612ff,#930fff,#a00cff,#ae09ff,#bc06ff,#ca03ff,#d900ff,#e800ff,#f800ff,#ff00f7,#ff00e8,#ff00db,#ff00cf,#ff00c4,#ff00ba,#ff00b0,#ff00a7,#ff009f,#ff0098,#ff0090,#ff008a,#ff0083,#ff007e,#ff0078,#ff0073,#ff006e,#ff0069,#ff0065,#ff0060,#ff005c,#ff0058,#ff0055,#ff0051,#ff004e,#ff004b)"></i><i style="left:60px;top:435px;width:348px;background:linear-gradient(90deg,#0046ff,#0045ff,#0043ff,#0041ff,#003fff,#003eff,#003cff,#003aff,#0038ff,#0036ff,#0034ff,#0032ff,#0030ff,#002eff,#032bff,#0d29ff,#1727ff,#2225ff,#2c22ff,#3720ff,#421dff,#4e1bff,#5918ff,#6515ff,#7113ff,#7e10ff,#8b0dff,#980aff,#a507ff,#b304ff,#c101ff,#cf00ff,#de00ff,#ed00ff,#fc00ff,#ff00f2,#ff00e4,#ff00d8,#ff00cc,#ff00c1,#ff00b7,#ff00ae,#ff00a5,#ff009e,#ff0096,#ff008f,#ff0089,#ff0082,#ff007d,#ff0077,#ff0072,#ff006d,#ff0068,#ff0064,#ff0060,#ff005c,#ff0058,#ff0055,#ff0051)"></i><i style="left:61px;top:438px;width:342px;background:linear-gradient(90deg,#0043ff,#0041ff,#003fff,#003eff,#003cff,#003aff,#0038ff,#0036ff,#0034ff,#0032ff,#0030ff,#002eff,#002cff,#002aff,#0728ff,#1125ff,#1b23ff,#2521ff,#301eff,#3a1cff,#4619ff,#5117ff,#5c14ff,#6811ff,#740fff,#810cff,#8d09ff,#9a06ff,#a803ff,#b500ff,#c300ff,#d200ff,#e000ff,#ef00ff,#ff00ff,#ff00f0,#ff00e3,#ff00d6,#ff00cb,#ff00c0,#ff00b7,#ff00ad,#ff00a5,#ff009d,#ff0096,#ff008f,#ff0088,#ff0082,#ff007d,#ff0077,#ff0072,#ff006d,#ff0069,#ff0064,#ff0060,#ff005c,#ff0059,#ff0055)"></i><i style="left:62px;top:441px;width:330px;background:linear-gradient(90deg,#003fff,#003eff,#003cff,#003aff,#0038ff,#0036ff,#0034ff,#0032ff,#0030ff,#002eff,#002cff,#002aff,#0028ff,#0026ff,#0a24ff,#1421ff,#1e1fff,#281dff,#331aff,#3e18ff,#4915ff,#5413ff,#5f10ff,#6b0dff,#770aff,#8408ff,#9005ff,#9d02ff,#aa00ff,#b800ff,#c600ff,#d400ff,#e200ff,#f100ff,#ff00fd,#ff00ef,#ff00e1,#ff00d5,#ff00ca,#ff00bf,#ff00b6,#ff00ad,#ff00a5,#ff009d,#ff0096,#ff008f,#ff0088,#ff0082,#ff007d,#ff0077,#ff0072,#ff006d,#ff0069,#ff0065,#ff0060,#ff005d)"></i><i style="left:64px;top:444px;width:318px;background:linear-gradient(90deg,#003cff,#003aff,#0038ff,#0036ff,#0034ff,#0032ff,#0030ff,#002eff,#002cff,#002aff,#0028ff,#0026ff,#0024ff,#0522ff,#0f1fff,#191dff,#231bff,#2d18ff,#3816ff,#4313ff,#4e11ff,#590eff,#640cff,#7009ff,#7c06ff,#8803ff,#9500ff,#a200ff,#af00ff,#bd00ff,#cb00ff,#d900ff,#e700ff,#f600ff,#ff00f9,#ff00eb,#ff00de,#ff00d2,#ff00c7,#ff00bd,#ff00b4,#ff00ab,#ff00a3,#ff009b,#ff0094,#ff008e,#ff0087,#ff0081,#ff007c,#ff0077,#ff0072,#ff006d,#ff0068,#ff0064)"></i><i style="left:65px;top:447px;width:312px;background:linear-gradient(90deg,#0038ff,#0036ff,#0035ff,#0033ff,#0031ff,#002fff,#002dff,#002bff,#0029ff,#0027ff,#0025ff,#0022ff,#0020ff,#081eff,#121cff,#1c19ff,#2617ff,#3015ff,#3b12ff,#4610ff,#510dff,#5c0aff,#6708ff,#7305ff,#7f02ff,#8b00ff,#9800ff,#a500ff,#b200ff,#bf00ff,#cd00ff,#db00ff,#e900ff,#f800ff,#ff00f7,#ff00e9,#ff00dc,#ff00d1,#ff00c6,#ff00bc,#ff00b3,#ff00ab,#ff00a3,#ff009b,#ff0094,#ff008d,#ff0087,#ff0081,#ff007c,#ff0077,#ff0072,#ff006d,#ff0069)"></i><i style="left:67px;top:450px;width:300px;background:linear-gradient(90deg,#0034ff,#0033ff,#0031ff,#002fff,#002dff,#002bff,#0029ff,#0027ff,#0025ff,#0023ff,#0021ff,#001eff,#041cff,#0d1aff,#1718ff,#2115ff,#2b13ff,#3510ff,#400eff,#4b0bff,#5509ff,#6106ff,#6c03ff,#7800ff,#8400ff,#9000ff,#9d00ff,#a900ff,#b600ff,#c400ff,#d200ff,#e000ff,#ee00ff,#fd00ff,#ff00f3,#ff00e5,#ff00d9,#ff00ce,#ff00c4,#ff00ba,#ff00b1,#ff00a9,#ff00a1,#ff009a,#ff0093,#ff008c,#ff0086,#ff0081,#ff007b,#ff0076,#ff0071)"></i><i style="left:68px;top:453px;width:288px;background:linear-gradient(90deg,#0031ff,#002fff,#002dff,#002bff,#0029ff,#0028ff,#0026ff,#0023ff,#0021ff,#001fff,#001dff,#001bff,#0719ff,#1016ff,#1a14ff,#2412ff,#2e0fff,#380dff,#430aff,#4d08ff,#5805ff,#6402ff,#6f00ff,#7b00ff,#8700ff,#9300ff,#9f00ff,#ac00ff,#b900ff,#c600ff,#d400ff,#e200ff,#f000ff,#ff00ff,#ff00f1,#ff00e4,#ff00d8,#ff00cd,#ff00c3,#ff00b9,#ff00b0,#ff00a8,#ff00a1,#ff0099,#ff0093,#ff008c,#ff0086,#ff0081,#ff007b)"></i><i style="left:70px;top:456px;width:276px;background:linear-gradient(90deg,#002dff,#002cff,#002aff,#0028ff,#0026ff,#0024ff,#0022ff,#0020ff,#001eff,#001bff,#0019ff,#0217ff,#0c15ff,#1512ff,#1f10ff,#290eff,#330bff,#3d09ff,#4806ff,#5203ff,#5d01ff,#6800ff,#7400ff,#7f00ff,#8b00ff,#9700ff,#a400ff,#b000ff,#bd00ff,#cb00ff,#d800ff,#e600ff,#f500ff,#ff00fb,#ff00ed,#ff00e0,#ff00d5,#ff00ca,#ff00c0,#ff00b7,#ff00ae,#ff00a6,#ff009f,#ff0098,#ff0091,#ff008b,#ff0085)"></i><i style="left:72px;top:459px;width:270px;background:linear-gradient(90deg,#002aff,#0028ff,#0026ff,#0024ff,#0022ff,#0020ff,#001eff,#001cff,#001aff,#0018ff,#0015ff,#0713ff,#1011ff,#1a0eff,#240cff,#2d0aff,#3707ff,#4205ff,#4c02ff,#5700ff,#6200ff,#6d00ff,#7800ff,#8400ff,#9000ff,#9c00ff,#a800ff,#b500ff,#c200ff,#cf00ff,#dd00ff,#eb00ff,#f900ff,#ff00f7,#ff00e9,#ff00dd,#ff00d2,#ff00c8,#ff00be,#ff00b5,#ff00ad,#ff00a5,#ff009d,#ff0097,#ff0090,#ff008a)"></i><i style="left:73px;top:462px;width:258px;background:linear-gradient(90deg,#0027ff,#0025ff,#0023ff,#0021ff,#001fff,#001dff,#001bff,#0018ff,#0016ff,#0014ff,#0112ff,#0a10ff,#140dff,#1d0bff,#2708ff,#3006ff,#3a03ff,#4501ff,#4f00ff,#5a00ff,#6500ff,#7000ff,#7b00ff,#8700ff,#9200ff,#9e00ff,#ab00ff,#b700ff,#c400ff,#d200ff,#df00ff,#ed00ff,#fb00ff,#ff00f5,#ff00e8,#ff00dc,#ff00d1,#ff00c7,#ff00bd,#ff00b4,#ff00ac,#ff00a4,#ff009d,#ff0096)"></i><i style="left:75px;top:465px;width:246px;background:linear-gradient(90deg,#0023ff,#0021ff,#001fff,#001dff,#001bff,#0019ff,#0017ff,#0015ff,#0013ff,#0010ff,#060eff,#0f0cff,#1809ff,#2207ff,#2b05ff,#3502ff,#3f00ff,#4900ff,#5400ff,#5e00ff,#6900ff,#7400ff,#8000ff,#8b00ff,#9700ff,#a300ff,#af00ff,#bc00ff,#c900ff,#d600ff,#e400ff,#f100ff,#ff00ff,#ff00f1,#ff00e4,#ff00d9,#ff00ce,#ff00c4,#ff00bb,#ff00b2,#ff00aa,#ff00a3)"></i><i style="left:76px;top:468px;width:240px;background:linear-gradient(90deg,#0020ff,#001eff,#001cff,#001aff,#0018ff,#0016ff,#0014ff,#0011ff,#000fff,#000dff,#090bff,#1208ff,#1b06ff,#2504ff,#2e01ff,#3800ff,#4200ff,#4c00ff,#5600ff,#6100ff,#6c00ff,#7700ff,#8200ff,#8e00ff,#9900ff,#a500ff,#b200ff,#be00ff,#cb00ff,#d800ff,#e600ff,#f300ff,#ff00fd,#ff00ef,#ff00e3,#ff00d8,#ff00cd,#ff00c3,#ff00ba,#ff00b2,#ff00aa)"></i><i style="left:78px;top:471px;width:228px;background:linear-gradient(90deg,#001cff,#001aff,#0018ff,#0016ff,#0014ff,#0012ff,#0010ff,#000eff,#000cff,#0509ff,#0d07ff,#1705ff,#2002ff,#2900ff,#3300ff,#3d00ff,#4600ff,#5100ff,#5b00ff,#6600ff,#7000ff,#7b00ff,#8700ff,#9200ff,#9e00ff,#aa00ff,#b600ff,#c300ff,#cf00ff,#dd00ff,#ea00ff,#f800ff,#ff00f9,#ff00ec,#ff00e0,#ff00d5,#ff00ca,#ff00c1,#ff00b8)"></i><i style="left:80px;top:474px;width:216px;background:linear-gradient(90deg,#0019ff,#0017ff,#0015ff,#0013ff,#0011ff,#000fff,#000cff,#000aff,#0008ff,#0906ff,#1203ff,#1b01ff,#2400ff,#2e00ff,#3700ff,#4100ff,#4b00ff,#5500ff,#5f00ff,#6a00ff,#7500ff,#8000ff,#8b00ff,#9700ff,#a200ff,#ae00ff,#ba00ff,#c700ff,#d400ff,#e100ff,#ee00ff,#fc00ff,#ff00f5,#ff00e8,#ff00dd,#ff00d2,#ff00c8)"></i><i style="left:82px;top:477px;width:210px;background:linear-gradient(90deg,#0015ff,#0013ff,#0011ff,#000fff,#000dff,#000bff,#0009ff,#0007ff,#0504ff,#0d02ff,#1600ff,#1f00ff,#2900ff,#3200ff,#3c00ff,#4500ff,#4f00ff,#5a00ff,#6400ff,#6e00ff,#7900ff,#8400ff,#8f00ff,#9b00ff,#a700ff,#b300ff,#bf00ff,#cb00ff,#d800ff,#e500ff,#f200ff,#ff00fe,#ff00f1,#ff00e5,#ff00da,#ff00cf)"></i><i style="left:84px;top:480px;width:198px;background:linear-gradient(90deg,#0012ff,#0010ff,#000eff,#000cff,#000aff,#0008ff,#0005ff,#0103ff,#0901ff,#1200ff,#1b00ff,#2400ff,#2d00ff,#3600ff,#4000ff,#4a00ff,#5400ff,#5e00ff,#6800ff,#7300ff,#7e00ff,#8900ff,#9400ff,#9f00ff,#ab00ff,#b700ff,#c300ff,#cf00ff,#dc00ff,#e900ff,#f700ff,#ff00fa,#ff00ed,#ff00e2)"></i><i style="left:86px;top:483px;width:186px;background:linear-gradient(90deg,#000fff,#000dff,#000bff,#0008ff,#0006ff,#0004ff,#0002ff,#0500ff,#0e00ff,#1600ff,#1f00ff,#2800ff,#3100ff,#3b00ff,#4400ff,#4e00ff,#5800ff,#6200ff,#6d00ff,#7700ff,#8200ff,#8d00ff,#9800ff,#a300ff,#af00ff,#bb00ff,#c700ff,#d400ff,#e000ff,#ed00ff,#fb00ff,#ff00f6)"></i><i style="left:88px;top:486px;width:174px;background:linear-gradient(90deg,#000bff,#0009ff,#0007ff,#0005ff,#0003ff,#0001ff,#0100ff,#0900ff,#1200ff,#1b00ff,#2300ff,#2d00ff,#3600ff,#3f00ff,#4900ff,#5200ff,#5c00ff,#6700ff,#7100ff,#7b00ff,#8600ff,#9100ff,#9c00ff,#a800ff,#b300ff,#bf00ff,#cb00ff,#d800ff,#e500ff,#f100ff)"></i><i style="left:90px;top:489px;width:168px;background:linear-gradient(90deg,#0008ff,#0006ff,#0004ff,#0002ff,#0000ff,#0000ff,#0500ff,#0e00ff,#1600ff,#1f00ff,#2800ff,#3100ff,#3a00ff,#4300ff,#4d00ff,#5700ff,#6100ff,#6b00ff,#7500ff,#8000ff,#8a00ff,#9500ff,#a100ff,#ac00ff,#b800ff,#c300ff,#d000ff,#dc00ff,#e900ff)"></i><i style="left:92px;top:492px;width:156px;background:linear-gradient(90deg,#0005ff,#0003ff,#0000ff,#0000ff,#0000ff,#0100ff,#0900ff,#1200ff,#1a00ff,#2300ff,#2c00ff,#3500ff,#3e00ff,#4800ff,#5100ff,#5b00ff,#6500ff,#6f00ff,#7900ff,#8400ff,#8f00ff,#9a00ff,#a500ff,#b000ff,#bc00ff,#c800ff,#d400ff)"></i><i style="left:94px;top:495px;width:144px;background:linear-gradient(90deg,#0001ff,#0000ff,#0000ff,#0000ff,#0000ff,#0500ff,#0e00ff,#1600ff,#1f00ff,#2700ff,#3000ff,#3900ff,#4200ff,#4c00ff,#5500ff,#5f00ff,#6900ff,#7300ff,#7d00ff,#8800ff,#9300ff,#9e00ff,#a900ff,#b400ff,#c000ff)"></i><i style="left:97px;top:498px;width:132px;background:linear-gradient(90deg,#0000ff,#0000ff,#0000ff,#0000ff,#0300ff,#0b00ff,#1300ff,#1c00ff,#2400ff,#2d00ff,#3600ff,#3f00ff,#4800ff,#5200ff,#5b00ff,#6500ff,#6f00ff,#7900ff,#8300ff,#8e00ff,#9900ff,#a400ff,#af00ff)"></i><i style="left:99px;top:501px;width:120px;background:linear-gradient(90deg,#0000ff,#0000ff,#0000ff,#0000ff,#0700ff,#0f00ff,#1700ff,#2000ff,#2800ff,#3100ff,#3a00ff,#4300ff,#4c00ff,#5600ff,#5f00ff,#6900ff,#7300ff,#7d00ff,#8700ff,#9200ff,#9d00ff)"></i><i style="left:103px;top:504px;width:108px;background:linear-gradient(90deg,#0000ff,#0000ff,#0000ff,#0600ff,#0e00ff,#1600ff,#1e00ff,#2700ff,#2f00ff,#3800ff,#4100ff,#4a00ff,#5400ff,#5d00ff,#6700ff,#7000ff,#7a00ff,#8500ff,#8f00ff)"></i><i style="left:106px;top:507px;width:96px;background:linear-gradient(90deg,#0000ff,#0000ff,#0300ff,#0b00ff,#1300ff,#1b00ff,#2400ff,#2c00ff,#3500ff,#3e00ff,#4700ff,#5000ff,#5900ff,#6300ff,#6c00ff,#7600ff,#8000ff)"></i><i style="left:110px;top:510px;width:84px;background:linear-gradient(90deg,#0000ff,#0200ff,#0a00ff,#1200ff,#1a00ff,#2200ff,#2b00ff,#3300ff,#3c00ff,#4500ff,#4e00ff,#5700ff,#6000ff,#6a00ff,#7400ff)"></i><i style="left:114px;top:513px;width:72px;background:linear-gradient(90deg,#0100ff,#0800ff,#1000ff,#1800ff,#2100ff,#2900ff,#3100ff,#3a00ff,#4300ff,#4c00ff,#5500ff,#5e00ff,#6700ff)"></i><i style="left:119px;top:516px;width:60px;background:linear-gradient(90deg,#0900ff,#1000ff,#1800ff,#2000ff,#2900ff,#3100ff,#3a00ff,#4200ff,#4b00ff,#5400ff,#5d00ff)"></i><i style="left:123px;top:519px;width:48px;background:linear-gradient(90deg,#0f00ff,#1700ff,#1f00ff,#2700ff,#2f00ff,#3800ff,#4000ff,#4900ff,#5200ff)"></i><div class="a" style="left:0;top:0;width:100%;height:100%;background:rgba(0,0,0,0.40);clip-path:path(evenodd,'M-5 -5H700V540H-5ZM526.3 317.7L247.2 149.7L124.1 485.7Z')"></div></div><svg width="1920" height="1039" viewBox="0 0 1920 1039"><g stroke="#c4c4c4" stroke-width="1.6"><path d="M1150.9 670.0v6.6"/><path d="M1150.9 670.0h-6.6"/><path d="M1233.0 670.0v6.6"/><path d="M1150.9 607.8h-6.6"/><path d="M1315.1 670.0v6.6"/><path d="M1150.9 545.6h-6.6"/><path d="M1397.2 670.0v6.6"/><path d="M1150.9 483.3h-6.6"/><path d="M1479.3 670.0v6.6"/><path d="M1150.9 421.1h-6.6"/><path d="M1561.4 670.0v6.6"/><path d="M1150.9 358.9h-6.6"/><path d="M1643.5 670.0v6.6"/><path d="M1150.9 296.7h-6.6"/><path d="M1725.6 670.0v6.6"/><path d="M1150.9 234.5h-6.6"/><path d="M1807.7 670.0v6.6"/><path d="M1150.9 172.2h-6.6"/></g></svg><div class="t" style="left:1146.1px;top:681.0px;font-size:15.3px;color:#dcdcdc;">0</div><div class="t" style="left:1135.8px;top:662.8px;font-size:15.3px;color:#dcdcdc;">0</div><div class="t" style="left:1221.9px;top:681.0px;font-size:15.3px;color:#dcdcdc;">0,1</div><div class="t" style="left:1123.0px;top:600.6px;font-size:15.3px;color:#dcdcdc;">0,1</div><div class="t" style="left:1304.0px;top:681.0px;font-size:15.3px;color:#dcdcdc;">0,2</div><div class="t" style="left:1123.0px;top:538.4px;font-size:15.3px;color:#dcdcdc;">0,2</div><div class="t" style="left:1386.1px;top:681.0px;font-size:15.3px;color:#dcdcdc;">0,3</div><div class="t" style="left:1123.0px;top:476.2px;font-size:15.3px;color:#dcdcdc;">0,3</div><div class="t" style="left:1468.2px;top:681.0px;font-size:15.3px;color:#dcdcdc;">0,4</div><div class="t" style="left:1123.0px;top:414.0px;font-size:15.3px;color:#dcdcdc;">0,4</div><div class="t" style="left:1550.3px;top:681.0px;font-size:15.3px;color:#dcdcdc;">0,5</div><div class="t" style="left:1123.0px;top:351.7px;font-size:15.3px;color:#dcdcdc;">0,5</div><div class="t" style="left:1632.4px;top:681.0px;font-size:15.3px;color:#dcdcdc;">0,6</div><div class="t" style="left:1123.0px;top:289.5px;font-size:15.3px;color:#dcdcdc;">0,6</div><div class="t" style="left:1714.5px;top:681.0px;font-size:15.3px;color:#dcdcdc;">0,7</div><div class="t" style="left:1123.0px;top:227.3px;font-size:15.3px;color:#dcdcdc;">0,7</div><div class="t" style="left:1796.6px;top:681.0px;font-size:15.3px;color:#dcdcdc;">0,8</div><div class="t" style="left:1123.0px;top:165.1px;font-size:15.3px;color:#dcdcdc;">0,8</div><svg width="1920" height="1039" viewBox="0 0 1920 1039"><rect x="1399.5" y="457.2" width="14.6" height="14.6" fill="none" stroke="#000" stroke-width="2.2"/><rect x="1471.3" y="435.2" width="14.8" height="14.8" fill="none" stroke="#fff" stroke-opacity=".88" stroke-width="1.9"/><rect x="1454.3" y="440.2" width="14.8" height="14.8" fill="none" stroke="#fff" stroke-opacity=".88" stroke-width="1.9"/><rect x="1347.6" y="496.5" width="14.8" height="14.8" fill="none" stroke="#fff" stroke-opacity=".88" stroke-width="1.9"/><rect x="1421.4" y="396.1" width="14.8" height="14.8" fill="none" stroke="#fff" stroke-opacity=".88" stroke-width="1.9"/><rect x="1362.8" y="504.7" width="14.8" height="14.8" fill="none" stroke="#fff" stroke-opacity=".88" stroke-width="1.9"/><rect x="1358.3" y="436.8" width="14.8" height="14.8" fill="none" stroke="#fff" stroke-opacity=".88" stroke-width="1.9"/><rect x="1563.2" y="409.0" width="14.8" height="14.8" fill="none" stroke="#fff" stroke-opacity=".88" stroke-width="1.9"/><rect x="1320.7" y="543.6" width="14.8" height="14.8" fill="none" stroke="#fff" stroke-opacity=".88" stroke-width="1.9"/><rect x="1521.2" y="467.1" width="14.8" height="14.8" fill="none" stroke="#fff" stroke-opacity=".88" stroke-width="1.9"/><rect x="1381.3" y="524.6" width="14.8" height="14.8" fill="none" stroke="#fff" stroke-opacity=".88" stroke-width="1.9"/><rect x="1451.0" y="353.8" width="14.8" height="14.8" fill="none" stroke="#fff" stroke-opacity=".88" stroke-width="1.9"/><rect x="1531.4" y="387.4" width="14.8" height="14.8" fill="none" stroke="#fff" stroke-opacity=".88" stroke-width="1.9"/><rect x="1300.6" y="575.3" width="14.8" height="14.8" fill="none" stroke="#fff" stroke-opacity=".88" stroke-width="1.9"/><rect x="1392.7" y="355.4" width="14.8" height="14.8" fill="none" stroke="#fff" stroke-opacity=".88" stroke-width="1.9"/><rect x="1584.0" y="463.9" width="14.8" height="14.8" fill="none" stroke="#fff" stroke-opacity=".88" stroke-width="1.9"/><rect x="1509.9" y="365.0" width="14.8" height="14.8" fill="none" stroke="#fff" stroke-opacity=".88" stroke-width="1.9"/><rect x="1448.9" y="507.5" width="14.8" height="14.8" fill="none" stroke="#fff" stroke-opacity=".88" stroke-width="1.9"/><rect x="1313.7" y="493.9" width="14.8" height="14.8" fill="none" stroke="#fff" stroke-opacity=".88" stroke-width="1.9"/><rect x="1668.1" y="456.5" width="14.8" height="14.8" fill="none" stroke="#fff" stroke-opacity=".88" stroke-width="1.9"/><rect x="1389.0" y="288.5" width="14.8" height="14.8" fill="none" stroke="#fff" stroke-opacity=".88" stroke-width="1.9"/><rect x="1265.9" y="624.5" width="14.8" height="14.8" fill="none" stroke="#fff" stroke-opacity=".88" stroke-width="1.9"/><rect x="1327.1" y="457.3" width="14.8" height="14.8" fill="none" stroke="#fff" stroke-opacity=".88" stroke-width="1.9"/><rect x="1406.2" y="565.9" width="14.8" height="14.8" fill="none" stroke="#fff" stroke-opacity=".88" stroke-width="1.9"/><rect x="1486.9" y="347.4" width="14.8" height="14.8" fill="none" stroke="#fff" stroke-opacity=".88" stroke-width="1.9"/><circle cx="1376.8" cy="494.5" r="4.8" fill="#000"/><circle cx="1403.1" cy="464.7" r="4.3" fill="#a9a9a9" stroke="#1c1c1c" stroke-width="1.3"/><circle cx="1402.5" cy="465.1" r="4.3" fill="#a4a4a4" stroke="#1c1c1c" stroke-width="1.3"/><circle cx="1402.4" cy="465.2" r="4.3" fill="#9e9e9e" stroke="#1c1c1c" stroke-width="1.3"/><circle cx="1402.4" cy="465.1" r="4.3" fill="#989898" stroke="#1c1c1c" stroke-width="1.3"/><circle cx="1402.4" cy="464.9" r="4.3" fill="#909090" stroke="#1c1c1c" stroke-width="1.3"/><circle cx="1493.5" cy="440.5" r="4.3" fill="#6e5a54" stroke="#1c1c1c" stroke-width="1.3"/><circle cx="1463.4" cy="445.3" r="4.3" fill="#b09a90" stroke="#1c1c1c" stroke-width="1.3"/><circle cx="1342.1" cy="510.5" r="4.3" fill="#6d7f96" stroke="#1c1c1c" stroke-width="1.3"/><circle cx="1426.9" cy="392.9" r="4.3" fill="#5f6b55" stroke="#1c1c1c" stroke-width="1.3"/><circle cx="1361.5" cy="517.0" r="4.3" fill="#8684a2" stroke="#1c1c1c" stroke-width="1.3"/><circle cx="1355.4" cy="444.8" r="4.3" fill="#86aaa2" stroke="#1c1c1c" stroke-width="1.3"/><circle cx="1583.1" cy="417.6" r="4.3" fill="#c08a58" stroke="#1c1c1c" stroke-width="1.3"/><circle cx="1312.1" cy="561.1" r="4.3" fill="#5d659a" stroke="#1c1c1c" stroke-width="1.3"/><circle cx="1546.1" cy="473.5" r="4.3" fill="#b0666c" stroke="#1c1c1c" stroke-width="1.3"/><circle cx="1380.3" cy="540.5" r="4.3" fill="#66506e" stroke="#1c1c1c" stroke-width="1.3"/><circle cx="1459.9" cy="354.7" r="4.3" fill="#9aac62" stroke="#1c1c1c" stroke-width="1.3"/><circle cx="1543.7" cy="392.0" r="4.3" fill="#cfa052" stroke="#1c1c1c" stroke-width="1.3"/><circle cx="1294.9" cy="592.5" r="4.3" fill="#454a8c" stroke="#1c1c1c" stroke-width="1.3"/><circle cx="1393.0" cy="348.4" r="4.3" fill="#5b9060" stroke="#1c1c1c" stroke-width="1.3"/><circle cx="1615.1" cy="468.8" r="4.3" fill="#a84a4e" stroke="#1c1c1c" stroke-width="1.3"/><circle cx="1517.8" cy="371.5" r="4.3" fill="#d6bc44" stroke="#1c1c1c" stroke-width="1.3"/><circle cx="1459.5" cy="519.5" r="4.3" fill="#a8608c" stroke="#1c1c1c" stroke-width="1.3"/><circle cx="1313.9" cy="506.0" r="4.3" fill="#2a8aa0" stroke="#1c1c1c" stroke-width="1.3"/><circle cx="1679.1" cy="462.9" r="4.3" fill="#fc0808" stroke="#1c1c1c" stroke-width="1.3"/><circle cx="1389.3" cy="292.4" r="4.3" fill="#22f022" stroke="#1c1c1c" stroke-width="1.3"/><circle cx="1270.7" cy="629.1" r="4.3" fill="#0808fc" stroke="#1c1c1c" stroke-width="1.3"/><circle cx="1326.9" cy="464.2" r="4.3" fill="#10f0fc" stroke="#1c1c1c" stroke-width="1.3"/><circle cx="1410.7" cy="570.6" r="4.3" fill="#fc10fc" stroke="#1c1c1c" stroke-width="1.3"/><circle cx="1494.2" cy="354.2" r="4.3" fill="#f0f020" stroke="#1c1c1c" stroke-width="1.3"/></svg><div class="a" id="ins" style="left:1600.6px;top:153.8px;width:234px;height:197px;overflow:hidden"><i style="left:0;top:0px;width:240px;background:linear-gradient(90deg,#b1ff00,#b5ff00,#baff00,#bfff00,#c4ff00,#c9ff00,#ceff00,#d3ff00,#d8ff00,#ddff00,#e2ff00,#e7ff00,#ecff00,#f2ff00,#f7ff00,#fcff00,#fffc00,#fff700,#fff200,#ffed00,#ffe800)"></i><i style="left:0;top:6px;width:240px;background:linear-gradient(90deg,#b2ff00,#b7ff00,#bcff00,#c1ff00,#c6ff00,#caff00,#cfff00,#d4ff00,#daff00,#dfff00,#e4ff00,#e9ff00,#eeff00,#f4ff00,#f9ff00,#feff00,#fffa00,#fff500,#fff000,#ffeb00,#ffe700)"></i><i style="left:0;top:12px;width:240px;background:linear-gradient(90deg,#b4ff00,#b8ff00,#bdff00,#c2ff00,#c7ff00,#ccff00,#d1ff00,#d6ff00,#dbff00,#e0ff00,#e6ff00,#ebff00,#f0ff00,#f5ff00,#fbff00,#fffe00,#fff800,#fff300,#ffee00,#ffe900,#ffe500)"></i><i style="left:0;top:18px;width:240px;background:linear-gradient(90deg,#b5ff00,#baff00,#bfff00,#c4ff00,#c9ff00,#ceff00,#d3ff00,#d8ff00,#ddff00,#e2ff00,#e7ff00,#edff00,#f2ff00,#f7ff00,#fdff00,#fffc00,#fff700,#fff100,#ffec00,#ffe800,#ffe300)"></i><i style="left:0;top:24px;width:240px;background:linear-gradient(90deg,#b7ff01,#bcff00,#c0ff00,#c5ff00,#caff00,#cfff00,#d4ff00,#daff00,#dfff00,#e4ff00,#e9ff00,#efff00,#f4ff00,#f9ff00,#ffff00,#fffa00,#fff500,#fff000,#ffeb00,#ffe600,#ffe100)"></i><i style="left:0;top:30px;width:240px;background:linear-gradient(90deg,#b8ff02,#bdff01,#c2ff00,#c7ff00,#ccff00,#d1ff00,#d6ff00,#dbff00,#e1ff00,#e6ff00,#ebff00,#f0ff00,#f6ff00,#fbff00,#fffd00,#fff800,#fff300,#ffee00,#ffe900,#ffe400,#ffe000)"></i><i style="left:0;top:36px;width:240px;background:linear-gradient(90deg,#baff03,#bfff01,#c4ff00,#c9ff00,#ceff00,#d3ff00,#d8ff00,#ddff00,#e2ff00,#e8ff00,#edff00,#f2ff00,#f8ff00,#fdff00,#fffb00,#fff600,#fff100,#ffec00,#ffe700,#ffe200,#ffde00)"></i><i style="left:0;top:42px;width:240px;background:linear-gradient(90deg,#bbff03,#c0ff02,#c5ff01,#caff00,#cfff00,#d4ff00,#daff00,#dfff00,#e4ff00,#e9ff00,#efff00,#f4ff00,#faff00,#ffff00,#fff900,#fff400,#ffef00,#ffea00,#ffe500,#ffe100,#ffdc00)"></i><i style="left:0;top:48px;width:240px;background:linear-gradient(90deg,#bdff04,#c2ff03,#c7ff02,#ccff01,#d1ff00,#d6ff00,#dbff00,#e1ff00,#e6ff00,#ebff00,#f1ff00,#f6ff00,#fcff00,#fffd00,#fff700,#fff200,#ffed00,#ffe800,#ffe400,#ffdf00,#ffdb00)"></i><i style="left:0;top:54px;width:240px;background:linear-gradient(90deg,#beff05,#c3ff04,#c8ff03,#ceff02,#d3ff01,#d8ff00,#ddff00,#e2ff00,#e8ff00,#edff00,#f3ff00,#f8ff00,#feff00,#fffb00,#fff600,#fff000,#ffeb00,#ffe700,#ffe200,#ffdd00,#ffd900)"></i><i style="left:0;top:60px;width:240px;background:linear-gradient(90deg,#c0ff06,#c5ff05,#caff04,#cfff03,#d4ff01,#daff00,#dfff00,#e4ff00,#eaff00,#efff00,#f5ff00,#faff00,#fffe00,#fff900,#fff400,#ffef00,#ffea00,#ffe500,#ffe000,#ffdc00,#ffd700)"></i><i style="left:0;top:66px;width:240px;background:linear-gradient(90deg,#c2ff07,#c7ff06,#ccff05,#d1ff03,#d6ff02,#dbff01,#e1ff00,#e6ff00,#ecff00,#f1ff00,#f6ff00,#fcff00,#fffc00,#fff700,#fff200,#ffed00,#ffe800,#ffe300,#ffde00,#ffda00,#ffd600)"></i><i style="left:0;top:72px;width:240px;background:linear-gradient(90deg,#c3ff08,#c8ff07,#ceff05,#d3ff04,#d8ff03,#ddff02,#e3ff01,#e8ff00,#edff00,#f3ff00,#f8ff00,#feff00,#fffa00,#fff500,#fff000,#ffeb00,#ffe600,#ffe100,#ffdd00,#ffd800,#ffd400)"></i><i style="left:0;top:78px;width:240px;background:linear-gradient(90deg,#c5ff09,#caff07,#cfff06,#d4ff05,#daff04,#dfff03,#e4ff02,#eaff01,#efff00,#f5ff00,#faff00,#fffe00,#fff800,#fff300,#ffee00,#ffe900,#ffe400,#ffdf00,#ffdb00,#ffd700,#ffd200)"></i><i style="left:0;top:84px;width:240px;background:linear-gradient(90deg,#c7ff09,#ccff08,#d1ff07,#d6ff06,#dcff05,#e1ff04,#e6ff03,#ecff02,#f1ff00,#f7ff00,#fcff00,#fffc00,#fff600,#fff100,#ffec00,#ffe700,#ffe200,#ffde00,#ffd900,#ffd500,#ffd100)"></i><i style="left:0;top:90px;width:240px;background:linear-gradient(90deg,#c8ff0a,#cdff09,#d3ff08,#d8ff07,#ddff06,#e3ff05,#e8ff04,#eeff02,#f3ff01,#f9ff00,#feff00,#fffa00,#fff500,#ffef00,#ffea00,#ffe500,#ffe100,#ffdc00,#ffd800,#ffd300,#ffcf00)"></i><i style="left:0;top:96px;width:240px;background:linear-gradient(90deg,#caff0b,#cfff0a,#d4ff09,#daff08,#dfff07,#e5ff06,#eaff04,#f0ff03,#f5ff02,#fbff01,#fffd00,#fff800,#fff300,#ffed00,#ffe800,#ffe400,#ffdf00,#ffda00,#ffd600,#ffd200,#ffcd00)"></i><i style="left:0;top:102px;width:240px;background:linear-gradient(90deg,#ccff0c,#d1ff0b,#d6ff0a,#dcff09,#e1ff08,#e6ff07,#ecff05,#f2ff04,#f7ff03,#fdff02,#fffb01,#fff600,#fff100,#ffeb00,#ffe700,#ffe200,#ffdd00,#ffd900,#ffd400,#ffd000,#ffcc00)"></i><i style="left:0;top:108px;width:240px;background:linear-gradient(90deg,#cdff0d,#d3ff0c,#d8ff0b,#ddff0a,#e3ff09,#e8ff07,#eeff06,#f4ff05,#f9ff04,#ffff03,#fff902,#fff400,#ffef00,#ffea00,#ffe500,#ffe000,#ffdb00,#ffd700,#ffd200,#ffce00,#ffca00)"></i><i style="left:0;top:114px;width:240px;background:linear-gradient(90deg,#cfff0e,#d4ff0d,#daff0c,#dfff0b,#e5ff0a,#eaff08,#f0ff07,#f6ff06,#fbff05,#fffd04,#fff702,#fff201,#ffed00,#ffe800,#ffe300,#ffde00,#ffda00,#ffd500,#ffd100,#ffcd00,#ffc900)"></i><i style="left:0;top:120px;width:240px;background:linear-gradient(90deg,#d1ff0f,#d6ff0e,#dcff0d,#e1ff0c,#e7ff0b,#ecff09,#f2ff08,#f8ff07,#fdff06,#fffb05,#fff503,#fff002,#ffeb01,#ffe600,#ffe100,#ffdc00,#ffd800,#ffd300,#ffcf00,#ffcb00,#ffc700)"></i><i style="left:0;top:126px;width:240px;background:linear-gradient(90deg,#d3ff10,#d8ff0f,#ddff0e,#e3ff0d,#e9ff0b,#eeff0a,#f4ff09,#faff08,#ffff07,#fff905,#fff304,#ffee03,#ffe902,#ffe401,#ffdf00,#ffdb00,#ffd600,#ffd200,#ffce00,#ffc900,#ffc500)"></i><i style="left:0;top:132px;width:240px;background:linear-gradient(90deg,#d4ff11,#daff10,#dfff0f,#e5ff0e,#ebff0c,#f0ff0b,#f6ff0a,#fcff09,#fffd08,#fff706,#fff105,#ffec04,#ffe703,#ffe201,#ffdd00,#ffd900,#ffd400,#ffd000,#ffcc00,#ffc800,#ffc400)"></i><i style="left:0;top:138px;width:240px;background:linear-gradient(90deg,#d6ff12,#dcff11,#e1ff10,#e7ff0f,#ecff0d,#f2ff0c,#f8ff0b,#feff0a,#fffb09,#fff507,#fff006,#ffea05,#ffe503,#ffe002,#ffdc01,#ffd700,#ffd300,#ffce00,#ffca00,#ffc600,#ffc200)"></i><i style="left:0;top:144px;width:240px;background:linear-gradient(90deg,#d8ff13,#deff12,#e3ff11,#e9ff10,#eeff0e,#f4ff0d,#faff0c,#fffe0b,#fff809,#fff308,#ffee07,#ffe806,#ffe304,#ffdf03,#ffda02,#ffd501,#ffd100,#ffcd00,#ffc900,#ffc500,#ffc100)"></i><i style="left:0;top:150px;width:240px;background:linear-gradient(90deg,#daff14,#dfff13,#e5ff12,#ebff11,#f0ff0f,#f6ff0e,#fcff0d,#fffc0c,#fff60a,#fff109,#ffec08,#ffe706,#ffe205,#ffdd04,#ffd803,#ffd402,#ffcf01,#ffcb00,#ffc700,#ffc300,#ffbf00)"></i><i style="left:0;top:156px;width:240px;background:linear-gradient(90deg,#dcff15,#e1ff14,#e7ff13,#edff12,#f2ff10,#f8ff0f,#feff0e,#fffa0d,#fff40b,#ffef0a,#ffea08,#ffe507,#ffe006,#ffdb05,#ffd604,#ffd202,#ffce01,#ffc900,#ffc500,#ffc100,#ffbe00)"></i><i style="left:0;top:162px;width:240px;background:linear-gradient(90deg,#deff16,#e3ff15,#e9ff14,#efff13,#f5ff11,#faff10,#fffe0f,#fff80d,#fff20c,#ffed0b,#ffe809,#ffe308,#ffde07,#ffd906,#ffd504,#ffd003,#ffcc02,#ffc801,#ffc400,#ffc000,#ffbc00)"></i><i style="left:0;top:168px;width:240px;background:linear-gradient(90deg,#e0ff17,#e5ff16,#ebff15,#f1ff14,#f7ff12,#fcff11,#fffc10,#fff60e,#fff00d,#ffeb0c,#ffe60a,#ffe109,#ffdc08,#ffd706,#ffd305,#ffcf04,#ffca03,#ffc602,#ffc201,#ffbe00,#ffbb00)"></i><i style="left:0;top:174px;width:240px;background:linear-gradient(90deg,#e2ff18,#e7ff17,#edff16,#f3ff15,#f9ff13,#ffff12,#fffa11,#fff40f,#ffee0e,#ffe90c,#ffe40b,#ffdf0a,#ffda08,#ffd607,#ffd106,#ffcd05,#ffc904,#ffc503,#ffc102,#ffbd01,#ffb900)"></i><i style="left:0;top:180px;width:240px;background:linear-gradient(90deg,#e3ff19,#e9ff18,#efff17,#f5ff16,#fbff14,#fffd13,#fff712,#fff210,#ffec0f,#ffe70d,#ffe20c,#ffdd0a,#ffd809,#ffd408,#ffcf07,#ffcb06,#ffc704,#ffc303,#ffbf02,#ffbb01,#ffb800)"></i><i style="left:0;top:186px;width:240px;background:linear-gradient(90deg,#e5ff1a,#ebff19,#f1ff18,#f7ff17,#fdff16,#fffb14,#fff512,#fff011,#ffea0f,#ffe50e,#ffe00d,#ffdb0b,#ffd70a,#ffd209,#ffce08,#ffca06,#ffc505,#ffc104,#ffbd03,#ffba02,#ffb601)"></i><i style="left:0;top:192px;width:240px;background:linear-gradient(90deg,#e7ff1b,#edff1a,#f3ff19,#f9ff18,#ffff17,#fff915,#fff313,#ffee12,#ffe810,#ffe30f,#ffde0d,#ffda0c,#ffd50b,#ffd00a,#ffcc08,#ffc807,#ffc406,#ffc005,#ffbc04,#ffb803,#ffb502)"></i><div class="a" style="left:0;top:0;width:100%;height:100%;background:rgba(0,0,0,0.40);clip-path:polygon(-46.8px -10.9px,280.7px 208.1px,280.7px -20px,-46.8px -20px)"></div></div><div class="a" style="left:1600.3px;top:153.5px;width:234.6px;height:197.6px;border:1.6px solid rgba(205,205,205,.62)"></div><svg width="1920" height="1039" viewBox="0 0 1920 1039"><rect x="1710.1" y="244.8" width="14.8" height="14.8" fill="none" stroke="#fff" stroke-opacity=".9" stroke-width="1.7"/><circle cx="1714.7" cy="246.3" r="4.2" fill="#f4f420" stroke="#1c1c1c" stroke-width="1.3"/></svg><div class="a" style="left:1570px;top:637px;width:267.5px;height:28px;background:#353535"></div><div class="t" style="left:1570.0px;top:641.8px;font-size:20.3px;transform-origin:0 0;transform:scaleX(1.0331);color:#f0f0f0;">RGB Triplet: 255, 255, 0</div><div class="a" id="tbl" style="left:419.2px;top:724.4px;width:1430.6px;height:223.1px;overflow:hidden;font-family:'DejaVu Sans','Liberation Sans',sans-serif;color:#f2f2f2"><div class="a" style="left:0;top:0;width:100%;height:29.6px;background:linear-gradient(#353535 0%,#2b2b2b 49%,#151515 50%,#1f1f1f 100%)"></div><div class="a" style="left:0;top:0;width:17px;height:29.6px;background:#000"></div><div class="a" style="left:0;top:29.6px;width:100%;height:27.7px;background:linear-gradient(#4b4b4b,#3d3d3d)"></div><div class="a" style="left:0;top:29.6px;width:17px;height:27.7px;background:linear-gradient(#2e2e2e,#232323)"></div><div class="a" style="left:0;top:57.0px;width:100%;height:27.7px;background:linear-gradient(#868686,#6c6c6c)"></div><div class="a" style="left:0;top:57.0px;width:17px;height:27.7px;background:linear-gradient(#3c3c3c,#2c2c2c)"></div><div class="a" style="left:0;top:84.4px;width:100%;height:27.7px;background:linear-gradient(#4b4b4b,#3d3d3d)"></div><div class="a" style="left:0;top:84.4px;width:17px;height:27.7px;background:linear-gradient(#2e2e2e,#232323)"></div><div class="a" style="left:0;top:111.9px;width:100%;height:27.7px;background:linear-gradient(#868686,#6c6c6c)"></div><div class="a" style="left:0;top:111.9px;width:17px;height:27.7px;background:linear-gradient(#3c3c3c,#2c2c2c)"></div><div class="a" style="left:0;top:139.3px;width:100%;height:27.7px;background:linear-gradient(#4b4b4b,#3d3d3d)"></div><div class="a" style="left:0;top:139.3px;width:17px;height:27.7px;background:linear-gradient(#2e2e2e,#232323)"></div><div class="a" style="left:0;top:166.7px;width:100%;height:27.7px;background:linear-gradient(#868686,#6c6c6c)"></div><div class="a" style="left:0;top:166.7px;width:17px;height:27.7px;background:linear-gradient(#3c3c3c,#2c2c2c)"></div><div class="a" style="left:0;top:194.1px;width:100%;height:27.7px;background:linear-gradient(#4b4b4b,#3d3d3d)"></div><div class="a" style="left:0;top:194.1px;width:17px;height:27.7px;background:linear-gradient(#2e2e2e,#232323)"></div><div class="t" style="left:163.3px;top:5.9px;font-size:16.0px;line-height:1.2;transform-origin:0 0;transform:scaleX(1.060)">White</div><div class="t" style="left:258.8px;top:5.9px;font-size:16.0px;line-height:1.2;transform-origin:0 0;transform:scaleX(1.060)">Gray 80</div><div class="t" style="left:354.1px;top:5.9px;font-size:16.0px;line-height:1.2;transform-origin:0 0;transform:scaleX(1.060)">Gray 65</div><div class="t" style="left:449.5px;top:5.9px;font-size:16.0px;line-height:1.2;transform-origin:0 0;transform:scaleX(1.060)">Gray 50</div><div class="t" style="left:545.0px;top:5.9px;font-size:16.0px;line-height:1.2;transform-origin:0 0;transform:scaleX(1.060)">Gray 35</div><div class="t" style="left:640.6px;top:5.9px;font-size:16.0px;line-height:1.2;transform-origin:0 0;transform:scaleX(1.060)">Black</div><div class="t" style="left:713.8px;top:5.9px;font-size:16.0px;line-height:1.2;transform-origin:0 0;transform:scaleX(1.060)">Dark Skin</div><div class="t" style="left:803.2px;top:5.9px;font-size:16.0px;line-height:1.2;transform-origin:0 0;transform:scaleX(1.060)">Light Skin</div><div class="t" style="left:898.2px;top:5.9px;font-size:16.0px;line-height:1.2;transform-origin:0 0;transform:scaleX(1.060)">Blue Sky</div><div class="t" style="left:982.7px;top:5.9px;font-size:16.0px;line-height:1.2;transform-origin:0 0;transform:scaleX(1.060)">Foliage</div><div class="t" style="left:1067.1px;top:5.9px;font-size:16.0px;line-height:1.2;transform-origin:0 0;transform:scaleX(1.060)">Blue Flower</div><div class="t" style="left:1177.3px;top:5.9px;font-size:16.0px;line-height:1.2;transform-origin:0 0;transform:scaleX(1.060)">Bluish Green</div><div class="t" style="left:1295.2px;top:5.9px;font-size:16.0px;line-height:1.2;transform-origin:0 0;transform:scaleX(1.060)">Orange</div><div class="t" style="left:1390.3px;top:5.9px;font-size:16.0px;line-height:1.2;transform-origin:0 0;transform:scaleX(1.105)">Purplish Blue</div><div class="t" style="left:22.8px;top:35.4px;font-size:16.0px;line-height:1.2;transform-origin:0 0;transform:scaleX(1.078)">x: CIE31</div><div class="t" style="left:163.3px;top:35.4px;font-size:16.0px;line-height:1.2;transform-origin:0 0;transform:scaleX(1.090)">0,3078</div><div class="t" style="left:258.8px;top:35.4px;font-size:16.0px;line-height:1.2;transform-origin:0 0;transform:scaleX(1.090)">0,3071</div><div class="t" style="left:354.1px;top:35.4px;font-size:16.0px;line-height:1.2;transform-origin:0 0;transform:scaleX(1.090)">0,3069</div><div class="t" style="left:449.5px;top:35.4px;font-size:16.0px;line-height:1.2;transform-origin:0 0;transform:scaleX(1.090)">0,3069</div><div class="t" style="left:545.0px;top:35.4px;font-size:16.0px;line-height:1.2;transform-origin:0 0;transform:scaleX(1.090)">0,3070</div><div class="t" style="left:640.6px;top:35.4px;font-size:16.0px;line-height:1.2;transform-origin:0 0;transform:scaleX(1.090)">0,2751</div><div class="t" style="left:713.8px;top:35.4px;font-size:16.0px;line-height:1.2;transform-origin:0 0;transform:scaleX(1.090)">0,4179</div><div class="t" style="left:803.2px;top:35.4px;font-size:16.0px;line-height:1.2;transform-origin:0 0;transform:scaleX(1.090)">0,3812</div><div class="t" style="left:898.2px;top:35.4px;font-size:16.0px;line-height:1.2;transform-origin:0 0;transform:scaleX(1.090)">0,2335</div><div class="t" style="left:982.7px;top:35.4px;font-size:16.0px;line-height:1.2;transform-origin:0 0;transform:scaleX(1.090)">0,3368</div><div class="t" style="left:1067.1px;top:35.4px;font-size:16.0px;line-height:1.2;transform-origin:0 0;transform:scaleX(1.090)">0,2571</div><div class="t" style="left:1177.3px;top:35.4px;font-size:16.0px;line-height:1.2;transform-origin:0 0;transform:scaleX(1.090)">0,2497</div><div class="t" style="left:1295.2px;top:35.4px;font-size:16.0px;line-height:1.2;transform-origin:0 0;transform:scaleX(1.090)">0,5270</div><div class="t" style="left:1390.3px;top:35.4px;font-size:16.0px;line-height:1.2;transform-origin:0 0;transform:scaleX(1.090)">0,1970</div><div class="t" style="left:22.8px;top:62.9px;font-size:16.0px;line-height:1.2;transform-origin:0 0;transform:scaleX(1.078)">y: CIE31</div><div class="t" style="left:163.3px;top:62.9px;font-size:16.0px;line-height:1.2;transform-origin:0 0;transform:scaleX(1.090)">0,3291</div><div class="t" style="left:258.8px;top:62.9px;font-size:16.0px;line-height:1.2;transform-origin:0 0;transform:scaleX(1.090)">0,3285</div><div class="t" style="left:354.1px;top:62.9px;font-size:16.0px;line-height:1.2;transform-origin:0 0;transform:scaleX(1.090)">0,3284</div><div class="t" style="left:449.5px;top:62.9px;font-size:16.0px;line-height:1.2;transform-origin:0 0;transform:scaleX(1.090)">0,3285</div><div class="t" style="left:545.0px;top:62.9px;font-size:16.0px;line-height:1.2;transform-origin:0 0;transform:scaleX(1.090)">0,3289</div><div class="t" style="left:640.6px;top:62.9px;font-size:16.0px;line-height:1.2;transform-origin:0 0;transform:scaleX(1.090)">0,2821</div><div class="t" style="left:713.8px;top:62.9px;font-size:16.0px;line-height:1.2;transform-origin:0 0;transform:scaleX(1.090)">0,3680</div><div class="t" style="left:803.2px;top:62.9px;font-size:16.0px;line-height:1.2;transform-origin:0 0;transform:scaleX(1.090)">0,3603</div><div class="t" style="left:898.2px;top:62.9px;font-size:16.0px;line-height:1.2;transform-origin:0 0;transform:scaleX(1.090)">0,2556</div><div class="t" style="left:982.7px;top:62.9px;font-size:16.0px;line-height:1.2;transform-origin:0 0;transform:scaleX(1.090)">0,4446</div><div class="t" style="left:1067.1px;top:62.9px;font-size:16.0px;line-height:1.2;transform-origin:0 0;transform:scaleX(1.090)">0,2451</div><div class="t" style="left:1177.3px;top:62.9px;font-size:16.0px;line-height:1.2;transform-origin:0 0;transform:scaleX(1.090)">0,3611</div><div class="t" style="left:1295.2px;top:62.9px;font-size:16.0px;line-height:1.2;transform-origin:0 0;transform:scaleX(1.090)">0,4049</div><div class="t" style="left:1390.3px;top:62.9px;font-size:16.0px;line-height:1.2;transform-origin:0 0;transform:scaleX(1.090)">0,1755</div><div class="t" style="left:22.8px;top:90.3px;font-size:16.0px;line-height:1.2;transform-origin:0 0;transform:scaleX(1.078)">Y</div><div class="t" style="left:163.3px;top:90.3px;font-size:16.0px;line-height:1.2;transform-origin:0 0;transform:scaleX(1.090)">450,5800</div><div class="t" style="left:258.8px;top:90.3px;font-size:16.0px;line-height:1.2;transform-origin:0 0;transform:scaleX(1.090)">382,6453</div><div class="t" style="left:354.1px;top:90.3px;font-size:16.0px;line-height:1.2;transform-origin:0 0;transform:scaleX(1.090)">310,5169</div><div class="t" style="left:449.5px;top:90.3px;font-size:16.0px;line-height:1.2;transform-origin:0 0;transform:scaleX(1.090)">236,1093</div><div class="t" style="left:545.0px;top:90.3px;font-size:16.0px;line-height:1.2;transform-origin:0 0;transform:scaleX(1.090)">163,6978</div><div class="t" style="left:640.6px;top:90.3px;font-size:16.0px;line-height:1.2;transform-origin:0 0;transform:scaleX(1.090)">0,3112</div><div class="t" style="left:713.8px;top:90.3px;font-size:16.0px;line-height:1.2;transform-origin:0 0;transform:scaleX(1.090)">39,2551</div><div class="t" style="left:803.2px;top:90.3px;font-size:16.0px;line-height:1.2;transform-origin:0 0;transform:scaleX(1.090)">165,4944</div><div class="t" style="left:898.2px;top:90.3px;font-size:16.0px;line-height:1.2;transform-origin:0 0;transform:scaleX(1.090)">82,5775</div><div class="t" style="left:982.7px;top:90.3px;font-size:16.0px;line-height:1.2;transform-origin:0 0;transform:scaleX(1.090)">52,7485</div><div class="t" style="left:1067.1px;top:90.3px;font-size:16.0px;line-height:1.2;transform-origin:0 0;transform:scaleX(1.090)">106,7665</div><div class="t" style="left:1177.3px;top:90.3px;font-size:16.0px;line-height:1.2;transform-origin:0 0;transform:scaleX(1.090)">198,2056</div><div class="t" style="left:1295.2px;top:90.3px;font-size:16.0px;line-height:1.2;transform-origin:0 0;transform:scaleX(1.090)">131,1476</div><div class="t" style="left:1390.3px;top:90.3px;font-size:16.0px;line-height:1.2;transform-origin:0 0;transform:scaleX(1.090)">48,8615</div><div class="t" style="left:22.8px;top:117.7px;font-size:16.0px;line-height:1.2;transform-origin:0 0;transform:scaleX(1.078)">Target x:CIE31</div><div class="t" style="left:163.3px;top:117.7px;font-size:16.0px;line-height:1.2;transform-origin:0 0;transform:scaleX(1.090)">0,3127</div><div class="t" style="left:258.8px;top:117.7px;font-size:16.0px;line-height:1.2;transform-origin:0 0;transform:scaleX(1.090)">0,3127</div><div class="t" style="left:354.1px;top:117.7px;font-size:16.0px;line-height:1.2;transform-origin:0 0;transform:scaleX(1.090)">0,3127</div><div class="t" style="left:449.5px;top:117.7px;font-size:16.0px;line-height:1.2;transform-origin:0 0;transform:scaleX(1.090)">0,3127</div><div class="t" style="left:545.0px;top:117.7px;font-size:16.0px;line-height:1.2;transform-origin:0 0;transform:scaleX(1.090)">0,3127</div><div class="t" style="left:640.6px;top:117.7px;font-size:16.0px;line-height:1.2;transform-origin:0 0;transform:scaleX(1.090)">0,3127</div><div class="t" style="left:713.8px;top:117.7px;font-size:16.0px;line-height:1.2;transform-origin:0 0;transform:scaleX(1.090)">0,4003</div><div class="t" style="left:803.2px;top:117.7px;font-size:16.0px;line-height:1.2;transform-origin:0 0;transform:scaleX(1.090)">0,3795</div><div class="t" style="left:898.2px;top:117.7px;font-size:16.0px;line-height:1.2;transform-origin:0 0;transform:scaleX(1.090)">0,2496</div><div class="t" style="left:982.7px;top:117.7px;font-size:16.0px;line-height:1.2;transform-origin:0 0;transform:scaleX(1.090)">0,3395</div><div class="t" style="left:1067.1px;top:117.7px;font-size:16.0px;line-height:1.2;transform-origin:0 0;transform:scaleX(1.090)">0,2681</div><div class="t" style="left:1177.3px;top:117.7px;font-size:16.0px;line-height:1.2;transform-origin:0 0;transform:scaleX(1.090)">0,2626</div><div class="t" style="left:1295.2px;top:117.7px;font-size:16.0px;line-height:1.2;transform-origin:0 0;transform:scaleX(1.090)">0,5122</div><div class="t" style="left:1390.3px;top:117.7px;font-size:16.0px;line-height:1.2;transform-origin:0 0;transform:scaleX(1.090)">0,2161</div><div class="t" style="left:22.8px;top:145.1px;font-size:16.0px;line-height:1.2;transform-origin:0 0;transform:scaleX(1.078)">Target y:CIE31</div><div class="t" style="left:163.3px;top:145.1px;font-size:16.0px;line-height:1.2;transform-origin:0 0;transform:scaleX(1.090)">0,3290</div><div class="t" style="left:258.8px;top:145.1px;font-size:16.0px;line-height:1.2;transform-origin:0 0;transform:scaleX(1.090)">0,3290</div><div class="t" style="left:354.1px;top:145.1px;font-size:16.0px;line-height:1.2;transform-origin:0 0;transform:scaleX(1.090)">0,3290</div><div class="t" style="left:449.5px;top:145.1px;font-size:16.0px;line-height:1.2;transform-origin:0 0;transform:scaleX(1.090)">0,3290</div><div class="t" style="left:545.0px;top:145.1px;font-size:16.0px;line-height:1.2;transform-origin:0 0;transform:scaleX(1.090)">0,3290</div><div class="t" style="left:640.6px;top:145.1px;font-size:16.0px;line-height:1.2;transform-origin:0 0;transform:scaleX(1.090)">0,3290</div><div class="t" style="left:713.8px;top:145.1px;font-size:16.0px;line-height:1.2;transform-origin:0 0;transform:scaleX(1.090)">0,3642</div><div class="t" style="left:803.2px;top:145.1px;font-size:16.0px;line-height:1.2;transform-origin:0 0;transform:scaleX(1.090)">0,3562</div><div class="t" style="left:898.2px;top:145.1px;font-size:16.0px;line-height:1.2;transform-origin:0 0;transform:scaleX(1.090)">0,2656</div><div class="t" style="left:982.7px;top:145.1px;font-size:16.0px;line-height:1.2;transform-origin:0 0;transform:scaleX(1.090)">0,4271</div><div class="t" style="left:1067.1px;top:145.1px;font-size:16.0px;line-height:1.2;transform-origin:0 0;transform:scaleX(1.090)">0,2525</div><div class="t" style="left:1177.3px;top:145.1px;font-size:16.0px;line-height:1.2;transform-origin:0 0;transform:scaleX(1.090)">0,3616</div><div class="t" style="left:1295.2px;top:145.1px;font-size:16.0px;line-height:1.2;transform-origin:0 0;transform:scaleX(1.090)">0,4063</div><div class="t" style="left:1390.3px;top:145.1px;font-size:16.0px;line-height:1.2;transform-origin:0 0;transform:scaleX(1.090)">0,1925</div><div class="t" style="left:22.8px;top:172.5px;font-size:16.0px;line-height:1.2;transform-origin:0 0;transform:scaleX(1.078)">Target Y</div><div class="t" style="left:163.3px;top:172.5px;font-size:16.0px;line-height:1.2;transform-origin:0 0;transform:scaleX(1.090)">450,5800</div><div class="t" style="left:258.8px;top:172.5px;font-size:16.0px;line-height:1.2;transform-origin:0 0;transform:scaleX(1.090)">356,5430</div><div class="t" style="left:354.1px;top:172.5px;font-size:16.0px;line-height:1.2;transform-origin:0 0;transform:scaleX(1.090)">287,2884</div><div class="t" style="left:449.5px;top:172.5px;font-size:16.0px;line-height:1.2;transform-origin:0 0;transform:scaleX(1.090)">221,2442</div><div class="t" style="left:545.0px;top:172.5px;font-size:16.0px;line-height:1.2;transform-origin:0 0;transform:scaleX(1.090)">154,0598</div><div class="t" style="left:640.6px;top:172.5px;font-size:16.0px;line-height:1.2;transform-origin:0 0;transform:scaleX(1.090)">0,0000</div><div class="t" style="left:713.8px;top:172.5px;font-size:16.0px;line-height:1.2;transform-origin:0 0;transform:scaleX(1.090)">45,3883</div><div class="t" style="left:803.2px;top:172.5px;font-size:16.0px;line-height:1.2;transform-origin:0 0;transform:scaleX(1.090)">157,2306</div><div class="t" style="left:898.2px;top:172.5px;font-size:16.0px;line-height:1.2;transform-origin:0 0;transform:scaleX(1.090)">84,2512</div><div class="t" style="left:982.7px;top:172.5px;font-size:16.0px;line-height:1.2;transform-origin:0 0;transform:scaleX(1.090)">58,7216</div><div class="t" style="left:1067.1px;top:172.5px;font-size:16.0px;line-height:1.2;transform-origin:0 0;transform:scaleX(1.090)">105,0684</div><div class="t" style="left:1177.3px;top:172.5px;font-size:16.0px;line-height:1.2;transform-origin:0 0;transform:scaleX(1.090)">188,6714</div><div class="t" style="left:1295.2px;top:172.5px;font-size:16.0px;line-height:1.2;transform-origin:0 0;transform:scaleX(1.090)">127,7296</div><div class="t" style="left:1390.3px;top:172.5px;font-size:16.0px;line-height:1.2;transform-origin:0 0;transform:scaleX(1.090)">52,9031</div><div class="t" style="left:22.8px;top:200.0px;font-size:16.0px;line-height:1.2;transform-origin:0 0;transform:scaleX(1.078)">ΔE 2000</div><div class="t" style="left:163.3px;top:200.0px;font-size:16.0px;line-height:1.2;transform-origin:0 0;transform:scaleX(1.090)">3,7936</div><div class="t" style="left:258.8px;top:200.0px;font-size:16.0px;line-height:1.2;transform-origin:0 0;transform:scaleX(1.090)">4,0640</div><div class="t" style="left:354.1px;top:200.0px;font-size:16.0px;line-height:1.2;transform-origin:0 0;transform:scaleX(1.090)">3,9784</div><div class="t" style="left:449.5px;top:200.0px;font-size:16.0px;line-height:1.2;transform-origin:0 0;transform:scaleX(1.090)">3,6603</div><div class="t" style="left:545.0px;top:200.0px;font-size:16.0px;line-height:1.2;transform-origin:0 0;transform:scaleX(1.090)">3,3350</div><div class="t" style="left:640.6px;top:200.0px;font-size:16.0px;line-height:1.2;transform-origin:0 0;transform:scaleX(1.090)">0,5997</div><div class="t" style="left:713.8px;top:200.0px;font-size:16.0px;line-height:1.2;transform-origin:0 0;transform:scaleX(1.090)">2,6779</div><div class="t" style="left:803.2px;top:200.0px;font-size:16.0px;line-height:1.2;transform-origin:0 0;transform:scaleX(1.090)">1,8220</div><div class="t" style="left:898.2px;top:200.0px;font-size:16.0px;line-height:1.2;transform-origin:0 0;transform:scaleX(1.090)">3,5445</div><div class="t" style="left:982.7px;top:200.0px;font-size:16.0px;line-height:1.2;transform-origin:0 0;transform:scaleX(1.090)">2,6634</div><div class="t" style="left:1067.1px;top:200.0px;font-size:16.0px;line-height:1.2;transform-origin:0 0;transform:scaleX(1.090)">3,0203</div><div class="t" style="left:1177.3px;top:200.0px;font-size:16.0px;line-height:1.2;transform-origin:0 0;transform:scaleX(1.090)">2,9305</div><div class="t" style="left:1295.2px;top:200.0px;font-size:16.0px;line-height:1.2;transform-origin:0 0;transform:scaleX(1.090)">1,8041</div><div class="t" style="left:1390.3px;top:200.0px;font-size:16.0px;line-height:1.2;transform-origin:0 0;transform:scaleX(1.090)">3,3681</div></div><div class="a" style="left:436px;top:947.5px;width:1414px;height:15.5px;background:#5a5a5a;border-radius:2px"></div><div class="a" style="left:458.5px;top:948.5px;width:617px;height:13.5px;background:#444;border-radius:7px"></div><div class="a" style="left:437px;top:948px;width:15px;height:14.5px;background:#6c6c6c;border-radius:3px"></div><div class="a" style="left:1833.5px;top:948px;width:15px;height:14.5px;background:#6c6c6c;border-radius:3px"></div><svg width="1920" height="1039" viewBox="0 0 1920 1039"><path d="M448.5 950.5v10l-7.5-5z" fill="#3a3a3a"/><path d="M1837.5 950.5v10l7.5-5z" fill="#3a3a3a"/></svg><div class="a" style="left:0;top:966px;width:1920px;height:73px;background:#333"></div><div class="a" id="bb" style="left:0;top:966px;width:1562.7px;height:73px;overflow:hidden"><div class="a" style="left:1.6px;top:3px;width:56px;height:55px;border-radius:5px;background:linear-gradient(#a0a0a0,#8a8a8a 45%,#5c5c5c);box-shadow:inset 0 0 0 1px rgba(255,255,255,.13)"></div><div class="a" style="left:7.0px;top:8.5px;width:45.2px;height:27.5px;border-radius:3.5px;background:#ffffff;box-shadow:inset 0 2px 2px rgba(0,0,0,.28),0 1px 1px rgba(255,255,255,.35),0 0 0 1px rgba(255,255,255,.12)"></div><div class="t" style="left:13.7px;top:42.2px;font-size:11.7px;line-height:13.6px;font-weight:bold;color:#262626;transform-origin:0 0;transform:scaleX(1.000)">White</div><div class="a" style="left:60.4px;top:3px;width:56px;height:55px;border-radius:5px;background:linear-gradient(#a0a0a0,#8a8a8a 45%,#5c5c5c);box-shadow:inset 0 0 0 1px rgba(255,255,255,.13)"></div><div class="a" style="left:65.8px;top:8.5px;width:45.2px;height:27.5px;border-radius:3.5px;background:#e6e6e6;box-shadow:inset 0 2px 2px rgba(0,0,0,.28),0 1px 1px rgba(255,255,255,.35),0 0 0 1px rgba(255,255,255,.12)"></div><div class="t" style="left:66.9px;top:42.2px;font-size:11.7px;line-height:13.6px;font-weight:bold;color:#262626;transform-origin:0 0;transform:scaleX(1.000)">Gray 80</div><div class="a" style="left:119.1px;top:3px;width:56px;height:55px;border-radius:5px;background:linear-gradient(#a0a0a0,#8a8a8a 45%,#5c5c5c);box-shadow:inset 0 0 0 1px rgba(255,255,255,.13)"></div><div class="a" style="left:124.5px;top:8.5px;width:45.2px;height:27.5px;border-radius:3.5px;background:#d0d0d0;box-shadow:inset 0 2px 2px rgba(0,0,0,.28),0 1px 1px rgba(255,255,255,.35),0 0 0 1px rgba(255,255,255,.12)"></div><div class="t" style="left:125.6px;top:42.2px;font-size:11.7px;line-height:13.6px;font-weight:bold;color:#262626;transform-origin:0 0;transform:scaleX(1.000)">Gray 65</div><div class="a" style="left:177.8px;top:3px;width:56px;height:55px;border-radius:5px;background:linear-gradient(#a0a0a0,#8a8a8a 45%,#5c5c5c);box-shadow:inset 0 0 0 1px rgba(255,255,255,.13)"></div><div class="a" style="left:183.2px;top:8.5px;width:45.2px;height:27.5px;border-radius:3.5px;background:#bababa;box-shadow:inset 0 2px 2px rgba(0,0,0,.28),0 1px 1px rgba(255,255,255,.35),0 0 0 1px rgba(255,255,255,.12)"></div><div class="t" style="left:184.4px;top:42.2px;font-size:11.7px;line-height:13.6px;font-weight:bold;color:#262626;transform-origin:0 0;transform:scaleX(1.000)">Gray 50</div><div class="a" style="left:236.6px;top:3px;width:56px;height:55px;border-radius:5px;background:linear-gradient(#a0a0a0,#8a8a8a 45%,#5c5c5c);box-shadow:inset 0 0 0 1px rgba(255,255,255,.13)"></div><div class="a" style="left:242.0px;top:8.5px;width:45.2px;height:27.5px;border-radius:3.5px;background:#a0a0a0;box-shadow:inset 0 2px 2px rgba(0,0,0,.28),0 1px 1px rgba(255,255,255,.35),0 0 0 1px rgba(255,255,255,.12)"></div><div class="t" style="left:243.1px;top:42.2px;font-size:11.7px;line-height:13.6px;font-weight:bold;color:#262626;transform-origin:0 0;transform:scaleX(1.000)">Gray 35</div><div class="a" style="left:295.4px;top:3px;width:56px;height:55px;border-radius:5px;background:linear-gradient(#a0a0a0,#8a8a8a 45%,#5c5c5c);box-shadow:inset 0 0 0 1px rgba(255,255,255,.13)"></div><div class="a" style="left:300.8px;top:8.5px;width:45.2px;height:27.5px;border-radius:3.5px;background:#000000;box-shadow:inset 0 2px 2px rgba(0,0,0,.28),0 1px 1px rgba(255,255,255,.35),0 0 0 1px rgba(255,255,255,.12)"></div><div class="t" style="left:307.7px;top:42.2px;font-size:11.7px;line-height:13.6px;font-weight:bold;color:#262626;transform-origin:0 0;transform:scaleX(1.000)">Black</div><div class="a" style="left:354.1px;top:3px;width:56px;height:55px;border-radius:5px;background:linear-gradient(#a0a0a0,#8a8a8a 45%,#5c5c5c);box-shadow:inset 0 0 0 1px rgba(255,255,255,.13)"></div><div class="a" style="left:359.5px;top:8.5px;width:45.2px;height:27.5px;border-radius:3.5px;background:#7c5646;box-shadow:inset 0 2px 2px rgba(0,0,0,.28),0 1px 1px rgba(255,255,255,.35),0 0 0 1px rgba(255,255,255,.12)"></div><div class="t" style="left:355.1px;top:42.2px;font-size:11.7px;line-height:13.6px;font-weight:bold;color:#262626;transform-origin:0 0;transform:scaleX(1.000)">Dark Skin</div><div class="a" style="left:412.9px;top:3px;width:56px;height:55px;border-radius:5px;background:linear-gradient(#a0a0a0,#8a8a8a 45%,#5c5c5c);box-shadow:inset 0 0 0 1px rgba(255,255,255,.13)"></div><div class="a" style="left:418.2px;top:8.5px;width:45.2px;height:27.5px;border-radius:3.5px;background:#d09c86;box-shadow:inset 0 2px 2px rgba(0,0,0,.28),0 1px 1px rgba(255,255,255,.35),0 0 0 1px rgba(255,255,255,.12)"></div><div class="t" style="left:413.6px;top:42.2px;font-size:11.7px;line-height:13.6px;font-weight:bold;color:#262626;transform-origin:0 0;transform:scaleX(0.964)">Light Skin</div><div class="a" style="left:471.6px;top:3px;width:56px;height:55px;border-radius:5px;background:linear-gradient(#a0a0a0,#8a8a8a 45%,#5c5c5c);box-shadow:inset 0 0 0 1px rgba(255,255,255,.13)"></div><div class="a" style="left:477.0px;top:8.5px;width:45.2px;height:27.5px;border-radius:3.5px;background:#5484b4;box-shadow:inset 0 2px 2px rgba(0,0,0,.28),0 1px 1px rgba(255,255,255,.35),0 0 0 1px rgba(255,255,255,.12)"></div><div class="t" style="left:474.9px;top:42.2px;font-size:11.7px;line-height:13.6px;font-weight:bold;color:#262626;transform-origin:0 0;transform:scaleX(1.000)">Blue Sky</div><div class="a" style="left:530.4px;top:3px;width:56px;height:55px;border-radius:5px;background:linear-gradient(#a0a0a0,#8a8a8a 45%,#5c5c5c);box-shadow:inset 0 0 0 1px rgba(255,255,255,.13)"></div><div class="a" style="left:535.8px;top:8.5px;width:45.2px;height:27.5px;border-radius:3.5px;background:#5a763e;box-shadow:inset 0 2px 2px rgba(0,0,0,.28),0 1px 1px rgba(255,255,255,.35),0 0 0 1px rgba(255,255,255,.12)"></div><div class="t" style="left:537.9px;top:42.2px;font-size:11.7px;line-height:13.6px;font-weight:bold;color:#262626;transform-origin:0 0;transform:scaleX(1.000)">Foliage</div><div class="a" style="left:589.1px;top:3px;width:56px;height:55px;border-radius:5px;background:linear-gradient(#a0a0a0,#8a8a8a 45%,#5c5c5c);box-shadow:inset 0 0 0 1px rgba(255,255,255,.13)"></div><div class="a" style="left:594.5px;top:8.5px;width:45.2px;height:13.5px;border-radius:3.5px;background:#8c86cc;box-shadow:inset 0 2px 2px rgba(0,0,0,.28),0 1px 1px rgba(255,255,255,.35),0 0 0 1px rgba(255,255,255,.12)"></div><div class="t" style="left:598.2px;top:28.6px;font-size:11.7px;line-height:13.6px;font-weight:bold;color:#262626;transform-origin:0 0;transform:scaleX(1)">Blue<br>Flower</div><div class="a" style="left:647.9px;top:3px;width:56px;height:55px;border-radius:5px;background:linear-gradient(#a0a0a0,#8a8a8a 45%,#5c5c5c);box-shadow:inset 0 0 0 1px rgba(255,255,255,.13)"></div><div class="a" style="left:653.2px;top:8.5px;width:45.2px;height:13.5px;border-radius:3.5px;background:#66d6be;box-shadow:inset 0 2px 2px rgba(0,0,0,.28),0 1px 1px rgba(255,255,255,.35),0 0 0 1px rgba(255,255,255,.12)"></div><div class="t" style="left:658.0px;top:28.6px;font-size:11.7px;line-height:13.6px;font-weight:bold;color:#262626;transform-origin:0 0;transform:scaleX(1)">Bluish<br>Green</div><div class="a" style="left:706.6px;top:3px;width:56px;height:55px;border-radius:5px;background:linear-gradient(#a0a0a0,#8a8a8a 45%,#5c5c5c);box-shadow:inset 0 0 0 1px rgba(255,255,255,.13)"></div><div class="a" style="left:712.0px;top:8.5px;width:45.2px;height:27.5px;border-radius:3.5px;background:#e48028;box-shadow:inset 0 2px 2px rgba(0,0,0,.28),0 1px 1px rgba(255,255,255,.35),0 0 0 1px rgba(255,255,255,.12)"></div><div class="t" style="left:714.1px;top:42.2px;font-size:11.7px;line-height:13.6px;font-weight:bold;color:#262626;transform-origin:0 0;transform:scaleX(1.000)">Orange</div><div class="a" style="left:765.4px;top:3px;width:56px;height:55px;border-radius:5px;background:linear-gradient(#a0a0a0,#8a8a8a 45%,#5c5c5c);box-shadow:inset 0 0 0 1px rgba(255,255,255,.13)"></div><div class="a" style="left:770.8px;top:8.5px;width:45.2px;height:13.5px;border-radius:3.5px;background:#465cb4;box-shadow:inset 0 2px 2px rgba(0,0,0,.28),0 1px 1px rgba(255,255,255,.35),0 0 0 1px rgba(255,255,255,.12)"></div><div class="t" style="left:769.9px;top:28.6px;font-size:11.7px;line-height:13.6px;font-weight:bold;color:#262626;transform-origin:0 0;transform:scaleX(1)">Purplish<br>Blue</div><div class="a" style="left:824.1px;top:3px;width:56px;height:55px;border-radius:5px;background:linear-gradient(#a0a0a0,#8a8a8a 45%,#5c5c5c);box-shadow:inset 0 0 0 1px rgba(255,255,255,.13)"></div><div class="a" style="left:829.5px;top:8.5px;width:45.2px;height:13.5px;border-radius:3.5px;background:#d65264;box-shadow:inset 0 2px 2px rgba(0,0,0,.28),0 1px 1px rgba(255,255,255,.35),0 0 0 1px rgba(255,255,255,.12)"></div><div class="t" style="left:826.1px;top:28.6px;font-size:11.7px;line-height:13.6px;font-weight:bold;color:#262626;transform-origin:0 0;transform:scaleX(1)">Moderate<br>Red</div><div class="a" style="left:882.9px;top:3px;width:56px;height:55px;border-radius:5px;background:linear-gradient(#a0a0a0,#8a8a8a 45%,#5c5c5c);box-shadow:inset 0 0 0 1px rgba(255,255,255,.13)"></div><div class="a" style="left:888.2px;top:8.5px;width:45.2px;height:27.5px;border-radius:3.5px;background:#603c76;box-shadow:inset 0 2px 2px rgba(0,0,0,.28),0 1px 1px rgba(255,255,255,.35),0 0 0 1px rgba(255,255,255,.12)"></div><div class="t" style="left:892.6px;top:42.2px;font-size:11.7px;line-height:13.6px;font-weight:bold;color:#262626;transform-origin:0 0;transform:scaleX(1.000)">Purple</div><div class="a" style="left:941.6px;top:3px;width:56px;height:55px;border-radius:5px;background:linear-gradient(#a0a0a0,#8a8a8a 45%,#5c5c5c);box-shadow:inset 0 0 0 1px rgba(255,255,255,.13)"></div><div class="a" style="left:947.0px;top:8.5px;width:45.2px;height:13.5px;border-radius:3.5px;background:#acce3e;box-shadow:inset 0 2px 2px rgba(0,0,0,.28),0 1px 1px rgba(255,255,255,.35),0 0 0 1px rgba(255,255,255,.12)"></div><div class="t" style="left:951.4px;top:28.6px;font-size:11.7px;line-height:13.6px;font-weight:bold;color:#262626;transform-origin:0 0;transform:scaleX(1)">Yellow<br>Green</div><div class="a" style="left:1000.4px;top:3px;width:56px;height:55px;border-radius:5px;background:linear-gradient(#a0a0a0,#8a8a8a 45%,#5c5c5c);box-shadow:inset 0 0 0 1px rgba(255,255,255,.13)"></div><div class="a" style="left:1005.8px;top:8.5px;width:45.2px;height:13.5px;border-radius:3.5px;background:#f4ac2c;box-shadow:inset 0 2px 2px rgba(0,0,0,.28),0 1px 1px rgba(255,255,255,.35),0 0 0 1px rgba(255,255,255,.12)"></div><div class="t" style="left:1007.9px;top:28.6px;font-size:11.7px;line-height:13.6px;font-weight:bold;color:#262626;transform-origin:0 0;transform:scaleX(1)">Orange<br>Yellow</div><div class="a" style="left:1059.1px;top:3px;width:56px;height:55px;border-radius:5px;background:linear-gradient(#a0a0a0,#8a8a8a 45%,#5c5c5c);box-shadow:inset 0 0 0 1px rgba(255,255,255,.13)"></div><div class="a" style="left:1064.5px;top:8.5px;width:45.2px;height:27.5px;border-radius:3.5px;background:#2c38a0;box-shadow:inset 0 2px 2px rgba(0,0,0,.28),0 1px 1px rgba(255,255,255,.35),0 0 0 1px rgba(255,255,255,.12)"></div><div class="t" style="left:1074.4px;top:42.2px;font-size:11.7px;line-height:13.6px;font-weight:bold;color:#262626;transform-origin:0 0;transform:scaleX(1.000)">Blue</div><div class="a" style="left:1117.8px;top:3px;width:56px;height:55px;border-radius:5px;background:linear-gradient(#a0a0a0,#8a8a8a 45%,#5c5c5c);box-shadow:inset 0 0 0 1px rgba(255,255,255,.13)"></div><div class="a" style="left:1123.2px;top:8.5px;width:45.2px;height:27.5px;border-radius:3.5px;background:#48a04c;box-shadow:inset 0 2px 2px rgba(0,0,0,.28),0 1px 1px rgba(255,255,255,.35),0 0 0 1px rgba(255,255,255,.12)"></div><div class="t" style="left:1128.9px;top:42.2px;font-size:11.7px;line-height:13.6px;font-weight:bold;color:#262626;transform-origin:0 0;transform:scaleX(1.000)">Green</div><div class="a" style="left:1176.6px;top:3px;width:56px;height:55px;border-radius:5px;background:linear-gradient(#a0a0a0,#8a8a8a 45%,#5c5c5c);box-shadow:inset 0 0 0 1px rgba(255,255,255,.13)"></div><div class="a" style="left:1182.0px;top:8.5px;width:45.2px;height:27.5px;border-radius:3.5px;background:#c43038;box-shadow:inset 0 2px 2px rgba(0,0,0,.28),0 1px 1px rgba(255,255,255,.35),0 0 0 1px rgba(255,255,255,.12)"></div><div class="t" style="left:1193.5px;top:42.2px;font-size:11.7px;line-height:13.6px;font-weight:bold;color:#262626;transform-origin:0 0;transform:scaleX(1.000)">Red</div><div class="a" style="left:1235.3px;top:3px;width:56px;height:55px;border-radius:5px;background:linear-gradient(#a0a0a0,#8a8a8a 45%,#5c5c5c);box-shadow:inset 0 0 0 1px rgba(255,255,255,.13)"></div><div class="a" style="left:1240.8px;top:8.5px;width:45.2px;height:27.5px;border-radius:3.5px;background:#f4d020;box-shadow:inset 0 2px 2px rgba(0,0,0,.28),0 1px 1px rgba(255,255,255,.35),0 0 0 1px rgba(255,255,255,.12)"></div><div class="t" style="left:1245.1px;top:42.2px;font-size:11.7px;line-height:13.6px;font-weight:bold;color:#262626;transform-origin:0 0;transform:scaleX(1.000)">Yellow</div><div class="a" style="left:1294.1px;top:3px;width:56px;height:55px;border-radius:5px;background:linear-gradient(#a0a0a0,#8a8a8a 45%,#5c5c5c);box-shadow:inset 0 0 0 1px rgba(255,255,255,.13)"></div><div class="a" style="left:1299.5px;top:8.5px;width:45.2px;height:27.5px;border-radius:3.5px;background:#c854a0;box-shadow:inset 0 2px 2px rgba(0,0,0,.28),0 1px 1px rgba(255,255,255,.35),0 0 0 1px rgba(255,255,255,.12)"></div><div class="t" style="left:1298.4px;top:42.2px;font-size:11.7px;line-height:13.6px;font-weight:bold;color:#262626;transform-origin:0 0;transform:scaleX(1.000)">Magenta</div><div class="a" style="left:1352.8px;top:3px;width:56px;height:55px;border-radius:5px;background:linear-gradient(#a0a0a0,#8a8a8a 45%,#5c5c5c);box-shadow:inset 0 0 0 1px rgba(255,255,255,.13)"></div><div class="a" style="left:1358.2px;top:8.5px;width:45.2px;height:27.5px;border-radius:3.5px;background:#008cac;box-shadow:inset 0 2px 2px rgba(0,0,0,.28),0 1px 1px rgba(255,255,255,.35),0 0 0 1px rgba(255,255,255,.12)"></div><div class="t" style="left:1366.5px;top:42.2px;font-size:11.7px;line-height:13.6px;font-weight:bold;color:#262626;transform-origin:0 0;transform:scaleX(1.000)">Cyan</div><div class="a" style="left:1411.6px;top:3px;width:56px;height:55px;border-radius:5px;background:linear-gradient(#a0a0a0,#8a8a8a 45%,#5c5c5c);box-shadow:inset 0 0 0 1px rgba(255,255,255,.13)"></div><div class="a" style="left:1417.0px;top:8.5px;width:45.2px;height:27.5px;border-radius:3.5px;background:#ff0000;box-shadow:inset 0 2px 2px rgba(0,0,0,.28),0 1px 1px rgba(255,255,255,.35),0 0 0 1px rgba(255,255,255,.12)"></div><div class="t" style="left:1412.3px;top:42.2px;font-size:11.7px;line-height:13.6px;font-weight:bold;color:#262626;transform-origin:0 0;transform:scaleX(0.986)">100% Red</div><div class="a" style="left:1470.3px;top:3px;width:56px;height:55px;border-radius:5px;background:linear-gradient(#a0a0a0,#8a8a8a 45%,#5c5c5c);box-shadow:inset 0 0 0 1px rgba(255,255,255,.13)"></div><div class="a" style="left:1475.8px;top:8.5px;width:45.2px;height:13.5px;border-radius:3.5px;background:#00ff00;box-shadow:inset 0 2px 2px rgba(0,0,0,.28),0 1px 1px rgba(255,255,255,.35),0 0 0 1px rgba(255,255,255,.12)"></div><div class="t" style="left:1481.4px;top:28.6px;font-size:11.7px;line-height:13.6px;font-weight:bold;color:#262626;transform-origin:0 0;transform:scaleX(1)">100%<br>Green</div><div class="a" style="left:1529.1px;top:3px;width:56px;height:55px;border-radius:5px;background:linear-gradient(#a0a0a0,#8a8a8a 45%,#5c5c5c);box-shadow:inset 0 0 0 1px rgba(255,255,255,.13)"></div><div class="a" style="left:1534.5px;top:8.5px;width:45.2px;height:13.5px;border-radius:3.5px;background:#0000ff;box-shadow:inset 0 2px 2px rgba(0,0,0,.28),0 1px 1px rgba(255,255,255,.35),0 0 0 1px rgba(255,255,255,.12)"></div><div class="t" style="left:1542.1px;top:28.6px;font-size:11.7px;line-height:13.6px;font-weight:bold;color:#262626;transform-origin:0 0;transform:scaleX(1)">100%<br>Blue</div></div><div class="a" style="left:0;top:1026px;width:1563px;height:11.2px;background:#555"></div><div class="a" style="left:15.5px;top:1026.5px;width:1356px;height:10.5px;background:#444;border-radius:5.5px"></div><div class="a" style="left:1.5px;top:1026px;width:12.5px;height:11.2px;background:#8a8a8a;border-radius:2px"></div><div class="a" style="left:1549.5px;top:1026px;width:12.5px;height:11.2px;background:#8a8a8a;border-radius:2px"></div><svg width="1920" height="1039" viewBox="0 0 1920 1039"><path d="M10.5 1027.3v8.6l-6-4.3z" fill="#333"/><path d="M1553 1027.3v8.6l6-4.3z" fill="#333"/></svg><div class="a" style="left:1563.6px;top:968.9px;width:53.3px;height:20.0px;border-radius:3px;background:linear-gradient(#acacac,#808080);box-shadow:inset 0 0 0 1px rgba(255,255,255,.12)"></div><div class="a" style="left:1563.6px;top:990.6px;width:53.3px;height:46.8px;border-radius:3px;background:linear-gradient(#8e8e8e,#6a6a6a);box-shadow:inset 0 0 0 1px rgba(255,255,255,.12)"></div><div class="a" style="left:1619.0px;top:968.9px;width:51.6px;height:33.3px;border-radius:3px 0 0 0;background:linear-gradient(#a8a8a8,#6a6a6a);box-shadow:inset 0 0 0 1px rgba(255,255,255,.12)"></div><div class="a" style="left:1671.9px;top:968.9px;width:49.5px;height:33.3px;border-radius:0;background:linear-gradient(#a8a8a8,#6a6a6a);box-shadow:inset 0 0 0 1px rgba(255,255,255,.12)"></div><div class="a" style="left:1722.7px;top:968.9px;width:49.3px;height:33.3px;border-radius:0;background:linear-gradient(#a8a8a8,#6a6a6a);box-shadow:inset 0 0 0 1px rgba(255,255,255,.12)"></div><div class="a" style="left:1773.3px;top:968.9px;width:49.6px;height:33.3px;border-radius:0;background:linear-gradient(#a8a8a8,#6a6a6a);box-shadow:inset 0 0 0 1px rgba(255,255,255,.12)"></div><div class="a" style="left:1823.6px;top:968.9px;width:51.2px;height:33.5px;border-radius:0;background:linear-gradient(#3e3e3e,#303030);box-shadow:inset 0 0 0 1px rgba(255,255,255,.12)"></div><div class="a" style="left:1875.6px;top:968.9px;width:49.4px;height:33.5px;border-radius:0;background:linear-gradient(#3e3e3e,#303030);box-shadow:inset 0 0 0 1px rgba(255,255,255,.12)"></div><div class="a" style="left:1619.0px;top:1004.0px;width:153.0px;height:33.4px;border-radius:3px;background:linear-gradient(#ababab,#6c6c6c);box-shadow:inset 0 0 0 1px rgba(255,255,255,.12)"></div><div class="a" style="left:1773.3px;top:1004.0px;width:151.7px;height:33.4px;border-radius:3px;background:linear-gradient(#ababab,#6c6c6c);box-shadow:inset 0 0 0 1px rgba(255,255,255,.12)"></div><svg width="1920" height="1039" viewBox="0 0 1920 1039"><defs><linearGradient id="cg" x1="0" y1="0" x2="0" y2="1"><stop offset="0" stop-color="#8a8a8a"/><stop offset="1" stop-color="#b4b4b4"/></linearGradient><linearGradient id="cgd" x1="0" y1="0" x2="0" y2="1"><stop offset="0" stop-color="#2c2c2c"/><stop offset="1" stop-color="#3c3c3c"/></linearGradient></defs><circle cx="1644.7" cy="985.7" r="11" fill="url(#cg)"/><circle cx="1696.4" cy="985.7" r="11" fill="url(#cg)"/><circle cx="1747.3" cy="985.7" r="11" fill="url(#cg)"/><circle cx="1798" cy="985.7" r="11" fill="url(#cg)"/><circle cx="1849" cy="985.7" r="11" fill="url(#cgd)"/><circle cx="1900.5" cy="985.7" r="11" fill="url(#cgd)"/><circle cx="1590.7" cy="978.8" r="8.3" fill="url(#cg)"/><path d="M1583.6 981.4h14.2l-7.1-6.4z" fill="#333"/><rect x="1640.2" y="981.2" width="9" height="9" fill="#333"/><path d="M1693.4 980v11.6l9.4-5.8z" fill="#333"/><g fill="none" stroke="#333" stroke-width="1.7"><path d="M1743.8 980.6h-2.6v10.4h2.6M1750.8 980.6h2.6v10.4h-2.6"/></g><circle cx="1745.6" cy="985.8" r="1" fill="#333"/><circle cx="1749" cy="985.8" r="1" fill="#333"/><path d="M1798 985.7c-1.8-2.6-3.4-3.6-5.2-3.6a3.6 3.6 0 0 0 0 7.2c1.8 0 3.4-1 5.2-3.6c1.8-2.6 3.4-3.6 5.2-3.6a3.6 3.6 0 0 1 0 7.2c-1.8 0-3.4-1-5.2-3.6z" fill="none" stroke="#333" stroke-width="1.8"/><g fill="none" stroke="#1e1e1e" stroke-width="2.4"><path d="M1843.4 984.4a6 6 0 0 1 10.4-2.4"/><path d="M1854.6 987a6 6 0 0 1-10.4 2.4"/></g><path d="M1851.4 983.8h5v-5z" fill="#1e1e1e"/><path d="M1846.6 987.6h-5v5z" fill="#1e1e1e"/><rect x="1575" y="998" width="31" height="31.4" rx="4.5" fill="#b0b0b0" stroke="#242424" stroke-width="3"/><rect x="1576.5" y="1013.7" width="28" height="14.2" rx="2" fill="#888"/><rect x="1582.8" y="1006.6" width="15.4" height="7.2" fill="#2e2e2e"/><rect x="1582.8" y="1013.7" width="15.4" height="8" fill="#000"/><circle cx="1653.9" cy="1021" r="11" fill="url(#cg)"/><circle cx="1894.5" cy="1021" r="11" fill="url(#cg)"/><g fill="none" stroke="#3a3a3a" stroke-width="2"><path d="M1653 1016l-4 5l4 5M1658.6 1016l-4 5l4 5"/><path d="M1890.2 1016l4 5l-4 5M1895.8 1016l4 5l-4 5"/></g></svg><div class="t" style="left:1684.4px;top:1008.3px;font-size:26px;transform-origin:0 0;transform:scaleX(0.9619);color:#363636;-webkit-text-stroke:.55px #363636;">Back</div><div class="t" style="left:1804.6px;top:1008.3px;font-size:26px;transform-origin:0 0;transform:scaleX(1.0887);color:#363636;-webkit-text-stroke:.55px #363636;">Next</div></body></html>
